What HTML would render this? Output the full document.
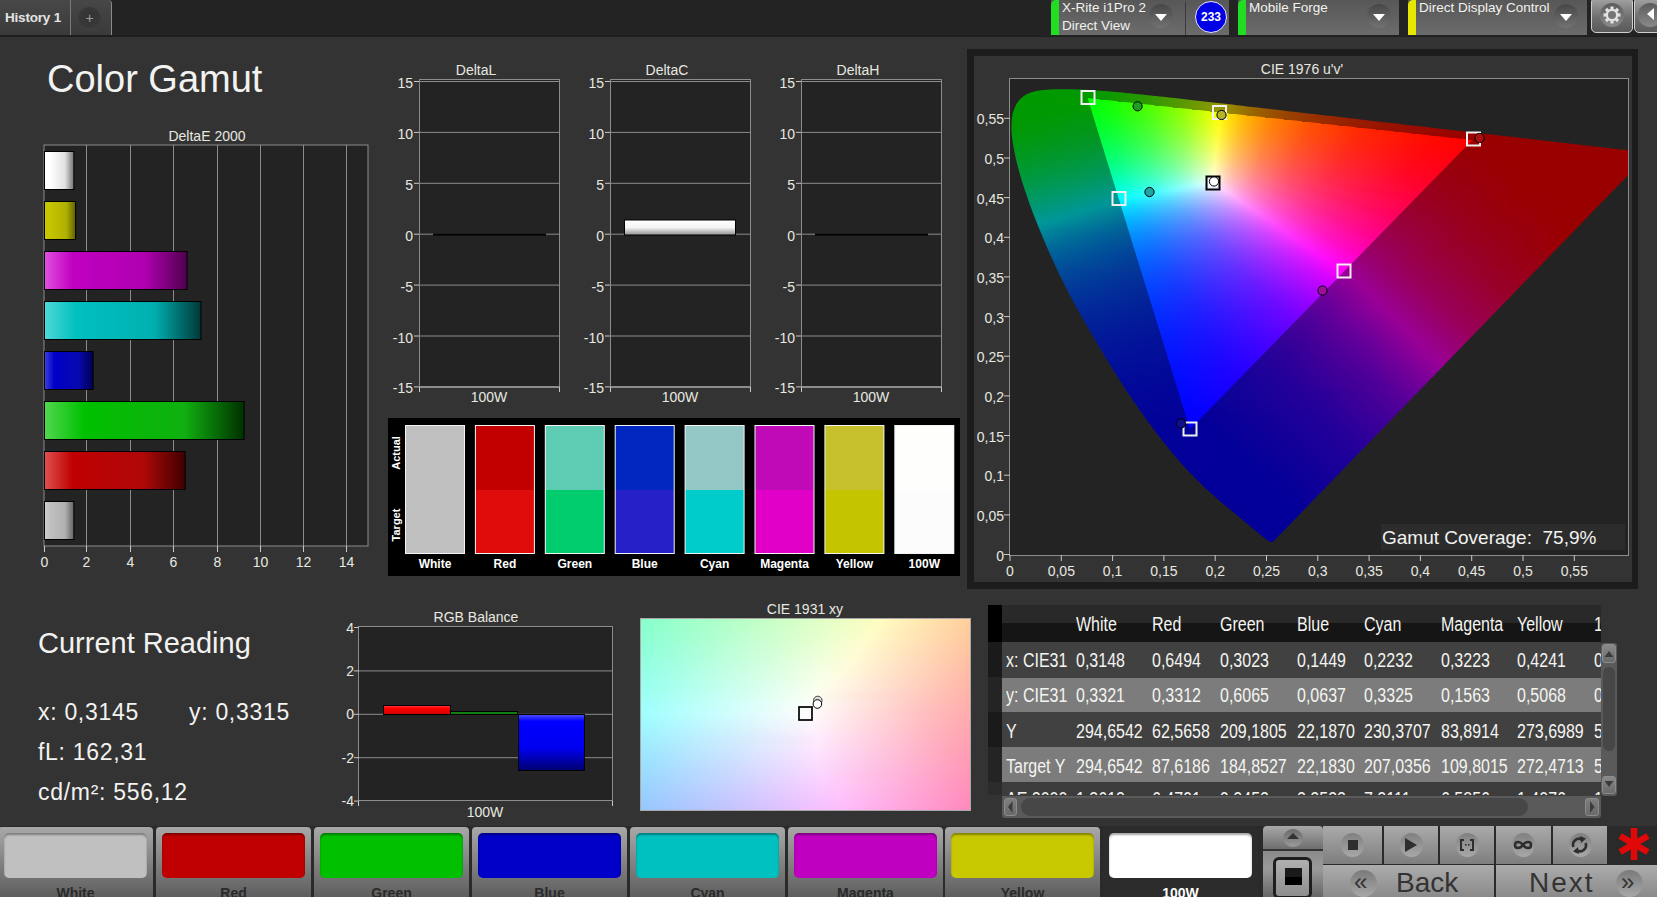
<!DOCTYPE html>
<html><head><meta charset="utf-8"><title>Color Gamut</title>
<style>
html,body{margin:0;padding:0}
body{width:1657px;height:897px;overflow:hidden;background:#333;position:relative;font-family:"Liberation Sans", sans-serif;color:#e8e8e0}
.a{position:absolute}
svg{position:absolute;left:0;top:0;overflow:visible}
svg text{font-family:"Liberation Sans", sans-serif}
</style></head><body>

<div class="a" style="left:0;top:0;width:1657px;height:36px;background:#232323"></div>
<div class="a" style="left:0;top:35px;width:1657px;height:2px;background:#1e1e1e"></div>
<div class="a" style="left:0;top:0;width:70px;height:35px;background:linear-gradient(#484848,#3a3a3a)"></div>
<div class="a" style="left:5px;top:10px;font-size:13.5px;font-weight:bold;color:#e4e4e4;white-space:nowrap;letter-spacing:-.2px">History 1</div>
<div class="a" style="left:70px;top:0;width:1px;height:35px;background:#7a7a7a"></div>
<div class="a" style="left:71px;top:0;width:41px;height:35px;background:linear-gradient(#474747,#3a3a3a);border-right:1px solid #8a8a8a;border-top-right-radius:4px;box-sizing:border-box"></div>
<div class="a" style="left:78px;top:7px;width:23px;height:24px;border-radius:50%;background:radial-gradient(circle at 50% 40%,#333 0,#383838 55%,#4a4a4a 100%)"></div>
<div class="a" style="left:84px;top:13px;width:11px;height:11px;font-size:14px;line-height:11px;text-align:center;color:#9a9a9a">+</div>
<div class="a" style="left:1040px;top:0;width:617px;height:36px;background:#232323"></div>
<div class="a" style="left:1051px;top:0;width:178px;height:35px;background:linear-gradient(#575757,#6c6c6c)"></div><div class="a" style="left:1051px;top:0;width:8px;height:35px;background:#22dd22;border-top-left-radius:5px"></div><div class="a" style="left:1062px;top:0px;font-size:13.5px;line-height:15px;color:#f2f2ee;white-space:nowrap">X-Rite i1Pro 2</div><div class="a" style="left:1062px;top:18px;font-size:13.5px;line-height:15px;color:#f2f2ee;white-space:nowrap">Direct View</div>
<div class="a" style="left:1185px;top:2px;width:1px;height:33px;background:#3a3a3a"></div>
<div class="a" style="left:1149px;top:4px;width:24px;height:24px;border-radius:50%;background:linear-gradient(#474747,#727272)"></div><div class="a" style="left:1155px;top:14px;width:0;height:0;border-left:6px solid transparent;border-right:6px solid transparent;border-top:7px solid #fff"></div>
<div class="a" style="left:1195px;top:1px;width:30px;height:30px;border-radius:50%;background:#0000e6;border:1px solid #e8e8ff;font-size:12px;font-weight:bold;line-height:30px;text-align:center;color:#fff">233</div>
<div class="a" style="left:1238px;top:0;width:161px;height:35px;background:linear-gradient(#575757,#6c6c6c)"></div><div class="a" style="left:1238px;top:0;width:8px;height:35px;background:#22dd22;border-top-left-radius:5px"></div><div class="a" style="left:1249px;top:0px;font-size:13.5px;line-height:15px;color:#f2f2ee;white-space:nowrap">Mobile Forge</div>
<div class="a" style="left:1367px;top:4px;width:24px;height:24px;border-radius:50%;background:linear-gradient(#474747,#727272)"></div><div class="a" style="left:1373px;top:14px;width:0;height:0;border-left:6px solid transparent;border-right:6px solid transparent;border-top:7px solid #fff"></div>
<div class="a" style="left:1408px;top:0;width:179px;height:35px;background:linear-gradient(#575757,#6c6c6c)"></div><div class="a" style="left:1408px;top:0;width:8px;height:35px;background:#e6e600;border-top-left-radius:5px"></div><div class="a" style="left:1419px;top:0px;font-size:13.5px;line-height:15px;color:#f2f2ee;white-space:nowrap">Direct Display Control</div>
<div class="a" style="left:1554px;top:4px;width:24px;height:24px;border-radius:50%;background:linear-gradient(#474747,#727272)"></div><div class="a" style="left:1560px;top:14px;width:0;height:0;border-left:6px solid transparent;border-right:6px solid transparent;border-top:7px solid #fff"></div>
<div class="a" style="left:1591px;top:-3px;width:42px;height:36px;box-sizing:border-box;border:1px solid #d0d0d0;border-radius:5px;background:linear-gradient(#a4a4a4,#6c6c6c 60%,#5a5a5a)"></div>
<div class="a" style="left:1600px;top:3px;width:24px;height:24px;border-radius:50%;background:linear-gradient(#5c5c5c,#8a8a8a)"></div>
<svg width="1657" height="897" style="pointer-events:none"><g transform="translate(1612,15)" fill="#e2e2e2">
<circle r="6.2"/><g id="teeth"><rect x="-1.6" y="-8.5" width="3.2" height="4" transform="rotate(0)"/><rect x="-1.6" y="-8.5" width="3.2" height="4" transform="rotate(45)"/><rect x="-1.6" y="-8.5" width="3.2" height="4" transform="rotate(90)"/><rect x="-1.6" y="-8.5" width="3.2" height="4" transform="rotate(135)"/><rect x="-1.6" y="-8.5" width="3.2" height="4" transform="rotate(180)"/><rect x="-1.6" y="-8.5" width="3.2" height="4" transform="rotate(225)"/><rect x="-1.6" y="-8.5" width="3.2" height="4" transform="rotate(270)"/><rect x="-1.6" y="-8.5" width="3.2" height="4" transform="rotate(315)"/></g>
<circle r="4" fill="#757575"/></g></svg>
<div class="a" style="left:1634px;top:-3px;width:40px;height:36px;box-sizing:border-box;border:1px solid #d0d0d0;border-radius:5px;background:linear-gradient(#a4a4a4,#6c6c6c 60%,#5a5a5a)"></div>
<div class="a" style="left:1638px;top:3px;width:24px;height:24px;border-radius:50%;background:linear-gradient(#5c5c5c,#8a8a8a)"></div>
<div class="a" style="left:1647px;top:8px;width:0;height:0;border-top:6.5px solid transparent;border-bottom:6.5px solid transparent;border-right:7px solid #fff"></div>
<div class="a" style="left:47px;top:57px;font-size:38px;line-height:44px;color:#f2f2f0;white-space:nowrap">Color Gamut</div>
<svg width="1657" height="897"><defs><linearGradient id="de_wh"><stop offset="0" stop-color="#ffffff"/><stop offset=".2" stop-color="#ffffff"/><stop offset=".7" stop-color="#e0e0e0"/><stop offset="1" stop-color="#707070"/></linearGradient><linearGradient id="de_ye"><stop offset="0" stop-color="#c8c800"/><stop offset=".2" stop-color="#c4c400"/><stop offset=".7" stop-color="#b0b000"/><stop offset="1" stop-color="#606000"/></linearGradient><linearGradient id="de_ma"><stop offset="0" stop-color="#e050e0"/><stop offset=".2" stop-color="#c000c0"/><stop offset=".7" stop-color="#b000b0"/><stop offset="1" stop-color="#500050"/></linearGradient><linearGradient id="de_cy"><stop offset="0" stop-color="#50d8d8"/><stop offset=".2" stop-color="#00c0c0"/><stop offset=".7" stop-color="#00b0b0"/><stop offset="1" stop-color="#003838"/></linearGradient><linearGradient id="de_bl"><stop offset="0" stop-color="#4040e0"/><stop offset=".2" stop-color="#0000c8"/><stop offset=".7" stop-color="#0808b0"/><stop offset="1" stop-color="#000050"/></linearGradient><linearGradient id="de_gr"><stop offset="0" stop-color="#50d850"/><stop offset=".2" stop-color="#00c000"/><stop offset=".7" stop-color="#10b010"/><stop offset="1" stop-color="#003000"/></linearGradient><linearGradient id="de_re"><stop offset="0" stop-color="#e05050"/><stop offset=".2" stop-color="#c00000"/><stop offset=".7" stop-color="#b00808"/><stop offset="1" stop-color="#400000"/></linearGradient><linearGradient id="de_gy"><stop offset="0" stop-color="#d0d0d0"/><stop offset=".2" stop-color="#c0c0c0"/><stop offset=".7" stop-color="#b0b0b0"/><stop offset="1" stop-color="#606060"/></linearGradient><linearGradient id="dc" x1="0" y1="0" x2="0" y2="1"><stop offset="0" stop-color="#fff"/><stop offset=".5" stop-color="#f4f4f4"/><stop offset="1" stop-color="#909090"/></linearGradient><linearGradient id="rb" x1="0" y1="0" x2="0" y2="1"><stop offset="0" stop-color="#ff4040"/><stop offset=".3" stop-color="#ff0000"/><stop offset="1" stop-color="#d00000"/></linearGradient><linearGradient id="bb" x1="0" y1="0" x2="0" y2="1"><stop offset="0" stop-color="#5050ff"/><stop offset=".12" stop-color="#0000ff"/><stop offset=".6" stop-color="#0000f0"/><stop offset="1" stop-color="#000070"/></linearGradient></defs><rect x="44" y="145" width="324" height="401" fill="#232323" stroke="#8c8c8c" stroke-width="1"/>
<text x="207" y="141" font-size="14" fill="#e8e8e0" text-anchor="middle">DeltaE 2000</text>
<line x1="86.5" y1="145" x2="86.5" y2="546" stroke="#8c8c8c"/>
<line x1="130.5" y1="145" x2="130.5" y2="546" stroke="#8c8c8c"/>
<line x1="173.5" y1="145" x2="173.5" y2="546" stroke="#8c8c8c"/>
<line x1="217.5" y1="145" x2="217.5" y2="546" stroke="#8c8c8c"/>
<line x1="260.5" y1="145" x2="260.5" y2="546" stroke="#8c8c8c"/>
<line x1="303.5" y1="145" x2="303.5" y2="546" stroke="#8c8c8c"/>
<line x1="346.5" y1="145" x2="346.5" y2="546" stroke="#8c8c8c"/>
<line x1="44.5" y1="546" x2="44.5" y2="552" stroke="#c8c8c8"/>
<text x="44.5" y="567" font-size="14" fill="#e8e8e0" text-anchor="middle">0</text>
<line x1="86.5" y1="546" x2="86.5" y2="552" stroke="#c8c8c8"/>
<text x="86.5" y="567" font-size="14" fill="#e8e8e0" text-anchor="middle">2</text>
<line x1="130.5" y1="546" x2="130.5" y2="552" stroke="#c8c8c8"/>
<text x="130.5" y="567" font-size="14" fill="#e8e8e0" text-anchor="middle">4</text>
<line x1="173.5" y1="546" x2="173.5" y2="552" stroke="#c8c8c8"/>
<text x="173.5" y="567" font-size="14" fill="#e8e8e0" text-anchor="middle">6</text>
<line x1="217.5" y1="546" x2="217.5" y2="552" stroke="#c8c8c8"/>
<text x="217.5" y="567" font-size="14" fill="#e8e8e0" text-anchor="middle">8</text>
<line x1="260.5" y1="546" x2="260.5" y2="552" stroke="#c8c8c8"/>
<text x="260.5" y="567" font-size="14" fill="#e8e8e0" text-anchor="middle">10</text>
<line x1="303.5" y1="546" x2="303.5" y2="552" stroke="#c8c8c8"/>
<text x="303.5" y="567" font-size="14" fill="#e8e8e0" text-anchor="middle">12</text>
<line x1="346.5" y1="546" x2="346.5" y2="552" stroke="#c8c8c8"/>
<text x="346.5" y="567" font-size="14" fill="#e8e8e0" text-anchor="middle">14</text>
<rect x="44.5" y="151.5" width="29.4" height="38" fill="url(#de_wh)" stroke="#000"/>
<rect x="44.5" y="201.5" width="31.1" height="38" fill="url(#de_ye)" stroke="#000"/>
<rect x="44.5" y="251.5" width="142.6" height="38" fill="url(#de_ma)" stroke="#000"/>
<rect x="44.5" y="301.5" width="156.4" height="38" fill="url(#de_cy)" stroke="#000"/>
<rect x="44.5" y="351.5" width="48.6" height="38" fill="url(#de_bl)" stroke="#000"/>
<rect x="44.5" y="401.5" width="199.6" height="38" fill="url(#de_gr)" stroke="#000"/>
<rect x="44.5" y="451.5" width="140.6" height="38" fill="url(#de_re)" stroke="#000"/>
<rect x="44.5" y="501.5" width="29.4" height="38" fill="url(#de_gy)" stroke="#000"/>
<rect x="419.5" y="79.5" width="140" height="307.5" fill="#232323" stroke="#8c8c8c"/>
<text x="476" y="75" font-size="14" fill="#e8e8e0" text-anchor="middle">DeltaL</text>
<line x1="419" y1="81.5" x2="559" y2="81.5" stroke="#8c8c8c"/>
<line x1="414" y1="81.5" x2="419" y2="81.5" stroke="#c8c8c8"/>
<text x="413" y="88.0" font-size="14" fill="#e8e8e0" text-anchor="end">15</text>
<line x1="419" y1="132.4" x2="559" y2="132.4" stroke="#8c8c8c"/>
<line x1="414" y1="132.4" x2="419" y2="132.4" stroke="#c8c8c8"/>
<text x="413" y="138.9" font-size="14" fill="#e8e8e0" text-anchor="end">10</text>
<line x1="419" y1="183.3" x2="559" y2="183.3" stroke="#8c8c8c"/>
<line x1="414" y1="183.3" x2="419" y2="183.3" stroke="#c8c8c8"/>
<text x="413" y="189.8" font-size="14" fill="#e8e8e0" text-anchor="end">5</text>
<line x1="419" y1="234.2" x2="559" y2="234.2" stroke="#8c8c8c"/>
<line x1="414" y1="234.2" x2="419" y2="234.2" stroke="#c8c8c8"/>
<text x="413" y="240.7" font-size="14" fill="#e8e8e0" text-anchor="end">0</text>
<line x1="419" y1="285.1" x2="559" y2="285.1" stroke="#8c8c8c"/>
<line x1="414" y1="285.1" x2="419" y2="285.1" stroke="#c8c8c8"/>
<text x="413" y="291.6" font-size="14" fill="#e8e8e0" text-anchor="end">-5</text>
<line x1="419" y1="336.0" x2="559" y2="336.0" stroke="#8c8c8c"/>
<line x1="414" y1="336.0" x2="419" y2="336.0" stroke="#c8c8c8"/>
<text x="413" y="342.5" font-size="14" fill="#e8e8e0" text-anchor="end">-10</text>
<line x1="419" y1="386.9" x2="559" y2="386.9" stroke="#8c8c8c" stroke-width="2"/>
<line x1="414" y1="386.9" x2="419" y2="386.9" stroke="#c8c8c8"/>
<text x="413" y="393.4" font-size="14" fill="#e8e8e0" text-anchor="end">-15</text>
<line x1="419.5" y1="387" x2="419.5" y2="392" stroke="#c8c8c8"/><line x1="559.5" y1="387" x2="559.5" y2="392" stroke="#c8c8c8"/>
<text x="489" y="402" font-size="14" fill="#e8e8e0" text-anchor="middle">100W</text>
<rect x="433.5" y="234" width="112" height="1" fill="#111" stroke="#000"/>
<rect x="610.5" y="79.5" width="140" height="307.5" fill="#232323" stroke="#8c8c8c"/>
<text x="667" y="75" font-size="14" fill="#e8e8e0" text-anchor="middle">DeltaC</text>
<line x1="610" y1="81.5" x2="750" y2="81.5" stroke="#8c8c8c"/>
<line x1="605" y1="81.5" x2="610" y2="81.5" stroke="#c8c8c8"/>
<text x="604" y="88.0" font-size="14" fill="#e8e8e0" text-anchor="end">15</text>
<line x1="610" y1="132.4" x2="750" y2="132.4" stroke="#8c8c8c"/>
<line x1="605" y1="132.4" x2="610" y2="132.4" stroke="#c8c8c8"/>
<text x="604" y="138.9" font-size="14" fill="#e8e8e0" text-anchor="end">10</text>
<line x1="610" y1="183.3" x2="750" y2="183.3" stroke="#8c8c8c"/>
<line x1="605" y1="183.3" x2="610" y2="183.3" stroke="#c8c8c8"/>
<text x="604" y="189.8" font-size="14" fill="#e8e8e0" text-anchor="end">5</text>
<line x1="610" y1="234.2" x2="750" y2="234.2" stroke="#8c8c8c"/>
<line x1="605" y1="234.2" x2="610" y2="234.2" stroke="#c8c8c8"/>
<text x="604" y="240.7" font-size="14" fill="#e8e8e0" text-anchor="end">0</text>
<line x1="610" y1="285.1" x2="750" y2="285.1" stroke="#8c8c8c"/>
<line x1="605" y1="285.1" x2="610" y2="285.1" stroke="#c8c8c8"/>
<text x="604" y="291.6" font-size="14" fill="#e8e8e0" text-anchor="end">-5</text>
<line x1="610" y1="336.0" x2="750" y2="336.0" stroke="#8c8c8c"/>
<line x1="605" y1="336.0" x2="610" y2="336.0" stroke="#c8c8c8"/>
<text x="604" y="342.5" font-size="14" fill="#e8e8e0" text-anchor="end">-10</text>
<line x1="610" y1="386.9" x2="750" y2="386.9" stroke="#8c8c8c" stroke-width="2"/>
<line x1="605" y1="386.9" x2="610" y2="386.9" stroke="#c8c8c8"/>
<text x="604" y="393.4" font-size="14" fill="#e8e8e0" text-anchor="end">-15</text>
<line x1="610.5" y1="387" x2="610.5" y2="392" stroke="#c8c8c8"/><line x1="750.5" y1="387" x2="750.5" y2="392" stroke="#c8c8c8"/>
<text x="680" y="402" font-size="14" fill="#e8e8e0" text-anchor="middle">100W</text>
<rect x="624.5" y="220" width="111" height="15" fill="url(#dc)" stroke="#000"/>
<rect x="801.5" y="79.5" width="140" height="307.5" fill="#232323" stroke="#8c8c8c"/>
<text x="858" y="75" font-size="14" fill="#e8e8e0" text-anchor="middle">DeltaH</text>
<line x1="801" y1="81.5" x2="941" y2="81.5" stroke="#8c8c8c"/>
<line x1="796" y1="81.5" x2="801" y2="81.5" stroke="#c8c8c8"/>
<text x="795" y="88.0" font-size="14" fill="#e8e8e0" text-anchor="end">15</text>
<line x1="801" y1="132.4" x2="941" y2="132.4" stroke="#8c8c8c"/>
<line x1="796" y1="132.4" x2="801" y2="132.4" stroke="#c8c8c8"/>
<text x="795" y="138.9" font-size="14" fill="#e8e8e0" text-anchor="end">10</text>
<line x1="801" y1="183.3" x2="941" y2="183.3" stroke="#8c8c8c"/>
<line x1="796" y1="183.3" x2="801" y2="183.3" stroke="#c8c8c8"/>
<text x="795" y="189.8" font-size="14" fill="#e8e8e0" text-anchor="end">5</text>
<line x1="801" y1="234.2" x2="941" y2="234.2" stroke="#8c8c8c"/>
<line x1="796" y1="234.2" x2="801" y2="234.2" stroke="#c8c8c8"/>
<text x="795" y="240.7" font-size="14" fill="#e8e8e0" text-anchor="end">0</text>
<line x1="801" y1="285.1" x2="941" y2="285.1" stroke="#8c8c8c"/>
<line x1="796" y1="285.1" x2="801" y2="285.1" stroke="#c8c8c8"/>
<text x="795" y="291.6" font-size="14" fill="#e8e8e0" text-anchor="end">-5</text>
<line x1="801" y1="336.0" x2="941" y2="336.0" stroke="#8c8c8c"/>
<line x1="796" y1="336.0" x2="801" y2="336.0" stroke="#c8c8c8"/>
<text x="795" y="342.5" font-size="14" fill="#e8e8e0" text-anchor="end">-10</text>
<line x1="801" y1="386.9" x2="941" y2="386.9" stroke="#8c8c8c" stroke-width="2"/>
<line x1="796" y1="386.9" x2="801" y2="386.9" stroke="#c8c8c8"/>
<text x="795" y="393.4" font-size="14" fill="#e8e8e0" text-anchor="end">-15</text>
<line x1="801.5" y1="387" x2="801.5" y2="392" stroke="#c8c8c8"/><line x1="941.5" y1="387" x2="941.5" y2="392" stroke="#c8c8c8"/>
<text x="871" y="402" font-size="14" fill="#e8e8e0" text-anchor="middle">100W</text>
<rect x="815.5" y="234" width="112" height="1" fill="#111" stroke="#000"/>
<rect x="388" y="418" width="572" height="158" fill="#000"/>
<rect x="405.0" y="425" width="60" height="129" fill="#f4f4f4"/>
<rect x="406.0" y="426" width="58" height="64" fill="#c0c0c0"/>
<rect x="406.0" y="490" width="58" height="63" fill="#c0c0c0"/>
<text x="435.0" y="568" font-size="12" font-weight="bold" fill="#fff" text-anchor="middle">White</text>
<rect x="474.9" y="425" width="60" height="129" fill="#f4f4f4"/>
<rect x="475.9" y="426" width="58" height="64" fill="#c20000"/>
<rect x="475.9" y="490" width="58" height="63" fill="#e00c0c"/>
<text x="504.9" y="568" font-size="12" font-weight="bold" fill="#fff" text-anchor="middle">Red</text>
<rect x="544.8" y="425" width="60" height="129" fill="#f4f4f4"/>
<rect x="545.8" y="426" width="58" height="64" fill="#5ecbb3"/>
<rect x="545.8" y="490" width="58" height="63" fill="#00cc6e"/>
<text x="574.8" y="568" font-size="12" font-weight="bold" fill="#fff" text-anchor="middle">Green</text>
<rect x="614.7" y="425" width="60" height="129" fill="#f4f4f4"/>
<rect x="615.7" y="426" width="58" height="64" fill="#0028c0"/>
<rect x="615.7" y="490" width="58" height="63" fill="#2620c8"/>
<text x="644.7" y="568" font-size="12" font-weight="bold" fill="#fff" text-anchor="middle">Blue</text>
<rect x="684.6" y="425" width="60" height="129" fill="#f4f4f4"/>
<rect x="685.6" y="426" width="58" height="64" fill="#93c8c6"/>
<rect x="685.6" y="490" width="58" height="63" fill="#00cccc"/>
<text x="714.6" y="568" font-size="12" font-weight="bold" fill="#fff" text-anchor="middle">Cyan</text>
<rect x="754.5" y="425" width="60" height="129" fill="#f4f4f4"/>
<rect x="755.5" y="426" width="58" height="64" fill="#c00ab8"/>
<rect x="755.5" y="490" width="58" height="63" fill="#e000c8"/>
<text x="784.5" y="568" font-size="12" font-weight="bold" fill="#fff" text-anchor="middle">Magenta</text>
<rect x="824.4" y="425" width="60" height="129" fill="#f4f4f4"/>
<rect x="825.4" y="426" width="58" height="64" fill="#c6c02c"/>
<rect x="825.4" y="490" width="58" height="63" fill="#c4c400"/>
<text x="854.4" y="568" font-size="12" font-weight="bold" fill="#fff" text-anchor="middle">Yellow</text>
<rect x="894.3" y="425" width="60" height="129" fill="#f4f4f4"/>
<rect x="895.3" y="426" width="58" height="64" fill="#fefefc"/>
<rect x="895.3" y="490" width="58" height="63" fill="#fcfcfc"/>
<text x="924.3" y="568" font-size="12" font-weight="bold" fill="#fff" text-anchor="middle">100W</text>
<text transform="translate(400,453) rotate(-90)" font-size="11" font-weight="bold" fill="#fff" text-anchor="middle">Actual</text>
<text transform="translate(400,525) rotate(-90)" font-size="11" font-weight="bold" fill="#fff" text-anchor="middle">Target</text>
<rect x="967" y="49" width="671" height="540" fill="#1c1c1c"/>
<rect x="974" y="56" width="658" height="526" fill="#333"/>
<text x="1302" y="74" font-size="14" fill="#e8e8e0" text-anchor="middle">CIE 1976 u'v'</text>
<rect x="1009.5" y="78.5" width="619" height="477" fill="#232323" stroke="#8c8c8c"/>
<defs><linearGradient id="d0"><stop offset="0" stop-color="#009900"/><stop offset=".1392" stop-color="#039900"/><stop offset=".2209" stop-color="#2a9900"/><stop offset=".2937" stop-color="#629900"/><stop offset=".3455" stop-color="#999700"/><stop offset=".3964" stop-color="#996500"/><stop offset=".4693" stop-color="#993a00"/><stop offset=".5801" stop-color="#991800"/><stop offset=".7484" stop-color="#990100"/><stop offset="1" stop-color="#990000"/></linearGradient><linearGradient id="d1"><stop offset="0" stop-color="#009900"/><stop offset=".1392" stop-color="#039900"/><stop offset=".2209" stop-color="#2a9900"/><stop offset=".2937" stop-color="#639900"/><stop offset=".3455" stop-color="#999600"/><stop offset=".3964" stop-color="#996400"/><stop offset=".4693" stop-color="#993a00"/><stop offset=".5801" stop-color="#991800"/><stop offset=".7484" stop-color="#990000"/><stop offset="1" stop-color="#990000"/></linearGradient><linearGradient id="d2"><stop offset="0" stop-color="#009900"/><stop offset=".1392" stop-color="#039900"/><stop offset=".2209" stop-color="#2a9900"/><stop offset=".2937" stop-color="#639900"/><stop offset=".3447" stop-color="#999700"/><stop offset=".3948" stop-color="#996500"/><stop offset=".4676" stop-color="#993b00"/><stop offset=".5777" stop-color="#991800"/><stop offset=".7451" stop-color="#990100"/><stop offset="1" stop-color="#990000"/></linearGradient><linearGradient id="d3"><stop offset="0" stop-color="#009900"/><stop offset=".1383" stop-color="#039900"/><stop offset=".2201" stop-color="#2a9900"/><stop offset=".2929" stop-color="#629900"/><stop offset=".3447" stop-color="#999600"/><stop offset=".3956" stop-color="#996500"/><stop offset=".4684" stop-color="#993a00"/><stop offset=".5793" stop-color="#991800"/><stop offset=".7476" stop-color="#990000"/><stop offset="1" stop-color="#990000"/></linearGradient><linearGradient id="d4"><stop offset="0" stop-color="#009900"/><stop offset=".1383" stop-color="#039900"/><stop offset=".2201" stop-color="#2a9900"/><stop offset=".2929" stop-color="#639900"/><stop offset=".3447" stop-color="#999600"/><stop offset=".3956" stop-color="#996400"/><stop offset=".4684" stop-color="#993a00"/><stop offset=".5793" stop-color="#991800"/><stop offset=".7476" stop-color="#990000"/><stop offset="1" stop-color="#990000"/></linearGradient><linearGradient id="d5"><stop offset="0" stop-color="#009900"/><stop offset=".1375" stop-color="#039900"/><stop offset=".2193" stop-color="#2a9900"/><stop offset=".2921" stop-color="#629900"/><stop offset=".3439" stop-color="#999600"/><stop offset=".3948" stop-color="#996500"/><stop offset=".4676" stop-color="#993a00"/><stop offset=".5785" stop-color="#991800"/><stop offset=".7468" stop-color="#990000"/><stop offset="1" stop-color="#990000"/></linearGradient><linearGradient id="d6"><stop offset="0" stop-color="#009900"/><stop offset=".1367" stop-color="#039900"/><stop offset=".2168" stop-color="#299900"/><stop offset=".2905" stop-color="#619900"/><stop offset=".3439" stop-color="#999600"/><stop offset=".3948" stop-color="#996400"/><stop offset=".4676" stop-color="#993a00"/><stop offset=".5785" stop-color="#991800"/><stop offset=".7468" stop-color="#990000"/><stop offset="1" stop-color="#990000"/></linearGradient><linearGradient id="b6"><stop offset="0" stop-color="#00ff01"/><stop offset="1" stop-color="#0aff00"/></linearGradient><linearGradient id="d7"><stop offset="0" stop-color="#009900"/><stop offset=".1351" stop-color="#039901"/><stop offset=".2128" stop-color="#279900"/><stop offset=".2872" stop-color="#5e9900"/><stop offset=".343" stop-color="#999700"/><stop offset=".394" stop-color="#996500"/><stop offset=".4668" stop-color="#993a00"/><stop offset=".5777" stop-color="#991800"/><stop offset=".746" stop-color="#990000"/><stop offset="1" stop-color="#990000"/></linearGradient><linearGradient id="b7"><stop offset="0" stop-color="#00ff03"/><stop offset=".7656" stop-color="#15ff00"/><stop offset="1" stop-color="#1fff00"/></linearGradient><linearGradient id="d8"><stop offset="0" stop-color="#009900"/><stop offset=".1343" stop-color="#039903"/><stop offset=".2249" stop-color="#2e9900"/><stop offset=".2969" stop-color="#689900"/><stop offset=".343" stop-color="#999600"/><stop offset=".394" stop-color="#996400"/><stop offset=".4668" stop-color="#993a00"/><stop offset=".5777" stop-color="#991800"/><stop offset=".746" stop-color="#990000"/><stop offset="1" stop-color="#990000"/></linearGradient><linearGradient id="b8"><stop offset="0" stop-color="#00ff05"/><stop offset=".4216" stop-color="#11ff03"/><stop offset="1" stop-color="#3aff00"/></linearGradient><linearGradient id="d9"><stop offset="0" stop-color="#009900"/><stop offset=".1278" stop-color="#009904"/><stop offset=".2468" stop-color="#3e9900"/><stop offset=".3147" stop-color="#7b9900"/><stop offset=".343" stop-color="#999600"/><stop offset=".394" stop-color="#996400"/><stop offset=".4668" stop-color="#993a00"/><stop offset=".5777" stop-color="#991800"/><stop offset=".746" stop-color="#990000"/><stop offset="1" stop-color="#990000"/></linearGradient><linearGradient id="b9"><stop offset="0" stop-color="#00ff08"/><stop offset=".3382" stop-color="#13ff05"/><stop offset=".9118" stop-color="#4dff00"/><stop offset="1" stop-color="#59ff00"/></linearGradient><linearGradient id="d10"><stop offset="0" stop-color="#009900"/><stop offset=".1189" stop-color="#009904"/><stop offset=".14" stop-color="#069905"/><stop offset=".2718" stop-color="#529900"/><stop offset=".335" stop-color="#939900"/><stop offset=".3447" stop-color="#999300"/><stop offset=".3964" stop-color="#996200"/><stop offset=".4709" stop-color="#993800"/><stop offset=".5841" stop-color="#991600"/><stop offset=".7532" stop-color="#990000"/><stop offset="1" stop-color="#990000"/></linearGradient><linearGradient id="b10"><stop offset="0" stop-color="#00ff0a"/><stop offset=".2326" stop-color="#0fff08"/><stop offset=".686" stop-color="#48ff03"/><stop offset="1" stop-color="#7dff00"/></linearGradient><linearGradient id="d11"><stop offset="0" stop-color="#009900"/><stop offset=".1117" stop-color="#009905"/><stop offset=".1367" stop-color="#049907"/><stop offset=".2985" stop-color="#6b9900"/><stop offset=".3422" stop-color="#999600"/><stop offset=".3932" stop-color="#996400"/><stop offset=".466" stop-color="#993a00"/><stop offset=".5769" stop-color="#991800"/><stop offset=".7451" stop-color="#990000"/><stop offset="1" stop-color="#990000"/></linearGradient><linearGradient id="b11"><stop offset="0" stop-color="#00ff0d"/><stop offset=".2067" stop-color="#12ff0b"/><stop offset=".5769" stop-color="#4bff05"/><stop offset=".9183" stop-color="#96ff01"/><stop offset="1" stop-color="#abff00"/></linearGradient><linearGradient id="d12"><stop offset="0" stop-color="#009900"/><stop offset=".1052" stop-color="#009905"/><stop offset=".1367" stop-color="#039909"/><stop offset=".3261" stop-color="#899900"/><stop offset=".3422" stop-color="#999500"/><stop offset=".3932" stop-color="#996400"/><stop offset=".4668" stop-color="#993a00"/><stop offset=".5785" stop-color="#991700"/><stop offset=".7468" stop-color="#990000"/><stop offset="1" stop-color="#990000"/></linearGradient><linearGradient id="b12"><stop offset="0" stop-color="#00ff10"/><stop offset=".1901" stop-color="#14ff0d"/><stop offset=".5083" stop-color="#4fff08"/><stop offset=".7975" stop-color="#9bff03"/><stop offset="1" stop-color="#dfff00"/></linearGradient><linearGradient id="d13"><stop offset="0" stop-color="#009900"/><stop offset=".1019" stop-color="#009906"/><stop offset=".1375" stop-color="#03990b"/><stop offset=".3519" stop-color="#998a00"/><stop offset=".407" stop-color="#995a00"/><stop offset=".4871" stop-color="#993100"/><stop offset=".61" stop-color="#991100"/><stop offset=".7686" stop-color="#990000"/><stop offset="1" stop-color="#990000"/></linearGradient><linearGradient id="b13"><stop offset="0" stop-color="#00ff13"/><stop offset=".1429" stop-color="#10ff11"/><stop offset=".4143" stop-color="#48ff0c"/><stop offset=".6679" stop-color="#93ff07"/><stop offset=".8857" stop-color="#e9ff02"/><stop offset=".9393" stop-color="#fffc01"/><stop offset="1" stop-color="#ffe100"/></linearGradient><linearGradient id="d14"><stop offset="0" stop-color="#009900"/><stop offset=".1052" stop-color="#009908"/><stop offset=".1392" stop-color="#04980d"/><stop offset=".3835" stop-color="#996b00"/><stop offset=".4523" stop-color="#994000"/><stop offset=".5558" stop-color="#991c00"/><stop offset=".7168" stop-color="#990300"/><stop offset="1" stop-color="#990000"/></linearGradient><linearGradient id="b14"><stop offset="0" stop-color="#00ff16"/><stop offset=".1369" stop-color="#12ff14"/><stop offset=".379" stop-color="#4cff0f"/><stop offset=".6019" stop-color="#98ff0a"/><stop offset=".793" stop-color="#efff05"/><stop offset=".8312" stop-color="#fffb04"/><stop offset=".9745" stop-color="#ffbc00"/><stop offset="1" stop-color="#ffb300"/></linearGradient><linearGradient id="d15"><stop offset="0" stop-color="#009900"/><stop offset=".1246" stop-color="#00990d"/><stop offset=".1456" stop-color="#06970e"/><stop offset=".4134" stop-color="#995500"/><stop offset=".4968" stop-color="#992d00"/><stop offset=".6262" stop-color="#990e00"/><stop offset=".7767" stop-color="#990000"/><stop offset="1" stop-color="#990000"/></linearGradient><linearGradient id="b15"><stop offset="0" stop-color="#00ff19"/><stop offset=".1322" stop-color="#15ff17"/><stop offset=".3477" stop-color="#4fff12"/><stop offset=".546" stop-color="#9cff0d"/><stop offset=".7155" stop-color="#f3ff08"/><stop offset=".7414" stop-color="#fffc08"/><stop offset=".8707" stop-color="#ffbc03"/><stop offset="1" stop-color="#ff8f00"/></linearGradient><linearGradient id="d16"><stop offset="0" stop-color="#009900"/><stop offset=".1416" stop-color="#039711"/><stop offset=".4442" stop-color="#994300"/><stop offset=".5437" stop-color="#991f00"/><stop offset=".699" stop-color="#990400"/><stop offset=".8754" stop-color="#990000"/><stop offset="1" stop-color="#990000"/></linearGradient><linearGradient id="b16"><stop offset="0" stop-color="#00ff1d"/><stop offset=".1036" stop-color="#10ff1b"/><stop offset=".2979" stop-color="#49ff17"/><stop offset=".4767" stop-color="#94ff12"/><stop offset=".6321" stop-color="#ebff0d"/><stop offset=".6684" stop-color="#fffb0c"/><stop offset=".785" stop-color="#ffbb06"/><stop offset=".9378" stop-color="#ff8301"/><stop offset="1" stop-color="#ff7100"/></linearGradient><linearGradient id="d17"><stop offset="0" stop-color="#009900"/><stop offset=".1432" stop-color="#039713"/><stop offset=".4749" stop-color="#993500"/><stop offset=".5922" stop-color="#991400"/><stop offset=".7573" stop-color="#990000"/><stop offset="1" stop-color="#990000"/></linearGradient><linearGradient id="b17"><stop offset="0" stop-color="#00ff20"/><stop offset=".1024" stop-color="#13ff1e"/><stop offset=".2786" stop-color="#4cff1a"/><stop offset=".4405" stop-color="#98ff16"/><stop offset=".581" stop-color="#efff11"/><stop offset=".6071" stop-color="#fffc10"/><stop offset=".7119" stop-color="#ffbd09"/><stop offset=".85" stop-color="#ff8403"/><stop offset="1" stop-color="#ff5b00"/></linearGradient><linearGradient id="d18"><stop offset="0" stop-color="#009900"/><stop offset=".1448" stop-color="#039715"/><stop offset=".5049" stop-color="#992a00"/><stop offset=".6392" stop-color="#990c00"/><stop offset=".7832" stop-color="#990000"/><stop offset="1" stop-color="#990000"/></linearGradient><linearGradient id="b18"><stop offset="0" stop-color="#00ff24"/><stop offset=".083" stop-color="#0fff22"/><stop offset=".2445" stop-color="#47ff1e"/><stop offset=".3952" stop-color="#92ff1a"/><stop offset=".524" stop-color="#e8ff16"/><stop offset=".5568" stop-color="#fffc15"/><stop offset=".6528" stop-color="#ffbc0d"/><stop offset=".7795" stop-color="#ff8306"/><stop offset=".952" stop-color="#ff5201"/><stop offset="1" stop-color="#ff4700"/></linearGradient><linearGradient id="d19"><stop offset="0" stop-color="#009901"/><stop offset=".1456" stop-color="#039717"/><stop offset=".5348" stop-color="#992100"/><stop offset=".6861" stop-color="#990600"/><stop offset=".8261" stop-color="#990000"/><stop offset="1" stop-color="#990000"/></linearGradient><linearGradient id="b19"><stop offset="0" stop-color="#00ff27"/><stop offset=".0813" stop-color="#11ff26"/><stop offset=".2297" stop-color="#4aff23"/><stop offset=".3679" stop-color="#95ff1f"/><stop offset=".4878" stop-color="#ecff1b"/><stop offset=".5142" stop-color="#fffb1a"/><stop offset=".6037" stop-color="#ffbb11"/><stop offset=".7215" stop-color="#ff8209"/><stop offset=".8821" stop-color="#ff5102"/><stop offset="1" stop-color="#ff3800"/></linearGradient><linearGradient id="d20"><stop offset="0" stop-color="#009903"/><stop offset=".1481" stop-color="#039719"/><stop offset=".5655" stop-color="#991900"/><stop offset=".7314" stop-color="#990100"/><stop offset="1" stop-color="#990000"/></linearGradient><linearGradient id="b20"><stop offset="0" stop-color="#00ff2b"/><stop offset=".0817" stop-color="#13ff29"/><stop offset=".2205" stop-color="#4eff27"/><stop offset=".3479" stop-color="#9aff23"/><stop offset=".4582" stop-color="#f2ff20"/><stop offset=".4753" stop-color="#fffc1f"/><stop offset=".557" stop-color="#ffbd15"/><stop offset=".6654" stop-color="#ff840c"/><stop offset=".8137" stop-color="#ff5205"/><stop offset="1" stop-color="#ff2c00"/></linearGradient><linearGradient id="d21"><stop offset="0" stop-color="#009904"/><stop offset=".1497" stop-color="#03961b"/><stop offset=".5963" stop-color="#991300"/><stop offset=".7589" stop-color="#990000"/><stop offset="1" stop-color="#990000"/></linearGradient><linearGradient id="b21"><stop offset="0" stop-color="#00ff2f"/><stop offset=".0656" stop-color="#0fff2e"/><stop offset=".1933" stop-color="#47ff2b"/><stop offset=".3121" stop-color="#91ff29"/><stop offset=".4149" stop-color="#e6ff26"/><stop offset=".4415" stop-color="#fffd25"/><stop offset=".5177" stop-color="#ffbd19"/><stop offset=".6188" stop-color="#ff840f"/><stop offset=".7553" stop-color="#ff5207"/><stop offset=".9504" stop-color="#ff2801"/><stop offset="1" stop-color="#ff2100"/></linearGradient><linearGradient id="d22"><stop offset="0" stop-color="#009905"/><stop offset=".1513" stop-color="#03961e"/><stop offset=".6262" stop-color="#990e00"/><stop offset=".7759" stop-color="#990000"/><stop offset="1" stop-color="#990000"/></linearGradient><linearGradient id="b22"><stop offset="0" stop-color="#00ff33"/><stop offset=".0669" stop-color="#12ff32"/><stop offset=".1873" stop-color="#4bff30"/><stop offset=".2977" stop-color="#96ff2d"/><stop offset=".393" stop-color="#ecff2b"/><stop offset=".413" stop-color="#fffd2a"/><stop offset=".4849" stop-color="#ffbc1e"/><stop offset=".5786" stop-color="#ff8413"/><stop offset=".7074" stop-color="#ff520a"/><stop offset=".8896" stop-color="#ff2802"/><stop offset="1" stop-color="#ff1800"/></linearGradient><linearGradient id="d23"><stop offset="0" stop-color="#009907"/><stop offset=".1529" stop-color="#039620"/><stop offset=".6561" stop-color="#990900"/><stop offset=".7929" stop-color="#990000"/><stop offset="1" stop-color="#990000"/></linearGradient><linearGradient id="b23"><stop offset="0" stop-color="#00ff37"/><stop offset=".0552" stop-color="#0eff36"/><stop offset=".1672" stop-color="#45ff35"/><stop offset=".2729" stop-color="#8fff33"/><stop offset=".3644" stop-color="#e6ff31"/><stop offset=".3896" stop-color="#fffc30"/><stop offset=".4558" stop-color="#ffbd22"/><stop offset=".5442" stop-color="#ff8416"/><stop offset=".664" stop-color="#ff520c"/><stop offset=".8344" stop-color="#ff2804"/><stop offset="1" stop-color="#ff1100"/></linearGradient><linearGradient id="d24"><stop offset="0" stop-color="#009908"/><stop offset=".1545" stop-color="#039623"/><stop offset=".6869" stop-color="#990500"/><stop offset=".8301" stop-color="#990000"/><stop offset="1" stop-color="#990000"/></linearGradient><linearGradient id="b24"><stop offset="0" stop-color="#00ff3b"/><stop offset=".0552" stop-color="#10ff3a"/><stop offset=".1612" stop-color="#48ff39"/><stop offset=".2597" stop-color="#93ff38"/><stop offset=".3448" stop-color="#eaff36"/><stop offset=".3642" stop-color="#fffd36"/><stop offset=".4269" stop-color="#ffbd27"/><stop offset=".509" stop-color="#ff851a"/><stop offset=".6209" stop-color="#ff530f"/><stop offset=".7806" stop-color="#ff2906"/><stop offset="1" stop-color="#ff0a00"/></linearGradient><linearGradient id="d25"><stop offset="0" stop-color="#00990a"/><stop offset=".1561" stop-color="#039625"/><stop offset=".7168" stop-color="#990200"/><stop offset="1" stop-color="#990000"/></linearGradient><linearGradient id="b25"><stop offset="0" stop-color="#00ff3f"/><stop offset=".0568" stop-color="#12ff3f"/><stop offset=".1577" stop-color="#4cff3e"/><stop offset=".25" stop-color="#98ff3d"/><stop offset=".3295" stop-color="#efff3c"/><stop offset=".3438" stop-color="#fffc3c"/><stop offset=".4034" stop-color="#ffbc2c"/><stop offset=".4815" stop-color="#ff841e"/><stop offset=".5881" stop-color="#ff5212"/><stop offset=".7401" stop-color="#ff2808"/><stop offset=".9602" stop-color="#ff0801"/><stop offset="1" stop-color="#ff0500"/></linearGradient><linearGradient id="d26"><stop offset="0" stop-color="#00990c"/><stop offset=".1578" stop-color="#039628"/><stop offset=".7476" stop-color="#990000"/><stop offset="1" stop-color="#990000"/></linearGradient><linearGradient id="b26"><stop offset="0" stop-color="#00ff43"/><stop offset=".0472" stop-color="#0eff43"/><stop offset=".1415" stop-color="#46ff43"/><stop offset=".2291" stop-color="#90ff43"/><stop offset=".3046" stop-color="#e5ff43"/><stop offset=".3261" stop-color="#fffc42"/><stop offset=".3827" stop-color="#ffbc31"/><stop offset=".4569" stop-color="#ff8322"/><stop offset=".558" stop-color="#ff5115"/><stop offset=".7022" stop-color="#ff280a"/><stop offset=".9111" stop-color="#ff0802"/><stop offset="1" stop-color="#ff0100"/></linearGradient><linearGradient id="d27"><stop offset="0" stop-color="#00990d"/><stop offset=".1578" stop-color="#03962a"/><stop offset=".7581" stop-color="#990000"/><stop offset="1" stop-color="#990000"/></linearGradient><linearGradient id="b27"><stop offset="0" stop-color="#00ff48"/><stop offset=".0492" stop-color="#10ff48"/><stop offset=".1423" stop-color="#49ff48"/><stop offset=".2274" stop-color="#94ff49"/><stop offset=".3019" stop-color="#ebff49"/><stop offset=".3178" stop-color="#fffd48"/><stop offset=".3723" stop-color="#ffbd37"/><stop offset=".4441" stop-color="#ff8526"/><stop offset=".5426" stop-color="#ff5318"/><stop offset=".6822" stop-color="#ff290c"/><stop offset=".8856" stop-color="#ff0903"/><stop offset="1" stop-color="#ff0000"/></linearGradient><linearGradient id="d28"><stop offset="0" stop-color="#00990f"/><stop offset=".1594" stop-color="#03962d"/><stop offset=".7549" stop-color="#990000"/><stop offset="1" stop-color="#990000"/></linearGradient><linearGradient id="b28"><stop offset="0" stop-color="#00ff4c"/><stop offset=".0536" stop-color="#13ff4d"/><stop offset=".1461" stop-color="#4dff4e"/><stop offset=".2306" stop-color="#98ff4f"/><stop offset=".3043" stop-color="#efff50"/><stop offset=".3177" stop-color="#fffc4f"/><stop offset=".3727" stop-color="#ffbc3c"/><stop offset=".445" stop-color="#ff842a"/><stop offset=".5442" stop-color="#ff521b"/><stop offset=".685" stop-color="#ff280f"/><stop offset=".8901" stop-color="#ff0804"/><stop offset="1" stop-color="#ff0001"/></linearGradient><linearGradient id="d29"><stop offset="0" stop-color="#009911"/><stop offset=".1594" stop-color="#039630"/><stop offset=".7516" stop-color="#990000"/><stop offset="1" stop-color="#990000"/></linearGradient><linearGradient id="b29"><stop offset="0" stop-color="#00ff51"/><stop offset=".0472" stop-color="#0fff52"/><stop offset=".1402" stop-color="#47ff53"/><stop offset=".2264" stop-color="#92ff55"/><stop offset=".3005" stop-color="#e9ff56"/><stop offset=".3181" stop-color="#fffd56"/><stop offset=".3733" stop-color="#ffbd41"/><stop offset=".4461" stop-color="#ff842f"/><stop offset=".5445" stop-color="#ff521f"/><stop offset=".6846" stop-color="#ff2811"/><stop offset=".8881" stop-color="#ff0806"/><stop offset="1" stop-color="#ff0003"/></linearGradient><linearGradient id="d30"><stop offset="0" stop-color="#009913"/><stop offset=".1602" stop-color="#039633"/><stop offset=".7484" stop-color="#990001"/><stop offset="1" stop-color="#990000"/></linearGradient><linearGradient id="b30"><stop offset="0" stop-color="#00ff56"/><stop offset=".0503" stop-color="#11ff57"/><stop offset=".1427" stop-color="#4aff59"/><stop offset=".2283" stop-color="#95ff5b"/><stop offset=".3016" stop-color="#ebff5d"/><stop offset=".3179" stop-color="#fffd5d"/><stop offset=".3723" stop-color="#ffbd47"/><stop offset=".4443" stop-color="#ff8434"/><stop offset=".5421" stop-color="#ff5323"/><stop offset=".6807" stop-color="#ff2914"/><stop offset=".8832" stop-color="#ff0908"/><stop offset="1" stop-color="#ff0004"/></linearGradient><linearGradient id="d31"><stop offset="0" stop-color="#009915"/><stop offset=".1602" stop-color="#039636"/><stop offset=".7451" stop-color="#990002"/><stop offset="1" stop-color="#990000"/></linearGradient><linearGradient id="b31"><stop offset="0" stop-color="#00ff5b"/><stop offset=".0437" stop-color="#0dff5c"/><stop offset=".1352" stop-color="#43ff5e"/><stop offset=".2213" stop-color="#8cff61"/><stop offset=".2964" stop-color="#e2ff64"/><stop offset=".3197" stop-color="#fffc64"/><stop offset=".3743" stop-color="#ffbc4d"/><stop offset=".4467" stop-color="#ff8438"/><stop offset=".5451" stop-color="#ff5226"/><stop offset=".6844" stop-color="#ff2816"/><stop offset=".888" stop-color="#ff080a"/><stop offset="1" stop-color="#ff0005"/></linearGradient><linearGradient id="d32"><stop offset="0" stop-color="#009917"/><stop offset=".1618" stop-color="#039639"/><stop offset=".7427" stop-color="#990003"/><stop offset="1" stop-color="#990000"/></linearGradient><linearGradient id="b32"><stop offset="0" stop-color="#00ff60"/><stop offset=".0467" stop-color="#0fff61"/><stop offset=".1387" stop-color="#47ff64"/><stop offset=".2239" stop-color="#90ff68"/><stop offset=".2981" stop-color="#e7ff6b"/><stop offset=".3173" stop-color="#fffd6c"/><stop offset=".3723" stop-color="#ffbd53"/><stop offset=".4451" stop-color="#ff833d"/><stop offset=".544" stop-color="#ff5229"/><stop offset=".6841" stop-color="#ff2819"/><stop offset=".8874" stop-color="#ff080b"/><stop offset="1" stop-color="#ff0007"/></linearGradient><linearGradient id="d33"><stop offset="0" stop-color="#009919"/><stop offset=".1618" stop-color="#02973c"/><stop offset=".7395" stop-color="#990003"/><stop offset=".9571" stop-color="#990000"/><stop offset="1" stop-color="#990000"/></linearGradient><linearGradient id="b33"><stop offset="0" stop-color="#00ff65"/><stop offset=".0512" stop-color="#12ff67"/><stop offset=".144" stop-color="#4bff6a"/><stop offset=".2285" stop-color="#96ff6f"/><stop offset=".3019" stop-color="#edff73"/><stop offset=".3172" stop-color="#fffc73"/><stop offset=".3726" stop-color="#ffbc59"/><stop offset=".4446" stop-color="#ff8342"/><stop offset=".5429" stop-color="#ff522d"/><stop offset=".6828" stop-color="#ff281c"/><stop offset=".8864" stop-color="#ff080d"/><stop offset="1" stop-color="#ff0008"/></linearGradient><linearGradient id="d34"><stop offset="0" stop-color="#00991b"/><stop offset=".1626" stop-color="#02973f"/><stop offset=".7362" stop-color="#990004"/><stop offset=".8511" stop-color="#990000"/><stop offset="1" stop-color="#990000"/></linearGradient><linearGradient id="b34"><stop offset="0" stop-color="#00ff6a"/><stop offset=".0446" stop-color="#0eff6c"/><stop offset=".1365" stop-color="#45ff70"/><stop offset=".2228" stop-color="#8fff75"/><stop offset=".2967" stop-color="#e4ff7a"/><stop offset=".3175" stop-color="#fffd7b"/><stop offset=".3719" stop-color="#ffbe60"/><stop offset=".4443" stop-color="#ff8447"/><stop offset=".5418" stop-color="#ff5332"/><stop offset=".6811" stop-color="#ff291f"/><stop offset=".883" stop-color="#ff0910"/><stop offset="1" stop-color="#ff000a"/></linearGradient><linearGradient id="d35"><stop offset="0" stop-color="#00991d"/><stop offset=".1634" stop-color="#029742"/><stop offset=".733" stop-color="#990005"/><stop offset=".8309" stop-color="#990000"/><stop offset="1" stop-color="#990000"/></linearGradient><linearGradient id="b35"><stop offset="0" stop-color="#00ff6f"/><stop offset=".0478" stop-color="#0fff71"/><stop offset=".1404" stop-color="#48ff76"/><stop offset=".2261" stop-color="#93ff7c"/><stop offset=".3006" stop-color="#eaff82"/><stop offset=".3174" stop-color="#fffd83"/><stop offset=".3722" stop-color="#ffbd66"/><stop offset=".4438" stop-color="#ff844c"/><stop offset=".5421" stop-color="#ff5235"/><stop offset=".6812" stop-color="#ff2922"/><stop offset=".8834" stop-color="#ff0912"/><stop offset="1" stop-color="#ff000c"/></linearGradient><linearGradient id="d36"><stop offset="0" stop-color="#00991f"/><stop offset=".1634" stop-color="#029745"/><stop offset=".729" stop-color="#990007"/><stop offset=".822" stop-color="#990000"/><stop offset="1" stop-color="#990000"/></linearGradient><linearGradient id="b36"><stop offset="0" stop-color="#00ff75"/><stop offset=".0424" stop-color="#0cff77"/><stop offset=".1342" stop-color="#42ff7c"/><stop offset=".2203" stop-color="#8cff83"/><stop offset=".2952" stop-color="#e1ff8a"/><stop offset=".3192" stop-color="#fffc8b"/><stop offset=".3743" stop-color="#ffbc6c"/><stop offset=".4463" stop-color="#ff8351"/><stop offset=".5452" stop-color="#ff5239"/><stop offset=".685" stop-color="#ff2824"/><stop offset=".8884" stop-color="#ff0813"/><stop offset="1" stop-color="#ff000e"/></linearGradient><linearGradient id="d37"><stop offset="0" stop-color="#009922"/><stop offset=".165" stop-color="#029749"/><stop offset=".7257" stop-color="#990008"/><stop offset=".8196" stop-color="#990000"/><stop offset="1" stop-color="#990000"/></linearGradient><linearGradient id="b37"><stop offset="0" stop-color="#00ff7a"/><stop offset=".0456" stop-color="#0eff7d"/><stop offset=".1382" stop-color="#46ff83"/><stop offset=".2236" stop-color="#90ff8a"/><stop offset=".2977" stop-color="#e5ff92"/><stop offset=".3177" stop-color="#fffd93"/><stop offset=".3718" stop-color="#ffbe74"/><stop offset=".443" stop-color="#ff8558"/><stop offset=".5413" stop-color="#ff533e"/><stop offset=".6795" stop-color="#ff2928"/><stop offset=".8818" stop-color="#ff0916"/><stop offset="1" stop-color="#ff000f"/></linearGradient><linearGradient id="d38"><stop offset="0" stop-color="#009924"/><stop offset=".1659" stop-color="#02974c"/><stop offset=".7225" stop-color="#990009"/><stop offset=".8188" stop-color="#990000"/><stop offset="1" stop-color="#990000"/></linearGradient><linearGradient id="b38"><stop offset="0" stop-color="#00ff80"/><stop offset=".0489" stop-color="#10ff83"/><stop offset=".1408" stop-color="#48ff8a"/><stop offset=".2256" stop-color="#92ff92"/><stop offset=".2989" stop-color="#e8ff9b"/><stop offset=".3175" stop-color="#fffc9c"/><stop offset=".3721" stop-color="#ffbd7a"/><stop offset=".444" stop-color="#ff845d"/><stop offset=".5417" stop-color="#ff5342"/><stop offset=".681" stop-color="#ff292b"/><stop offset=".8836" stop-color="#ff0918"/><stop offset="1" stop-color="#ff0011"/></linearGradient><linearGradient id="d39"><stop offset="0" stop-color="#009926"/><stop offset=".1659" stop-color="#02974f"/><stop offset=".7193" stop-color="#99000a"/><stop offset=".8188" stop-color="#990000"/><stop offset="1" stop-color="#990000"/></linearGradient><linearGradient id="b39"><stop offset="0" stop-color="#00ff86"/><stop offset=".0434" stop-color="#0dff89"/><stop offset=".1358" stop-color="#44ff90"/><stop offset=".2225" stop-color="#8eff99"/><stop offset=".2977" stop-color="#e5ffa3"/><stop offset=".3194" stop-color="#fffca4"/><stop offset=".3743" stop-color="#ffbc81"/><stop offset=".4465" stop-color="#ff8362"/><stop offset=".5448" stop-color="#ff5246"/><stop offset=".685" stop-color="#ff282e"/><stop offset=".8887" stop-color="#ff081a"/><stop offset="1" stop-color="#ff0013"/></linearGradient><linearGradient id="d40"><stop offset="0" stop-color="#009929"/><stop offset=".1667" stop-color="#029753"/><stop offset=".716" stop-color="#99000b"/><stop offset=".8196" stop-color="#990000"/><stop offset="1" stop-color="#990000"/></linearGradient><linearGradient id="b40"><stop offset="0" stop-color="#00ff8c"/><stop offset=".0466" stop-color="#0fff8f"/><stop offset=".1385" stop-color="#46ff98"/><stop offset=".2245" stop-color="#91ffa1"/><stop offset=".2988" stop-color="#e7ffac"/><stop offset=".3178" stop-color="#fffdad"/><stop offset=".3717" stop-color="#ffbe89"/><stop offset=".4431" stop-color="#ff8569"/><stop offset=".5408" stop-color="#ff534c"/><stop offset=".6793" stop-color="#ff2932"/><stop offset=".8805" stop-color="#ff091d"/><stop offset="1" stop-color="#ff0015"/></linearGradient><linearGradient id="d41"><stop offset="0" stop-color="#00992b"/><stop offset=".1683" stop-color="#029757"/><stop offset=".7128" stop-color="#99000c"/><stop offset=".8204" stop-color="#990000"/><stop offset="1" stop-color="#990000"/></linearGradient><linearGradient id="b41"><stop offset="0" stop-color="#00ff92"/><stop offset=".05" stop-color="#11ff96"/><stop offset=".1426" stop-color="#4aff9f"/><stop offset=".2279" stop-color="#95ffaa"/><stop offset=".3015" stop-color="#ecffb5"/><stop offset=".3176" stop-color="#fffcb6"/><stop offset=".3721" stop-color="#ffbd90"/><stop offset=".4441" stop-color="#ff846e"/><stop offset=".5426" stop-color="#ff5250"/><stop offset=".6824" stop-color="#ff2835"/><stop offset=".8853" stop-color="#ff081f"/><stop offset="1" stop-color="#ff0017"/></linearGradient><linearGradient id="d42"><stop offset="0" stop-color="#00992e"/><stop offset=".1691" stop-color="#02975a"/><stop offset=".7104" stop-color="#99000d"/><stop offset=".822" stop-color="#990000"/><stop offset="1" stop-color="#990000"/></linearGradient><linearGradient id="b42"><stop offset="0" stop-color="#00ff98"/><stop offset=".0429" stop-color="#0dff9c"/><stop offset=".1346" stop-color="#43ffa5"/><stop offset=".2204" stop-color="#8cffb1"/><stop offset=".2959" stop-color="#e2ffbd"/><stop offset=".318" stop-color="#fffdc0"/><stop offset=".3728" stop-color="#ffbd98"/><stop offset=".4453" stop-color="#ff8474"/><stop offset=".5429" stop-color="#ff5255"/><stop offset=".682" stop-color="#ff2939"/><stop offset=".8846" stop-color="#ff0922"/><stop offset="1" stop-color="#ff001a"/></linearGradient><linearGradient id="d43"><stop offset="0" stop-color="#009930"/><stop offset=".1691" stop-color="#02975e"/><stop offset=".7071" stop-color="#99000f"/><stop offset=".8236" stop-color="#990000"/><stop offset="1" stop-color="#990000"/></linearGradient><linearGradient id="b43"><stop offset="0" stop-color="#00ff9e"/><stop offset=".0463" stop-color="#0fffa3"/><stop offset=".1388" stop-color="#47ffad"/><stop offset=".2239" stop-color="#90ffba"/><stop offset=".2985" stop-color="#e7ffc7"/><stop offset=".3179" stop-color="#fffdc9"/><stop offset=".3731" stop-color="#ffbca0"/><stop offset=".4448" stop-color="#ff847b"/><stop offset=".5433" stop-color="#ff5259"/><stop offset=".6836" stop-color="#ff283c"/><stop offset=".8866" stop-color="#ff0824"/><stop offset="1" stop-color="#ff001c"/></linearGradient><linearGradient id="d44"><stop offset="0" stop-color="#009933"/><stop offset=".1699" stop-color="#029762"/><stop offset=".7039" stop-color="#990010"/><stop offset=".8244" stop-color="#990000"/><stop offset="1" stop-color="#990000"/></linearGradient><linearGradient id="b44"><stop offset="0" stop-color="#00ffa4"/><stop offset=".0405" stop-color="#0bffa9"/><stop offset=".1321" stop-color="#41ffb4"/><stop offset=".2192" stop-color="#8affc1"/><stop offset=".2943" stop-color="#dfffd0"/><stop offset=".3198" stop-color="#fffcd3"/><stop offset=".3739" stop-color="#ffbda8"/><stop offset=".4459" stop-color="#ff8481"/><stop offset=".5435" stop-color="#ff525e"/><stop offset=".6832" stop-color="#ff2840"/><stop offset=".8859" stop-color="#ff0827"/><stop offset="1" stop-color="#ff001e"/></linearGradient><linearGradient id="d45"><stop offset="0" stop-color="#009935"/><stop offset=".1715" stop-color="#029766"/><stop offset=".6998" stop-color="#990012"/><stop offset=".8252" stop-color="#990000"/><stop offset="1" stop-color="#990000"/></linearGradient><linearGradient id="b45"><stop offset="0" stop-color="#00ffab"/><stop offset=".0439" stop-color="#0dffb0"/><stop offset=".1364" stop-color="#44ffbc"/><stop offset=".2227" stop-color="#8effcb"/><stop offset=".297" stop-color="#e4ffda"/><stop offset=".3182" stop-color="#fffddd"/><stop offset=".3727" stop-color="#ffbdb0"/><stop offset=".4439" stop-color="#ff8588"/><stop offset=".5424" stop-color="#ff5364"/><stop offset=".6818" stop-color="#ff2944"/><stop offset=".8848" stop-color="#ff082a"/><stop offset="1" stop-color="#ff0020"/></linearGradient><linearGradient id="d46"><stop offset="0" stop-color="#009938"/><stop offset=".1723" stop-color="#02976a"/><stop offset=".6966" stop-color="#990013"/><stop offset=".8269" stop-color="#990000"/><stop offset="1" stop-color="#990000"/></linearGradient><linearGradient id="b46"><stop offset="0" stop-color="#00ffb2"/><stop offset=".0474" stop-color="#0fffb8"/><stop offset=".1391" stop-color="#47ffc5"/><stop offset=".2248" stop-color="#91ffd4"/><stop offset=".2982" stop-color="#e6ffe5"/><stop offset=".318" stop-color="#fffce7"/><stop offset=".3731" stop-color="#ffbcb8"/><stop offset=".445" stop-color="#ff848e"/><stop offset=".5428" stop-color="#ff5269"/><stop offset=".682" stop-color="#ff2948"/><stop offset=".8853" stop-color="#ff082d"/><stop offset="1" stop-color="#ff0023"/></linearGradient><linearGradient id="d47"><stop offset="0" stop-color="#00993b"/><stop offset=".1723" stop-color="#02976e"/><stop offset=".6934" stop-color="#990014"/><stop offset=".8277" stop-color="#990000"/><stop offset="1" stop-color="#990000"/></linearGradient><linearGradient id="b47"><stop offset="0" stop-color="#00ffb9"/><stop offset=".0415" stop-color="#0cffbe"/><stop offset=".1338" stop-color="#42ffcc"/><stop offset=".22" stop-color="#8bffdc"/><stop offset=".2954" stop-color="#e1ffee"/><stop offset=".3185" stop-color="#fffef3"/><stop offset=".3723" stop-color="#ffbec2"/><stop offset=".4431" stop-color="#ff8697"/><stop offset=".54" stop-color="#ff546f"/><stop offset=".6769" stop-color="#ff2a4d"/><stop offset=".8769" stop-color="#ff0930"/><stop offset="1" stop-color="#ff0025"/></linearGradient><linearGradient id="d48"><stop offset="0" stop-color="#00993e"/><stop offset=".1731" stop-color="#029773"/><stop offset=".6901" stop-color="#990016"/><stop offset=".8293" stop-color="#990000"/><stop offset="1" stop-color="#990000"/></linearGradient><linearGradient id="b48"><stop offset="0" stop-color="#00ffc0"/><stop offset=".045" stop-color="#0effc6"/><stop offset=".1366" stop-color="#45ffd5"/><stop offset=".222" stop-color="#8effe6"/><stop offset=".2966" stop-color="#e3fff9"/><stop offset=".3183" stop-color="#fffdfd"/><stop offset=".3727" stop-color="#ffbdca"/><stop offset=".4441" stop-color="#ff859d"/><stop offset=".5419" stop-color="#ff5374"/><stop offset=".6801" stop-color="#ff2951"/><stop offset=".882" stop-color="#ff0933"/><stop offset="1" stop-color="#ff0028"/></linearGradient><linearGradient id="d49"><stop offset="0" stop-color="#009941"/><stop offset=".1748" stop-color="#029777"/><stop offset=".6869" stop-color="#990017"/><stop offset=".8301" stop-color="#990000"/><stop offset="1" stop-color="#990000"/></linearGradient><linearGradient id="b49"><stop offset="0" stop-color="#00ffc7"/><stop offset=".0486" stop-color="#10ffce"/><stop offset=".1411" stop-color="#48ffde"/><stop offset=".2257" stop-color="#92fff1"/><stop offset=".2931" stop-color="#ddfcff"/><stop offset=".3276" stop-color="#ffeffd"/><stop offset=".3856" stop-color="#ffb1c9"/><stop offset=".4624" stop-color="#ff799a"/><stop offset=".5674" stop-color="#ff4971"/><stop offset=".7179" stop-color="#ff214e"/><stop offset=".9342" stop-color="#ff0430"/><stop offset="1" stop-color="#ff002a"/></linearGradient><linearGradient id="d50"><stop offset="0" stop-color="#009944"/><stop offset=".1756" stop-color="#02977b"/><stop offset=".6837" stop-color="#990019"/><stop offset=".8309" stop-color="#990000"/><stop offset="1" stop-color="#990000"/></linearGradient><linearGradient id="b50"><stop offset="0" stop-color="#00ffce"/><stop offset=".0426" stop-color="#0cffd5"/><stop offset=".1341" stop-color="#42ffe5"/><stop offset=".2208" stop-color="#8cfff9"/><stop offset=".265" stop-color="#b7faff"/><stop offset=".3391" stop-color="#ffe2fc"/><stop offset=".3991" stop-color="#ffa6c9"/><stop offset=".4795" stop-color="#ff709a"/><stop offset=".5915" stop-color="#ff4170"/><stop offset=".7524" stop-color="#ff1b4c"/><stop offset=".9763" stop-color="#ff012f"/><stop offset="1" stop-color="#ff002d"/></linearGradient><linearGradient id="d51"><stop offset="0" stop-color="#009947"/><stop offset=".1764" stop-color="#029780"/><stop offset=".6804" stop-color="#99001b"/><stop offset=".8325" stop-color="#990000"/><stop offset="1" stop-color="#990000"/></linearGradient><linearGradient id="b51"><stop offset="0" stop-color="#00ffd6"/><stop offset=".0462" stop-color="#0effdd"/><stop offset=".1385" stop-color="#46ffef"/><stop offset=".2197" stop-color="#8afbff"/><stop offset=".3487" stop-color="#ffd6fc"/><stop offset=".4124" stop-color="#ff9bc7"/><stop offset=".4984" stop-color="#ff6697"/><stop offset=".6178" stop-color="#ff396d"/><stop offset=".7914" stop-color="#ff1449"/><stop offset="1" stop-color="#ff0030"/></linearGradient><linearGradient id="d52"><stop offset="0" stop-color="#00994a"/><stop offset=".1764" stop-color="#019885"/><stop offset=".678" stop-color="#99001c"/><stop offset=".8333" stop-color="#990000"/><stop offset="1" stop-color="#990000"/></linearGradient><linearGradient id="b52"><stop offset="0" stop-color="#00ffdd"/><stop offset=".0399" stop-color="#0bffe4"/><stop offset=".131" stop-color="#40fff6"/><stop offset=".1853" stop-color="#69fbff"/><stop offset=".3147" stop-color="#d6d9ff"/><stop offset=".3594" stop-color="#ffcbfc"/><stop offset=".4265" stop-color="#ff90c6"/><stop offset=".5176" stop-color="#ff5d95"/><stop offset=".6454" stop-color="#ff316b"/><stop offset=".8307" stop-color="#ff0f46"/><stop offset="1" stop-color="#ff0032"/></linearGradient><linearGradient id="d53"><stop offset="0" stop-color="#00994d"/><stop offset=".1772" stop-color="#029789"/><stop offset=".6748" stop-color="#99001e"/><stop offset=".8333" stop-color="#990000"/><stop offset="1" stop-color="#990000"/></linearGradient><linearGradient id="b53"><stop offset="0" stop-color="#00ffe5"/><stop offset=".0419" stop-color="#0cffed"/><stop offset=".1387" stop-color="#45fcff"/><stop offset=".2726" stop-color="#aadcff"/><stop offset=".3694" stop-color="#ffc0fc"/><stop offset=".4403" stop-color="#ff87c5"/><stop offset=".5371" stop-color="#ff5493"/><stop offset=".6742" stop-color="#ff2a68"/><stop offset=".8742" stop-color="#ff0944"/><stop offset="1" stop-color="#ff0035"/></linearGradient><linearGradient id="d54"><stop offset="0" stop-color="#009950"/><stop offset=".1788" stop-color="#02978e"/><stop offset=".6715" stop-color="#990020"/><stop offset=".8309" stop-color="#990001"/><stop offset="1" stop-color="#990000"/></linearGradient><linearGradient id="b54"><stop offset="0" stop-color="#00ffed"/><stop offset=".0456" stop-color="#0efff6"/><stop offset=".1059" stop-color="#2ffbff"/><stop offset=".241" stop-color="#8cdbff"/><stop offset=".3795" stop-color="#ffb6fc"/><stop offset=".4544" stop-color="#ff7dc4"/><stop offset=".557" stop-color="#ff4c91"/><stop offset=".7036" stop-color="#ff2466"/><stop offset=".9153" stop-color="#ff0542"/><stop offset="1" stop-color="#ff0038"/></linearGradient><linearGradient id="d55"><stop offset="0" stop-color="#009953"/><stop offset=".1796" stop-color="#029793"/><stop offset=".6675" stop-color="#990022"/><stop offset=".8277" stop-color="#990002"/><stop offset="1" stop-color="#990000"/></linearGradient><linearGradient id="b55"><stop offset="0" stop-color="#00fff5"/><stop offset=".0393" stop-color="#0afffd"/><stop offset=".1623" stop-color="#4fe6ff"/><stop offset=".3033" stop-color="#b6c4ff"/><stop offset=".3918" stop-color="#ffacfc"/><stop offset=".4705" stop-color="#ff75c3"/><stop offset=".5787" stop-color="#ff4590"/><stop offset=".7344" stop-color="#ff1e64"/><stop offset=".9557" stop-color="#ff0240"/><stop offset="1" stop-color="#ff003b"/></linearGradient><linearGradient id="d56"><stop offset="0" stop-color="#009956"/><stop offset=".1796" stop-color="#019798"/><stop offset=".6642" stop-color="#990023"/><stop offset=".8252" stop-color="#990002"/><stop offset="1" stop-color="#990000"/></linearGradient><linearGradient id="b56"><stop offset="0" stop-color="#00fffe"/><stop offset=".0464" stop-color="#0ef7ff"/><stop offset=".1738" stop-color="#54dbff"/><stop offset=".3195" stop-color="#bcb9ff"/><stop offset=".4007" stop-color="#ffa4fd"/><stop offset=".4801" stop-color="#ff6fc4"/><stop offset=".5911" stop-color="#ff4191"/><stop offset=".75" stop-color="#ff1b65"/><stop offset=".9735" stop-color="#ff0141"/><stop offset="1" stop-color="#ff003e"/></linearGradient><linearGradient id="d57"><stop offset="0" stop-color="#00995a"/><stop offset=".1715" stop-color="#009699"/><stop offset=".661" stop-color="#990025"/><stop offset=".8212" stop-color="#990003"/><stop offset="1" stop-color="#990000"/></linearGradient><linearGradient id="b57"><stop offset="0" stop-color="#00f8ff"/><stop offset=".0417" stop-color="#0af0ff"/><stop offset=".17" stop-color="#4ed5ff"/><stop offset=".32" stop-color="#b5b2ff"/><stop offset=".4133" stop-color="#ff9bfd"/><stop offset=".495" stop-color="#ff68c4"/><stop offset=".6083" stop-color="#ff3c91"/><stop offset=".7717" stop-color="#ff1765"/><stop offset=".9917" stop-color="#ff0042"/><stop offset="1" stop-color="#ff0041"/></linearGradient><linearGradient id="d58"><stop offset="0" stop-color="#00995d"/><stop offset=".161" stop-color="#009699"/><stop offset=".1974" stop-color="#068994"/><stop offset=".6578" stop-color="#990027"/><stop offset=".818" stop-color="#990004"/><stop offset=".9466" stop-color="#990000"/><stop offset="1" stop-color="#990000"/></linearGradient><linearGradient id="b58"><stop offset="0" stop-color="#00f0ff"/><stop offset=".0471" stop-color="#0de7ff"/><stop offset=".1818" stop-color="#52cbff"/><stop offset=".3367" stop-color="#bba8ff"/><stop offset=".4242" stop-color="#ff92fd"/><stop offset=".5084" stop-color="#ff61c4"/><stop offset=".6246" stop-color="#ff3791"/><stop offset=".7929" stop-color="#ff1465"/><stop offset="1" stop-color="#ff0045"/></linearGradient><linearGradient id="d59"><stop offset="0" stop-color="#009961"/><stop offset=".1505" stop-color="#009699"/><stop offset=".1917" stop-color="#048696"/><stop offset=".6545" stop-color="#990029"/><stop offset=".8139" stop-color="#990005"/><stop offset=".9134" stop-color="#990000"/><stop offset="1" stop-color="#990000"/></linearGradient><linearGradient id="b59"><stop offset="0" stop-color="#00e8ff"/><stop offset=".0544" stop-color="#10ddff"/><stop offset=".1956" stop-color="#58c1ff"/><stop offset=".3554" stop-color="#c39eff"/><stop offset=".4354" stop-color="#ff8afd"/><stop offset=".5221" stop-color="#ff5bc4"/><stop offset=".6429" stop-color="#ff3291"/><stop offset=".8163" stop-color="#ff1164"/><stop offset="1" stop-color="#ff0048"/></linearGradient><linearGradient id="d60"><stop offset="0" stop-color="#009964"/><stop offset=".14" stop-color="#009699"/><stop offset=".1909" stop-color="#048396"/><stop offset=".6513" stop-color="#99002b"/><stop offset=".8091" stop-color="#990006"/><stop offset=".9029" stop-color="#990000"/><stop offset="1" stop-color="#990000"/></linearGradient><linearGradient id="b60"><stop offset="0" stop-color="#00e1ff"/><stop offset=".0479" stop-color="#0cd8ff"/><stop offset=".1884" stop-color="#50bcff"/><stop offset=".351" stop-color="#b899ff"/><stop offset=".4486" stop-color="#ff82fd"/><stop offset=".5377" stop-color="#ff55c4"/><stop offset=".661" stop-color="#ff2d91"/><stop offset=".839" stop-color="#ff0e65"/><stop offset="1" stop-color="#ff004b"/></linearGradient><linearGradient id="d61"><stop offset="0" stop-color="#009968"/><stop offset=".1294" stop-color="#009699"/><stop offset=".1909" stop-color="#047f97"/><stop offset=".6481" stop-color="#99002d"/><stop offset=".805" stop-color="#990008"/><stop offset=".8989" stop-color="#990000"/><stop offset="1" stop-color="#990000"/></linearGradient><linearGradient id="b61"><stop offset="0" stop-color="#00daff"/><stop offset=".0554" stop-color="#0fcfff"/><stop offset=".2042" stop-color="#57b2ff"/><stop offset=".372" stop-color="#c08fff"/><stop offset=".4602" stop-color="#ff7afd"/><stop offset=".5519" stop-color="#ff4fc4"/><stop offset=".6782" stop-color="#ff2991"/><stop offset=".8599" stop-color="#ff0b65"/><stop offset="1" stop-color="#ff004f"/></linearGradient><linearGradient id="d62"><stop offset="0" stop-color="#00996c"/><stop offset=".1189" stop-color="#009699"/><stop offset=".1917" stop-color="#037b97"/><stop offset=".6448" stop-color="#99002f"/><stop offset=".8002" stop-color="#990009"/><stop offset=".8972" stop-color="#990000"/><stop offset="1" stop-color="#990000"/></linearGradient><linearGradient id="b62"><stop offset="0" stop-color="#00d3ff"/><stop offset=".0647" stop-color="#12c7ff"/><stop offset=".2203" stop-color="#5da9ff"/><stop offset=".3934" stop-color="#c986ff"/><stop offset=".472" stop-color="#ff73fd"/><stop offset=".5664" stop-color="#ff49c4"/><stop offset=".6976" stop-color="#ff2591"/><stop offset=".8864" stop-color="#ff0864"/><stop offset="1" stop-color="#ff0052"/></linearGradient><linearGradient id="d63"><stop offset="0" stop-color="#009970"/><stop offset=".1084" stop-color="#009699"/><stop offset=".1926" stop-color="#037797"/><stop offset=".6424" stop-color="#990031"/><stop offset=".7969" stop-color="#99000a"/><stop offset=".8981" stop-color="#990000"/><stop offset="1" stop-color="#990000"/></linearGradient><linearGradient id="b63"><stop offset="0" stop-color="#00cdff"/><stop offset=".0563" stop-color="#0ec3ff"/><stop offset=".2113" stop-color="#54a6ff"/><stop offset=".3891" stop-color="#be82ff"/><stop offset=".4859" stop-color="#ff6dfc"/><stop offset=".5827" stop-color="#ff44c4"/><stop offset=".7165" stop-color="#ff2191"/><stop offset=".9102" stop-color="#ff0664"/><stop offset="1" stop-color="#ff0056"/></linearGradient><linearGradient id="d64"><stop offset="0" stop-color="#009974"/><stop offset=".0979" stop-color="#009699"/><stop offset=".1934" stop-color="#037397"/><stop offset=".6392" stop-color="#990034"/><stop offset=".7921" stop-color="#99000c"/><stop offset=".8981" stop-color="#990000"/><stop offset="1" stop-color="#990000"/></linearGradient><linearGradient id="b64"><stop offset="0" stop-color="#00c6ff"/><stop offset=".0658" stop-color="#11bbff"/><stop offset=".2295" stop-color="#5c9dff"/><stop offset=".4128" stop-color="#c779ff"/><stop offset=".4982" stop-color="#ff66fc"/><stop offset=".5979" stop-color="#ff3fc3"/><stop offset=".7367" stop-color="#ff1d90"/><stop offset=".9359" stop-color="#ff0464"/><stop offset="1" stop-color="#ff005a"/></linearGradient><linearGradient id="d65"><stop offset="0" stop-color="#009978"/><stop offset=".0882" stop-color="#009699"/><stop offset=".1934" stop-color="#037097"/><stop offset=".6351" stop-color="#990036"/><stop offset=".7856" stop-color="#99000e"/><stop offset=".8981" stop-color="#990000"/><stop offset="1" stop-color="#990000"/></linearGradient><linearGradient id="b65"><stop offset="0" stop-color="#00c1ff"/><stop offset=".0573" stop-color="#0db7ff"/><stop offset=".2204" stop-color="#539aff"/><stop offset=".4068" stop-color="#bc76ff"/><stop offset=".5125" stop-color="#ff60fc"/><stop offset=".6147" stop-color="#ff3ac3"/><stop offset=".7563" stop-color="#ff1a90"/><stop offset=".9606" stop-color="#ff0264"/><stop offset="1" stop-color="#ff005e"/></linearGradient><linearGradient id="d66"><stop offset="0" stop-color="#00997c"/><stop offset=".0777" stop-color="#009699"/><stop offset=".195" stop-color="#036d97"/><stop offset=".6319" stop-color="#990038"/><stop offset=".7807" stop-color="#99000f"/><stop offset=".8989" stop-color="#990000"/><stop offset="1" stop-color="#990000"/></linearGradient><linearGradient id="b66"><stop offset="0" stop-color="#00bbff"/><stop offset=".0652" stop-color="#10b0ff"/><stop offset=".2355" stop-color="#5892ff"/><stop offset=".4275" stop-color="#c36eff"/><stop offset=".5254" stop-color="#ff5afc"/><stop offset=".6304" stop-color="#ff35c3"/><stop offset=".7754" stop-color="#ff1791"/><stop offset=".9837" stop-color="#ff0064"/><stop offset="1" stop-color="#ff0062"/></linearGradient><linearGradient id="d67"><stop offset="0" stop-color="#009980"/><stop offset=".0672" stop-color="#009699"/><stop offset=".1958" stop-color="#036997"/><stop offset=".6286" stop-color="#99003b"/><stop offset=".7759" stop-color="#990011"/><stop offset=".8997" stop-color="#990000"/><stop offset="1" stop-color="#990000"/></linearGradient><linearGradient id="b67"><stop offset="0" stop-color="#00b5ff"/><stop offset=".0751" stop-color="#13a8ff"/><stop offset=".2527" stop-color="#5e8aff"/><stop offset=".4505" stop-color="#ca66ff"/><stop offset=".5385" stop-color="#ff54fc"/><stop offset=".6465" stop-color="#ff31c3"/><stop offset=".7967" stop-color="#ff1390"/><stop offset="1" stop-color="#ff0066"/></linearGradient><linearGradient id="d68"><stop offset="0" stop-color="#009984"/><stop offset=".0566" stop-color="#009699"/><stop offset=".1958" stop-color="#036697"/><stop offset=".6254" stop-color="#99003d"/><stop offset=".771" stop-color="#990013"/><stop offset=".9005" stop-color="#990000"/><stop offset="1" stop-color="#990000"/></linearGradient><linearGradient id="b68"><stop offset="0" stop-color="#00b0ff"/><stop offset=".0664" stop-color="#0fa5ff"/><stop offset=".2454" stop-color="#5787ff"/><stop offset=".4465" stop-color="#c063ff"/><stop offset=".5535" stop-color="#ff4ffc"/><stop offset=".6642" stop-color="#ff2dc3"/><stop offset=".8173" stop-color="#ff1190"/><stop offset="1" stop-color="#ff006a"/></linearGradient><linearGradient id="d69"><stop offset="0" stop-color="#009988"/><stop offset=".0469" stop-color="#009599"/><stop offset=".1893" stop-color="#006599"/><stop offset=".6222" stop-color="#990040"/><stop offset=".7654" stop-color="#990015"/><stop offset=".9005" stop-color="#990000"/><stop offset="1" stop-color="#990000"/></linearGradient><linearGradient id="b69"><stop offset="0" stop-color="#00aaff"/><stop offset=".0765" stop-color="#129eff"/><stop offset=".2631" stop-color="#5d80ff"/><stop offset=".4701" stop-color="#c85cff"/><stop offset=".5672" stop-color="#ff49fc"/><stop offset=".681" stop-color="#ff29c3"/><stop offset=".8396" stop-color="#ff0e90"/><stop offset="1" stop-color="#ff006e"/></linearGradient><linearGradient id="d70"><stop offset="0" stop-color="#00998d"/><stop offset=".0372" stop-color="#009599"/><stop offset=".1804" stop-color="#006599"/><stop offset=".2443" stop-color="#14568e"/><stop offset=".6189" stop-color="#990043"/><stop offset=".7605" stop-color="#990017"/><stop offset=".9013" stop-color="#990000"/><stop offset="1" stop-color="#990000"/></linearGradient><linearGradient id="b70"><stop offset="0" stop-color="#00a5ff"/><stop offset=".0868" stop-color="#1598ff"/><stop offset=".2811" stop-color="#6279ff"/><stop offset=".4943" stop-color="#cf54ff"/><stop offset=".5811" stop-color="#ff44fc"/><stop offset=".6981" stop-color="#ff25c3"/><stop offset=".8604" stop-color="#ff0b90"/><stop offset="1" stop-color="#ff0073"/></linearGradient><linearGradient id="d71"><stop offset="0" stop-color="#009991"/><stop offset=".0283" stop-color="#009499"/><stop offset=".1723" stop-color="#006499"/><stop offset=".2055" stop-color="#055c96"/><stop offset=".6157" stop-color="#990045"/><stop offset=".7549" stop-color="#990019"/><stop offset=".9013" stop-color="#990000"/><stop offset="1" stop-color="#990000"/></linearGradient><linearGradient id="b71"><stop offset="0" stop-color="#00a1ff"/><stop offset=".0779" stop-color="#1195ff"/><stop offset=".2738" stop-color="#5b76ff"/><stop offset=".4924" stop-color="#c652ff"/><stop offset=".5951" stop-color="#ff40fd"/><stop offset=".7148" stop-color="#ff22c4"/><stop offset=".8802" stop-color="#ff0991"/><stop offset="1" stop-color="#ff0077"/></linearGradient><linearGradient id="d72"><stop offset="0" stop-color="#009996"/><stop offset=".0841" stop-color="#007b99"/><stop offset=".1998" stop-color="#035b97"/><stop offset=".6125" stop-color="#990048"/><stop offset=".75" stop-color="#99001b"/><stop offset=".9021" stop-color="#990000"/><stop offset="1" stop-color="#990000"/></linearGradient><linearGradient id="b72"><stop offset="0" stop-color="#009cff"/><stop offset=".0885" stop-color="#148fff"/><stop offset=".2923" stop-color="#6170ff"/><stop offset=".5173" stop-color="#ce4bff"/><stop offset=".6096" stop-color="#ff3bfd"/><stop offset=".7327" stop-color="#ff1ec3"/><stop offset=".9019" stop-color="#ff0791"/><stop offset="1" stop-color="#ff007c"/></linearGradient><linearGradient id="d73"><stop offset="0" stop-color="#009899"/><stop offset=".1408" stop-color="#006799"/><stop offset=".2015" stop-color="#035897"/><stop offset=".61" stop-color="#99004a"/><stop offset=".746" stop-color="#99001d"/><stop offset=".9021" stop-color="#990000"/><stop offset="1" stop-color="#990000"/></linearGradient><linearGradient id="b73"><stop offset="0" stop-color="#0098ff"/><stop offset=".0792" stop-color="#108cff"/><stop offset=".2819" stop-color="#596eff"/><stop offset=".5097" stop-color="#c34aff"/><stop offset=".6236" stop-color="#ff37fd"/><stop offset=".749" stop-color="#ff1bc3"/><stop offset=".9228" stop-color="#ff0490"/><stop offset="1" stop-color="#ff0080"/></linearGradient><linearGradient id="d74"><stop offset="0" stop-color="#009399"/><stop offset=".1448" stop-color="#006399"/><stop offset=".2023" stop-color="#035597"/><stop offset=".6068" stop-color="#99004d"/><stop offset=".7403" stop-color="#99001f"/><stop offset=".8997" stop-color="#990001"/><stop offset="1" stop-color="#990000"/></linearGradient><linearGradient id="b74"><stop offset="0" stop-color="#0093ff"/><stop offset=".0898" stop-color="#1386ff"/><stop offset=".3008" stop-color="#5e67ff"/><stop offset=".5352" stop-color="#ca43ff"/><stop offset=".6387" stop-color="#ff33fd"/><stop offset=".7676" stop-color="#ff18c3"/><stop offset=".9453" stop-color="#ff0390"/><stop offset="1" stop-color="#ff0085"/></linearGradient><linearGradient id="d75"><stop offset="0" stop-color="#008f99"/><stop offset=".1497" stop-color="#005f99"/><stop offset=".2039" stop-color="#035397"/><stop offset=".6028" stop-color="#990051"/><stop offset=".7338" stop-color="#990022"/><stop offset=".894" stop-color="#990002"/><stop offset="1" stop-color="#990000"/></linearGradient><linearGradient id="b75"><stop offset="0" stop-color="#008fff"/><stop offset=".1008" stop-color="#1681ff"/><stop offset=".3221" stop-color="#6461ff"/><stop offset=".5632" stop-color="#d23dff"/><stop offset=".6542" stop-color="#ff2ffd"/><stop offset=".7866" stop-color="#ff15c3"/><stop offset=".9684" stop-color="#ff0191"/><stop offset="1" stop-color="#ff008a"/></linearGradient><linearGradient id="d76"><stop offset="0" stop-color="#008b99"/><stop offset=".1537" stop-color="#005c99"/><stop offset=".2047" stop-color="#035198"/><stop offset=".5995" stop-color="#990054"/><stop offset=".7282" stop-color="#990024"/><stop offset=".8892" stop-color="#990003"/><stop offset="1" stop-color="#990000"/></linearGradient><linearGradient id="b76"><stop offset="0" stop-color="#008bff"/><stop offset=".0916" stop-color="#127fff"/><stop offset=".3127" stop-color="#5d60ff"/><stop offset=".5598" stop-color="#c93cff"/><stop offset=".6713" stop-color="#ff2bfc"/><stop offset=".8068" stop-color="#ff12c3"/><stop offset=".994" stop-color="#ff0090"/><stop offset="1" stop-color="#ff008f"/></linearGradient><linearGradient id="d77"><stop offset="0" stop-color="#008799"/><stop offset=".1586" stop-color="#005899"/><stop offset=".2055" stop-color="#034e98"/><stop offset=".5963" stop-color="#990057"/><stop offset=".7233" stop-color="#990026"/><stop offset=".8835" stop-color="#990004"/><stop offset="1" stop-color="#990000"/></linearGradient><linearGradient id="b77"><stop offset="0" stop-color="#0087ff"/><stop offset=".1028" stop-color="#1579ff"/><stop offset=".3327" stop-color="#625aff"/><stop offset=".5867" stop-color="#d036ff"/><stop offset=".6875" stop-color="#ff27fc"/><stop offset=".8266" stop-color="#ff0fc3"/><stop offset="1" stop-color="#ff0094"/></linearGradient><linearGradient id="d78"><stop offset="0" stop-color="#008399"/><stop offset=".1634" stop-color="#005599"/><stop offset=".2071" stop-color="#044c98"/><stop offset=".593" stop-color="#99005a"/><stop offset=".7176" stop-color="#990029"/><stop offset=".877" stop-color="#990005"/><stop offset=".9765" stop-color="#990000"/><stop offset="1" stop-color="#990000"/></linearGradient><linearGradient id="b78"><stop offset="0" stop-color="#0083ff"/><stop offset=".0935" stop-color="#1177ff"/><stop offset=".3252" stop-color="#5c58ff"/><stop offset=".5833" stop-color="#c735ff"/><stop offset=".7053" stop-color="#ff23fc"/><stop offset=".8476" stop-color="#ff0cc3"/><stop offset="1" stop-color="#ff009a"/></linearGradient><linearGradient id="d79"><stop offset="0" stop-color="#007f99"/><stop offset=".1675" stop-color="#005299"/><stop offset=".2087" stop-color="#044a98"/><stop offset=".5898" stop-color="#99005d"/><stop offset=".7128" stop-color="#99002c"/><stop offset=".8706" stop-color="#990007"/><stop offset=".9636" stop-color="#990000"/><stop offset="1" stop-color="#990000"/></linearGradient><linearGradient id="b79"><stop offset="0" stop-color="#007fff"/><stop offset=".1049" stop-color="#1472ff"/><stop offset=".3457" stop-color="#6153ff"/><stop offset=".6111" stop-color="#cd2fff"/><stop offset=".7222" stop-color="#ff20fc"/><stop offset=".8683" stop-color="#ff0ac3"/><stop offset="1" stop-color="#ff009f"/></linearGradient><linearGradient id="d80"><stop offset="0" stop-color="#007b99"/><stop offset=".1723" stop-color="#004f99"/><stop offset=".2095" stop-color="#044898"/><stop offset=".5866" stop-color="#990061"/><stop offset=".7071" stop-color="#99002f"/><stop offset=".8633" stop-color="#990008"/><stop offset=".9587" stop-color="#990000"/><stop offset="1" stop-color="#990000"/></linearGradient><linearGradient id="b80"><stop offset="0" stop-color="#007cff"/><stop offset=".1167" stop-color="#176dff"/><stop offset=".3667" stop-color="#664eff"/><stop offset=".6396" stop-color="#d42aff"/><stop offset=".7396" stop-color="#ff1cfc"/><stop offset=".8896" stop-color="#ff08c3"/><stop offset="1" stop-color="#ff00a5"/></linearGradient><linearGradient id="d81"><stop offset="0" stop-color="#007899"/><stop offset=".1772" stop-color="#004c99"/><stop offset=".2112" stop-color="#044598"/><stop offset=".5833" stop-color="#990064"/><stop offset=".7015" stop-color="#990032"/><stop offset=".856" stop-color="#99000a"/><stop offset=".9571" stop-color="#990000"/><stop offset="1" stop-color="#990000"/></linearGradient><linearGradient id="b81"><stop offset="0" stop-color="#0078ff"/><stop offset=".105" stop-color="#136cff"/><stop offset=".355" stop-color="#5e4dff"/><stop offset=".6345" stop-color="#ca29ff"/><stop offset=".7584" stop-color="#ff19fc"/><stop offset=".9118" stop-color="#ff05c3"/><stop offset="1" stop-color="#ff00ab"/></linearGradient><linearGradient id="d82"><stop offset="0" stop-color="#007499"/><stop offset=".182" stop-color="#004999"/><stop offset=".2128" stop-color="#054398"/><stop offset=".5793" stop-color="#990068"/><stop offset=".695" stop-color="#990035"/><stop offset=".8471" stop-color="#99000d"/><stop offset=".9563" stop-color="#990000"/><stop offset="1" stop-color="#990000"/></linearGradient><linearGradient id="b82"><stop offset="0" stop-color="#0075ff"/><stop offset=".1191" stop-color="#1667ff"/><stop offset=".3809" stop-color="#6447ff"/><stop offset=".666" stop-color="#d124ff"/><stop offset=".7766" stop-color="#ff16fc"/><stop offset=".934" stop-color="#ff04c3"/><stop offset="1" stop-color="#ff00b1"/></linearGradient><linearGradient id="d83"><stop offset="0" stop-color="#007199"/><stop offset=".1869" stop-color="#004699"/><stop offset=".216" stop-color="#054198"/><stop offset=".5769" stop-color="#99006c"/><stop offset=".6909" stop-color="#990037"/><stop offset=".8406" stop-color="#99000f"/><stop offset=".9563" stop-color="#990000"/><stop offset="1" stop-color="#990000"/></linearGradient><linearGradient id="b83"><stop offset="0" stop-color="#0071ff"/><stop offset=".1315" stop-color="#1962ff"/><stop offset=".403" stop-color="#6942ff"/><stop offset=".6961" stop-color="#d71fff"/><stop offset=".7953" stop-color="#ff13fc"/><stop offset=".9569" stop-color="#ff02c3"/><stop offset="1" stop-color="#ff00b7"/></linearGradient><linearGradient id="d84"><stop offset="0" stop-color="#006e99"/><stop offset=".1926" stop-color="#004399"/><stop offset=".2225" stop-color="#083e97"/><stop offset=".5728" stop-color="#990070"/><stop offset=".6845" stop-color="#99003b"/><stop offset=".8317" stop-color="#990011"/><stop offset=".9555" stop-color="#990000"/><stop offset="1" stop-color="#990000"/></linearGradient><linearGradient id="b84"><stop offset="0" stop-color="#006fff"/><stop offset=".1196" stop-color="#1561ff"/><stop offset=".3913" stop-color="#6142ff"/><stop offset=".6913" stop-color="#ce1fff"/><stop offset=".8152" stop-color="#ff11fc"/><stop offset=".9804" stop-color="#ff00c3"/><stop offset="1" stop-color="#ff00bd"/></linearGradient><linearGradient id="d85"><stop offset="0" stop-color="#006b99"/><stop offset=".1974" stop-color="#004199"/><stop offset=".4199" stop-color="#5c1a85"/><stop offset=".5696" stop-color="#990074"/><stop offset=".6796" stop-color="#99003e"/><stop offset=".8244" stop-color="#990013"/><stop offset=".9555" stop-color="#990000"/><stop offset="1" stop-color="#990000"/></linearGradient><linearGradient id="b85"><stop offset="0" stop-color="#006bff"/><stop offset=".1344" stop-color="#185dff"/><stop offset=".4163" stop-color="#663dff"/><stop offset=".7247" stop-color="#d51aff"/><stop offset=".8348" stop-color="#ff0efc"/><stop offset="1" stop-color="#ff00c4"/></linearGradient><linearGradient id="d86"><stop offset="0" stop-color="#006899"/><stop offset=".2023" stop-color="#003e99"/><stop offset=".5655" stop-color="#990078"/><stop offset=".6731" stop-color="#990042"/><stop offset=".8147" stop-color="#990016"/><stop offset=".9547" stop-color="#990000"/><stop offset="1" stop-color="#990000"/></linearGradient><linearGradient id="b86"><stop offset="0" stop-color="#0069ff"/><stop offset=".1222" stop-color="#145cff"/><stop offset=".4067" stop-color="#603dff"/><stop offset=".72" stop-color="#cc1aff"/><stop offset=".8533" stop-color="#ff0cfd"/><stop offset="1" stop-color="#ff00cb"/></linearGradient><linearGradient id="d87"><stop offset="0" stop-color="#006599"/><stop offset=".2079" stop-color="#003c99"/><stop offset=".5623" stop-color="#99007c"/><stop offset=".6675" stop-color="#990046"/><stop offset=".8066" stop-color="#990019"/><stop offset=".9539" stop-color="#990000"/><stop offset="1" stop-color="#990000"/></linearGradient><linearGradient id="b87"><stop offset="0" stop-color="#0065ff"/><stop offset=".1374" stop-color="#1757ff"/><stop offset=".4324" stop-color="#6538ff"/><stop offset=".7545" stop-color="#d315ff"/><stop offset=".8739" stop-color="#ff09fd"/><stop offset="1" stop-color="#ff00d1"/></linearGradient><linearGradient id="d88"><stop offset="0" stop-color="#006399"/><stop offset=".2144" stop-color="#033999"/><stop offset=".5591" stop-color="#990081"/><stop offset=".6618" stop-color="#99004a"/><stop offset=".7977" stop-color="#99001c"/><stop offset=".9531" stop-color="#990000"/><stop offset="1" stop-color="#990000"/></linearGradient><linearGradient id="b88"><stop offset="0" stop-color="#0062ff"/><stop offset=".1507" stop-color="#1953ff"/><stop offset=".4566" stop-color="#6934ff"/><stop offset=".7877" stop-color="#d811ff"/><stop offset=".895" stop-color="#ff07fd"/><stop offset="1" stop-color="#ff00d9"/></linearGradient><linearGradient id="d89"><stop offset="0" stop-color="#006099"/><stop offset=".2152" stop-color="#033899"/><stop offset=".555" stop-color="#990086"/><stop offset=".6561" stop-color="#99004d"/><stop offset=".7896" stop-color="#99001f"/><stop offset=".949" stop-color="#990001"/><stop offset="1" stop-color="#990000"/></linearGradient><linearGradient id="b89"><stop offset="0" stop-color="#0060ff"/><stop offset=".1382" stop-color="#1552ff"/><stop offset=".447" stop-color="#6333ff"/><stop offset=".7857" stop-color="#d111ff"/><stop offset=".9171" stop-color="#ff05fc"/><stop offset="1" stop-color="#ff00e0"/></linearGradient><linearGradient id="d90"><stop offset="0" stop-color="#005d99"/><stop offset=".216" stop-color="#033699"/><stop offset=".5518" stop-color="#99008a"/><stop offset=".6505" stop-color="#990052"/><stop offset=".7807" stop-color="#990022"/><stop offset=".9417" stop-color="#990002"/><stop offset="1" stop-color="#990000"/></linearGradient><linearGradient id="b90"><stop offset="0" stop-color="#005dff"/><stop offset=".1542" stop-color="#184eff"/><stop offset=".4743" stop-color="#682fff"/><stop offset=".8201" stop-color="#d60dff"/><stop offset=".9393" stop-color="#ff03fc"/><stop offset="1" stop-color="#ff00e7"/></linearGradient><linearGradient id="d91"><stop offset="0" stop-color="#005b99"/><stop offset=".2168" stop-color="#033599"/><stop offset=".5485" stop-color="#99008f"/><stop offset=".6456" stop-color="#990055"/><stop offset=".7735" stop-color="#990025"/><stop offset=".9337" stop-color="#990003"/><stop offset="1" stop-color="#990000"/></linearGradient><linearGradient id="b91"><stop offset="0" stop-color="#005bff"/><stop offset=".1415" stop-color="#154eff"/><stop offset=".4623" stop-color="#612fff"/><stop offset=".816" stop-color="#ce0dff"/><stop offset=".9623" stop-color="#ff01fc"/><stop offset="1" stop-color="#ff00ef"/></linearGradient><linearGradient id="d92"><stop offset="0" stop-color="#005899"/><stop offset=".2184" stop-color="#033399"/><stop offset=".5453" stop-color="#990094"/><stop offset=".64" stop-color="#99005a"/><stop offset=".7646" stop-color="#990029"/><stop offset=".9239" stop-color="#990005"/><stop offset="1" stop-color="#990000"/></linearGradient><linearGradient id="b92"><stop offset="0" stop-color="#0058ff"/><stop offset=".1555" stop-color="#174aff"/><stop offset=".488" stop-color="#652bff"/><stop offset=".8517" stop-color="#d30aff"/><stop offset=".9856" stop-color="#ff00fc"/><stop offset="1" stop-color="#ff00f7"/></linearGradient><linearGradient id="d93"><stop offset="0" stop-color="#005699"/><stop offset=".2193" stop-color="#033299"/><stop offset=".5453" stop-color="#990096"/><stop offset=".6392" stop-color="#99005c"/><stop offset=".7629" stop-color="#99002a"/><stop offset=".9215" stop-color="#990006"/><stop offset="1" stop-color="#990000"/></linearGradient><linearGradient id="b93"><stop offset="0" stop-color="#0056ff"/><stop offset=".1715" stop-color="#1a46ff"/><stop offset=".5169" stop-color="#6b27ff"/><stop offset=".8889" stop-color="#da06ff"/><stop offset="1" stop-color="#ff00fe"/></linearGradient><linearGradient id="d94"><stop offset="0" stop-color="#005499"/><stop offset=".2201" stop-color="#033099"/><stop offset=".5485" stop-color="#990096"/><stop offset=".6424" stop-color="#99005c"/><stop offset=".7662" stop-color="#99002a"/><stop offset=".9248" stop-color="#990006"/><stop offset="1" stop-color="#990000"/></linearGradient><linearGradient id="b94"><stop offset="0" stop-color="#0053ff"/><stop offset=".1585" stop-color="#1646ff"/><stop offset=".5049" stop-color="#6427ff"/><stop offset=".8854" stop-color="#d206ff"/><stop offset="1" stop-color="#f800ff"/></linearGradient><linearGradient id="d95"><stop offset="0" stop-color="#005299"/><stop offset=".2209" stop-color="#032f99"/><stop offset=".5429" stop-color="#950099"/><stop offset=".5623" stop-color="#99008f"/><stop offset=".6594" stop-color="#990055"/><stop offset=".7872" stop-color="#990025"/><stop offset=".9474" stop-color="#990003"/><stop offset="1" stop-color="#990000"/></linearGradient><linearGradient id="b95"><stop offset="0" stop-color="#0051ff"/><stop offset=".1757" stop-color="#1942ff"/><stop offset=".5347" stop-color="#6923ff"/><stop offset=".9233" stop-color="#d703ff"/><stop offset="1" stop-color="#f000ff"/></linearGradient><linearGradient id="d96"><stop offset="0" stop-color="#005099"/><stop offset=".2225" stop-color="#032e99"/><stop offset=".5405" stop-color="#910099"/><stop offset=".5574" stop-color="#990095"/><stop offset=".6521" stop-color="#99005a"/><stop offset=".7767" stop-color="#990029"/><stop offset=".9361" stop-color="#990005"/><stop offset="1" stop-color="#990000"/></linearGradient><linearGradient id="b96"><stop offset="0" stop-color="#004fff"/><stop offset=".191" stop-color="#1b3fff"/><stop offset=".5628" stop-color="#6d1fff"/><stop offset=".9623" stop-color="#dc01ff"/><stop offset="1" stop-color="#e800ff"/></linearGradient><linearGradient id="d97"><stop offset="0" stop-color="#004d99"/><stop offset=".2233" stop-color="#032c99"/><stop offset=".5372" stop-color="#8c0099"/><stop offset=".5599" stop-color="#990095"/><stop offset=".6537" stop-color="#99005b"/><stop offset=".7775" stop-color="#99002a"/><stop offset=".9361" stop-color="#990006"/><stop offset="1" stop-color="#990000"/></linearGradient><linearGradient id="b97"><stop offset="0" stop-color="#004dff"/><stop offset=".1777" stop-color="#183eff"/><stop offset=".5533" stop-color="#671fff"/><stop offset=".9619" stop-color="#d501ff"/><stop offset="1" stop-color="#e100ff"/></linearGradient><linearGradient id="d98"><stop offset="0" stop-color="#004b99"/><stop offset=".2249" stop-color="#032b99"/><stop offset=".5348" stop-color="#880099"/><stop offset=".5623" stop-color="#990096"/><stop offset=".6561" stop-color="#99005c"/><stop offset=".7799" stop-color="#99002a"/><stop offset=".9385" stop-color="#990006"/><stop offset="1" stop-color="#990000"/></linearGradient><linearGradient id="b98"><stop offset="0" stop-color="#004aff"/><stop offset=".1959" stop-color="#1a3bff"/><stop offset=".5851" stop-color="#6b1cff"/><stop offset="1" stop-color="#d900ff"/></linearGradient><linearGradient id="d99"><stop offset="0" stop-color="#004a99"/><stop offset=".2257" stop-color="#032a99"/><stop offset=".5324" stop-color="#840099"/><stop offset=".5655" stop-color="#990096"/><stop offset=".6594" stop-color="#99005c"/><stop offset=".7832" stop-color="#99002a"/><stop offset=".9417" stop-color="#990006"/><stop offset="1" stop-color="#990000"/></linearGradient><linearGradient id="b99"><stop offset="0" stop-color="#0048ff"/><stop offset=".1823" stop-color="#173aff"/><stop offset=".5755" stop-color="#661cff"/><stop offset="1" stop-color="#d200ff"/></linearGradient><linearGradient id="d100"><stop offset="0" stop-color="#004899"/><stop offset=".2273" stop-color="#032899"/><stop offset=".5299" stop-color="#800099"/><stop offset=".5688" stop-color="#990096"/><stop offset=".6626" stop-color="#99005c"/><stop offset=".7864" stop-color="#99002a"/><stop offset=".945" stop-color="#990006"/><stop offset="1" stop-color="#990000"/></linearGradient><linearGradient id="b100"><stop offset="0" stop-color="#0046ff"/><stop offset=".1984" stop-color="#1937ff"/><stop offset=".6058" stop-color="#6919ff"/><stop offset="1" stop-color="#cc00ff"/></linearGradient><linearGradient id="d101"><stop offset="0" stop-color="#004699"/><stop offset=".2282" stop-color="#032799"/><stop offset=".5275" stop-color="#7d0099"/><stop offset=".572" stop-color="#990096"/><stop offset=".6659" stop-color="#99005c"/><stop offset=".7896" stop-color="#99002a"/><stop offset=".9482" stop-color="#990006"/><stop offset="1" stop-color="#990000"/></linearGradient><linearGradient id="b101"><stop offset="0" stop-color="#0044ff"/><stop offset=".2177" stop-color="#1c34ff"/><stop offset=".6371" stop-color="#6d16ff"/><stop offset="1" stop-color="#c500ff"/></linearGradient><linearGradient id="d102"><stop offset="0" stop-color="#004499"/><stop offset=".229" stop-color="#032699"/><stop offset=".5251" stop-color="#790099"/><stop offset=".5752" stop-color="#990096"/><stop offset=".6691" stop-color="#99005c"/><stop offset=".7929" stop-color="#99002a"/><stop offset=".9515" stop-color="#990006"/><stop offset="1" stop-color="#990000"/></linearGradient><linearGradient id="b102"><stop offset="0" stop-color="#0042ff"/><stop offset=".2038" stop-color="#1834ff"/><stop offset=".6277" stop-color="#6816ff"/><stop offset="1" stop-color="#bf00ff"/></linearGradient><linearGradient id="d103"><stop offset="0" stop-color="#004299"/><stop offset=".2306" stop-color="#032599"/><stop offset=".5227" stop-color="#760099"/><stop offset=".5785" stop-color="#990096"/><stop offset=".6723" stop-color="#99005c"/><stop offset=".7961" stop-color="#99002a"/><stop offset=".9547" stop-color="#990006"/><stop offset="1" stop-color="#990000"/></linearGradient><linearGradient id="b103"><stop offset="0" stop-color="#0040ff"/><stop offset=".2238" stop-color="#1b31ff"/><stop offset=".663" stop-color="#6c13ff"/><stop offset="1" stop-color="#b900ff"/></linearGradient><linearGradient id="d104"><stop offset="0" stop-color="#004199"/><stop offset=".2322" stop-color="#032499"/><stop offset=".5218" stop-color="#730099"/><stop offset=".5825" stop-color="#990096"/><stop offset=".6764" stop-color="#99005c"/><stop offset=".8002" stop-color="#99002a"/><stop offset=".9587" stop-color="#990006"/><stop offset="1" stop-color="#990000"/></linearGradient><linearGradient id="b104"><stop offset="0" stop-color="#003eff"/><stop offset=".2416" stop-color="#1d2eff"/><stop offset=".6966" stop-color="#6f10ff"/><stop offset="1" stop-color="#b300ff"/></linearGradient><linearGradient id="d105"><stop offset="0" stop-color="#003f99"/><stop offset=".233" stop-color="#032399"/><stop offset=".5194" stop-color="#700099"/><stop offset=".5858" stop-color="#990096"/><stop offset=".6796" stop-color="#99005c"/><stop offset=".8034" stop-color="#99002a"/><stop offset=".962" stop-color="#990006"/><stop offset="1" stop-color="#990001"/></linearGradient><linearGradient id="b105"><stop offset="0" stop-color="#003dff"/><stop offset=".2273" stop-color="#1a2eff"/><stop offset=".6875" stop-color="#6a10ff"/><stop offset="1" stop-color="#ad00ff"/></linearGradient><linearGradient id="d106"><stop offset="0" stop-color="#003d99"/><stop offset=".2338" stop-color="#032299"/><stop offset=".517" stop-color="#6d0099"/><stop offset=".589" stop-color="#990096"/><stop offset=".6828" stop-color="#99005c"/><stop offset=".8066" stop-color="#99002a"/><stop offset=".9652" stop-color="#990006"/><stop offset="1" stop-color="#990001"/></linearGradient><linearGradient id="b106"><stop offset="0" stop-color="#003bff"/><stop offset=".2486" stop-color="#1c2bff"/><stop offset=".7254" stop-color="#6e0dff"/><stop offset="1" stop-color="#a700ff"/></linearGradient><linearGradient id="d107"><stop offset="0" stop-color="#003c99"/><stop offset=".2346" stop-color="#032199"/><stop offset=".5154" stop-color="#6a0099"/><stop offset=".5922" stop-color="#990096"/><stop offset=".6861" stop-color="#99005c"/><stop offset=".8099" stop-color="#99002a"/><stop offset=".9684" stop-color="#990006"/><stop offset="1" stop-color="#990002"/></linearGradient><linearGradient id="b107"><stop offset="0" stop-color="#0039ff"/><stop offset=".2339" stop-color="#192bff"/><stop offset=".7164" stop-color="#690dff"/><stop offset="1" stop-color="#a200ff"/></linearGradient><linearGradient id="d108"><stop offset="0" stop-color="#003a99"/><stop offset=".2362" stop-color="#032099"/><stop offset=".5129" stop-color="#670099"/><stop offset=".5955" stop-color="#990096"/><stop offset=".6893" stop-color="#99005c"/><stop offset=".8131" stop-color="#99002a"/><stop offset=".9717" stop-color="#990006"/><stop offset="1" stop-color="#990002"/></linearGradient><linearGradient id="b108"><stop offset="0" stop-color="#0038ff"/><stop offset=".253" stop-color="#1b28ff"/><stop offset=".753" stop-color="#6c0bff"/><stop offset="1" stop-color="#9d00ff"/></linearGradient><linearGradient id="d109"><stop offset="0" stop-color="#003999"/><stop offset=".2379" stop-color="#031f99"/><stop offset=".5113" stop-color="#640099"/><stop offset=".5987" stop-color="#990096"/><stop offset=".6926" stop-color="#99005c"/><stop offset=".8163" stop-color="#99002a"/><stop offset=".9749" stop-color="#990006"/><stop offset="1" stop-color="#990002"/></linearGradient><linearGradient id="b109"><stop offset="0" stop-color="#0036ff"/><stop offset=".2758" stop-color="#1d26ff"/><stop offset=".7909" stop-color="#7009ff"/><stop offset="1" stop-color="#9800ff"/></linearGradient><linearGradient id="d110"><stop offset="0" stop-color="#003799"/><stop offset=".2387" stop-color="#031e99"/><stop offset=".5097" stop-color="#620099"/><stop offset=".5971" stop-color="#980099"/><stop offset=".6966" stop-color="#99005b"/><stop offset=".8204" stop-color="#99002a"/><stop offset=".979" stop-color="#990006"/><stop offset="1" stop-color="#990003"/></linearGradient><linearGradient id="b110"><stop offset="0" stop-color="#0034ff"/><stop offset=".2607" stop-color="#1a26ff"/><stop offset=".7822" stop-color="#6a09ff"/><stop offset="1" stop-color="#9300ff"/></linearGradient><linearGradient id="d111"><stop offset="0" stop-color="#003699"/><stop offset=".2395" stop-color="#031d99"/><stop offset=".5073" stop-color="#5f0099"/><stop offset=".5963" stop-color="#950099"/><stop offset=".6189" stop-color="#99008c"/><stop offset=".7168" stop-color="#990053"/><stop offset=".8463" stop-color="#990023"/><stop offset="1" stop-color="#990003"/></linearGradient><linearGradient id="b111"><stop offset="0" stop-color="#0033ff"/><stop offset=".2844" stop-color="#1c23ff"/><stop offset=".825" stop-color="#6e06ff"/><stop offset="1" stop-color="#8e00ff"/></linearGradient><linearGradient id="d112"><stop offset="0" stop-color="#003499"/><stop offset=".2403" stop-color="#031c99"/><stop offset=".5057" stop-color="#5d0099"/><stop offset=".5963" stop-color="#930099"/><stop offset=".6125" stop-color="#990093"/><stop offset=".7071" stop-color="#990059"/><stop offset=".8325" stop-color="#990028"/><stop offset=".9919" stop-color="#990005"/><stop offset="1" stop-color="#990004"/></linearGradient><linearGradient id="b112"><stop offset="0" stop-color="#0031ff"/><stop offset=".269" stop-color="#1923ff"/><stop offset=".8165" stop-color="#6907ff"/><stop offset="1" stop-color="#8900ff"/></linearGradient><linearGradient id="d113"><stop offset="0" stop-color="#003399"/><stop offset=".2427" stop-color="#031b99"/><stop offset=".5032" stop-color="#5a0099"/><stop offset=".5947" stop-color="#8f0099"/><stop offset=".6133" stop-color="#990095"/><stop offset=".7071" stop-color="#99005b"/><stop offset=".8309" stop-color="#99002a"/><stop offset=".9895" stop-color="#990006"/><stop offset="1" stop-color="#990004"/></linearGradient><linearGradient id="b113"><stop offset="0" stop-color="#0030ff"/><stop offset=".2903" stop-color="#1b21ff"/><stop offset=".8581" stop-color="#6d05ff"/><stop offset="1" stop-color="#8500ff"/></linearGradient><linearGradient id="d114"><stop offset="0" stop-color="#003299"/><stop offset=".2435" stop-color="#031a99"/><stop offset=".5016" stop-color="#580099"/><stop offset=".5947" stop-color="#8d0099"/><stop offset=".6165" stop-color="#990095"/><stop offset=".7104" stop-color="#99005b"/><stop offset=".8341" stop-color="#99002a"/><stop offset=".9927" stop-color="#990006"/><stop offset="1" stop-color="#990005"/></linearGradient><linearGradient id="b114"><stop offset="0" stop-color="#002eff"/><stop offset=".3137" stop-color="#1d1eff"/><stop offset=".8987" stop-color="#7103ff"/><stop offset="1" stop-color="#8100ff"/></linearGradient><linearGradient id="d115"><stop offset="0" stop-color="#003199"/><stop offset=".2443" stop-color="#031999"/><stop offset=".4992" stop-color="#550099"/><stop offset=".5939" stop-color="#8a0099"/><stop offset=".6197" stop-color="#990095"/><stop offset=".7136" stop-color="#99005b"/><stop offset=".8374" stop-color="#99002a"/><stop offset=".996" stop-color="#990006"/><stop offset="1" stop-color="#990005"/></linearGradient><linearGradient id="b115"><stop offset="0" stop-color="#002dff"/><stop offset=".298" stop-color="#1a1eff"/><stop offset=".8907" stop-color="#6b03ff"/><stop offset="1" stop-color="#7d00ff"/></linearGradient><linearGradient id="d116"><stop offset="0" stop-color="#002f99"/><stop offset=".2451" stop-color="#031999"/><stop offset=".4968" stop-color="#530099"/><stop offset=".593" stop-color="#870099"/><stop offset=".6222" stop-color="#990096"/><stop offset=".716" stop-color="#99005c"/><stop offset=".8398" stop-color="#99002a"/><stop offset=".9984" stop-color="#990006"/><stop offset="1" stop-color="#990006"/></linearGradient><linearGradient id="b116"><stop offset="0" stop-color="#002cff"/><stop offset=".3243" stop-color="#1d1cff"/><stop offset=".9392" stop-color="#6f01ff"/><stop offset="1" stop-color="#7900ff"/></linearGradient><linearGradient id="d117"><stop offset="0" stop-color="#002e99"/><stop offset=".2468" stop-color="#031899"/><stop offset=".4935" stop-color="#500099"/><stop offset=".5914" stop-color="#840099"/><stop offset=".6254" stop-color="#990096"/><stop offset=".7193" stop-color="#99005c"/><stop offset=".843" stop-color="#99002a"/><stop offset="1" stop-color="#990006"/></linearGradient><linearGradient id="b117"><stop offset="0" stop-color="#002aff"/><stop offset=".3483" stop-color="#1f1aff"/><stop offset=".9828" stop-color="#7200ff"/><stop offset="1" stop-color="#7500ff"/></linearGradient><linearGradient id="d118"><stop offset="0" stop-color="#002d99"/><stop offset=".2484" stop-color="#031799"/><stop offset=".4911" stop-color="#4e0099"/><stop offset=".5906" stop-color="#810099"/><stop offset=".6286" stop-color="#990096"/><stop offset=".7225" stop-color="#99005c"/><stop offset=".8463" stop-color="#99002a"/><stop offset="1" stop-color="#990007"/></linearGradient><linearGradient id="b118"><stop offset="0" stop-color="#0029ff"/><stop offset=".3322" stop-color="#1b1aff"/><stop offset=".9755" stop-color="#6d00ff"/><stop offset="1" stop-color="#7100ff"/></linearGradient><linearGradient id="d119"><stop offset="0" stop-color="#002c99"/><stop offset=".2492" stop-color="#031699"/><stop offset=".4887" stop-color="#4b0099"/><stop offset=".5898" stop-color="#7e0099"/><stop offset=".6319" stop-color="#990096"/><stop offset=".7257" stop-color="#99005c"/><stop offset=".8495" stop-color="#99002a"/><stop offset="1" stop-color="#990007"/></linearGradient><linearGradient id="b119"><stop offset="0" stop-color="#0027ff"/><stop offset=".3607" stop-color="#1e18ff"/><stop offset="1" stop-color="#6d00ff"/></linearGradient><linearGradient id="d120"><stop offset="0" stop-color="#002b99"/><stop offset=".25" stop-color="#031599"/><stop offset=".4862" stop-color="#490099"/><stop offset=".589" stop-color="#7c0099"/><stop offset=".6351" stop-color="#990096"/><stop offset=".729" stop-color="#99005c"/><stop offset=".8528" stop-color="#99002a"/><stop offset="1" stop-color="#990008"/></linearGradient><linearGradient id="b120"><stop offset="0" stop-color="#0026ff"/><stop offset=".3442" stop-color="#1b18ff"/><stop offset="1" stop-color="#6900ff"/></linearGradient><linearGradient id="d121"><stop offset="0" stop-color="#002999"/><stop offset=".2516" stop-color="#031599"/><stop offset=".483" stop-color="#470099"/><stop offset=".5874" stop-color="#790099"/><stop offset=".6383" stop-color="#990096"/><stop offset=".7322" stop-color="#99005c"/><stop offset=".856" stop-color="#99002a"/><stop offset="1" stop-color="#990008"/></linearGradient><linearGradient id="b121"><stop offset="0" stop-color="#0025ff"/><stop offset=".3704" stop-color="#1d16ff"/><stop offset="1" stop-color="#6500ff"/></linearGradient><linearGradient id="d122"><stop offset="0" stop-color="#002899"/><stop offset=".2524" stop-color="#031499"/><stop offset=".4806" stop-color="#450099"/><stop offset=".5866" stop-color="#760099"/><stop offset=".6416" stop-color="#990096"/><stop offset=".7354" stop-color="#99005c"/><stop offset=".8592" stop-color="#99002a"/><stop offset="1" stop-color="#990009"/></linearGradient><linearGradient id="b122"><stop offset="0" stop-color="#0024ff"/><stop offset=".4015" stop-color="#1f14ff"/><stop offset="1" stop-color="#6200ff"/></linearGradient><linearGradient id="d123"><stop offset="0" stop-color="#002799"/><stop offset=".254" stop-color="#031399"/><stop offset=".4782" stop-color="#420099"/><stop offset=".5858" stop-color="#740099"/><stop offset=".6448" stop-color="#990096"/><stop offset=".7387" stop-color="#99005c"/><stop offset=".8625" stop-color="#99002a"/><stop offset="1" stop-color="#990009"/></linearGradient><linearGradient id="b123"><stop offset="0" stop-color="#0023ff"/><stop offset=".3846" stop-color="#1c14ff"/><stop offset="1" stop-color="#5e00ff"/></linearGradient><linearGradient id="d124"><stop offset="0" stop-color="#002699"/><stop offset=".2549" stop-color="#031299"/><stop offset=".4765" stop-color="#410099"/><stop offset=".585" stop-color="#710099"/><stop offset=".6481" stop-color="#990096"/><stop offset=".7419" stop-color="#99005c"/><stop offset=".8657" stop-color="#99002a"/><stop offset="1" stop-color="#99000a"/></linearGradient><linearGradient id="b124"><stop offset="0" stop-color="#0021ff"/><stop offset=".4173" stop-color="#1e12ff"/><stop offset="1" stop-color="#5b00ff"/></linearGradient><linearGradient id="d125"><stop offset="0" stop-color="#002599"/><stop offset=".2557" stop-color="#031299"/><stop offset=".4741" stop-color="#3f0099"/><stop offset=".5841" stop-color="#6f0099"/><stop offset=".6521" stop-color="#990096"/><stop offset=".746" stop-color="#99005c"/><stop offset=".8697" stop-color="#99002a"/><stop offset="1" stop-color="#99000b"/></linearGradient><linearGradient id="b125"><stop offset="0" stop-color="#0021ff"/><stop offset=".4" stop-color="#1b12ff"/><stop offset="1" stop-color="#5700ff"/></linearGradient><linearGradient id="d126"><stop offset="0" stop-color="#002499"/><stop offset=".2573" stop-color="#031199"/><stop offset=".4717" stop-color="#3d0099"/><stop offset=".5833" stop-color="#6d0099"/><stop offset=".6553" stop-color="#990096"/><stop offset=".7492" stop-color="#99005c"/><stop offset=".873" stop-color="#99002a"/><stop offset="1" stop-color="#99000b"/></linearGradient><linearGradient id="b126"><stop offset="0" stop-color="#001fff"/><stop offset=".4303" stop-color="#1d10ff"/><stop offset="1" stop-color="#5400ff"/></linearGradient><linearGradient id="d127"><stop offset="0" stop-color="#002399"/><stop offset=".2589" stop-color="#031099"/><stop offset=".4693" stop-color="#3b0099"/><stop offset=".5825" stop-color="#6a0099"/><stop offset=".6586" stop-color="#990096"/><stop offset=".7524" stop-color="#99005c"/><stop offset=".8762" stop-color="#99002a"/><stop offset="1" stop-color="#99000c"/></linearGradient><linearGradient id="b127"><stop offset="0" stop-color="#001eff"/><stop offset=".4664" stop-color="#1f0eff"/><stop offset="1" stop-color="#5100ff"/></linearGradient><linearGradient id="d128"><stop offset="0" stop-color="#002299"/><stop offset=".2597" stop-color="#031099"/><stop offset=".4668" stop-color="#390099"/><stop offset=".5817" stop-color="#680099"/><stop offset=".6618" stop-color="#990096"/><stop offset=".7557" stop-color="#99005c"/><stop offset=".8794" stop-color="#99002a"/><stop offset="1" stop-color="#99000d"/></linearGradient><linearGradient id="b128"><stop offset="0" stop-color="#001dff"/><stop offset=".4487" stop-color="#1c0fff"/><stop offset="1" stop-color="#4e00ff"/></linearGradient><linearGradient id="d129"><stop offset="0" stop-color="#002199"/><stop offset=".2605" stop-color="#030f99"/><stop offset=".4644" stop-color="#370099"/><stop offset=".5809" stop-color="#660099"/><stop offset=".665" stop-color="#990096"/><stop offset=".7589" stop-color="#99005c"/><stop offset=".8827" stop-color="#99002a"/><stop offset="1" stop-color="#99000d"/></linearGradient><linearGradient id="b129"><stop offset="0" stop-color="#001cff"/><stop offset=".4825" stop-color="#1e0dff"/><stop offset="1" stop-color="#4b00ff"/></linearGradient><linearGradient id="d130"><stop offset="0" stop-color="#002199"/><stop offset=".2621" stop-color="#030f99"/><stop offset=".462" stop-color="#350099"/><stop offset=".5801" stop-color="#640099"/><stop offset=".6683" stop-color="#990096"/><stop offset=".7621" stop-color="#99005c"/><stop offset=".8859" stop-color="#99002a"/><stop offset="1" stop-color="#99000e"/></linearGradient><linearGradient id="b130"><stop offset="0" stop-color="#001bff"/><stop offset=".5225" stop-color="#200bff"/><stop offset="1" stop-color="#4800ff"/></linearGradient><linearGradient id="d131"><stop offset="0" stop-color="#002099"/><stop offset=".2638" stop-color="#030e99"/><stop offset=".4604" stop-color="#340099"/><stop offset=".5801" stop-color="#620099"/><stop offset=".6715" stop-color="#990096"/><stop offset=".7654" stop-color="#99005c"/><stop offset=".8892" stop-color="#99002a"/><stop offset="1" stop-color="#99000e"/></linearGradient><linearGradient id="b131"><stop offset="0" stop-color="#001aff"/><stop offset=".5046" stop-color="#1d0bff"/><stop offset="1" stop-color="#4500ff"/></linearGradient><linearGradient id="d132"><stop offset="0" stop-color="#001f99"/><stop offset=".2646" stop-color="#030d99"/><stop offset=".4579" stop-color="#320099"/><stop offset=".5793" stop-color="#600099"/><stop offset=".6675" stop-color="#960099"/><stop offset=".7816" stop-color="#990055"/><stop offset=".9094" stop-color="#990025"/><stop offset="1" stop-color="#99000f"/></linearGradient><linearGradient id="b132"><stop offset="0" stop-color="#0019ff"/><stop offset=".5472" stop-color="#1f0aff"/><stop offset="1" stop-color="#4300ff"/></linearGradient><linearGradient id="d133"><stop offset="0" stop-color="#001e99"/><stop offset=".2654" stop-color="#030d99"/><stop offset=".4555" stop-color="#310099"/><stop offset=".5785" stop-color="#5e0099"/><stop offset=".6683" stop-color="#940099"/><stop offset=".6861" stop-color="#990090"/><stop offset=".7824" stop-color="#990057"/><stop offset=".9094" stop-color="#990026"/><stop offset="1" stop-color="#990010"/></linearGradient><linearGradient id="b133"><stop offset="0" stop-color="#0018ff"/><stop offset=".5288" stop-color="#1c0aff"/><stop offset="1" stop-color="#4000ff"/></linearGradient><linearGradient id="d134"><stop offset="0" stop-color="#001d99"/><stop offset=".267" stop-color="#030c99"/><stop offset=".4539" stop-color="#2f0099"/><stop offset=".5785" stop-color="#5d0099"/><stop offset=".6691" stop-color="#920099"/><stop offset=".6853" stop-color="#990093"/><stop offset=".7799" stop-color="#990059"/><stop offset=".9053" stop-color="#990029"/><stop offset="1" stop-color="#990011"/></linearGradient><linearGradient id="b134"><stop offset="0" stop-color="#0017ff"/><stop offset=".5693" stop-color="#1e09ff"/><stop offset="1" stop-color="#3d00ff"/></linearGradient><linearGradient id="d135"><stop offset="0" stop-color="#001c99"/><stop offset=".2686" stop-color="#030c99"/><stop offset=".4531" stop-color="#2e0099"/><stop offset=".5785" stop-color="#5b0099"/><stop offset=".6699" stop-color="#910099"/><stop offset=".6869" stop-color="#990095"/><stop offset=".7816" stop-color="#99005a"/><stop offset=".9061" stop-color="#990029"/><stop offset="1" stop-color="#990011"/></linearGradient><linearGradient id="b135"><stop offset="0" stop-color="#0016ff"/><stop offset=".6111" stop-color="#2007ff"/><stop offset="1" stop-color="#3b00ff"/></linearGradient><linearGradient id="d136"><stop offset="0" stop-color="#001b99"/><stop offset=".2694" stop-color="#030b99"/><stop offset=".4515" stop-color="#2d0099"/><stop offset=".5785" stop-color="#5a0099"/><stop offset=".6707" stop-color="#8f0099"/><stop offset=".6893" stop-color="#990095"/><stop offset=".7832" stop-color="#99005b"/><stop offset=".907" stop-color="#99002a"/><stop offset="1" stop-color="#990012"/></linearGradient><linearGradient id="b136"><stop offset="0" stop-color="#0015ff"/><stop offset=".5928" stop-color="#1d07ff"/><stop offset="1" stop-color="#3900ff"/></linearGradient><linearGradient id="d137"><stop offset="0" stop-color="#001b99"/><stop offset=".2702" stop-color="#030b99"/><stop offset=".4498" stop-color="#2b0099"/><stop offset=".5785" stop-color="#580099"/><stop offset=".6715" stop-color="#8d0099"/><stop offset=".6926" stop-color="#990095"/><stop offset=".7864" stop-color="#99005b"/><stop offset=".9102" stop-color="#99002a"/><stop offset="1" stop-color="#990013"/></linearGradient><linearGradient id="b137"><stop offset="0" stop-color="#0014ff"/><stop offset=".6436" stop-color="#1f06ff"/><stop offset="1" stop-color="#3600ff"/></linearGradient><linearGradient id="d138"><stop offset="0" stop-color="#001a99"/><stop offset=".2727" stop-color="#030a99"/><stop offset=".4482" stop-color="#2a0099"/><stop offset=".5785" stop-color="#570099"/><stop offset=".6723" stop-color="#8b0099"/><stop offset=".6958" stop-color="#990095"/><stop offset=".7896" stop-color="#99005b"/><stop offset=".9134" stop-color="#99002a"/><stop offset="1" stop-color="#990013"/></linearGradient><linearGradient id="b138"><stop offset="0" stop-color="#0014ff"/><stop offset=".6923" stop-color="#2105ff"/><stop offset="1" stop-color="#3400ff"/></linearGradient><linearGradient id="d139"><stop offset="0" stop-color="#001999"/><stop offset=".2735" stop-color="#030a99"/><stop offset=".4466" stop-color="#290099"/><stop offset=".5777" stop-color="#550099"/><stop offset=".6723" stop-color="#890099"/><stop offset=".699" stop-color="#990095"/><stop offset=".7929" stop-color="#99005b"/><stop offset=".9167" stop-color="#99002a"/><stop offset="1" stop-color="#990014"/></linearGradient><linearGradient id="b139"><stop offset="0" stop-color="#0013ff"/><stop offset=".6742" stop-color="#1e05ff"/><stop offset="1" stop-color="#3200ff"/></linearGradient><linearGradient id="d140"><stop offset="0" stop-color="#001899"/><stop offset=".2743" stop-color="#030999"/><stop offset=".4458" stop-color="#280099"/><stop offset=".5785" stop-color="#540099"/><stop offset=".6739" stop-color="#880099"/><stop offset=".7023" stop-color="#990095"/><stop offset=".7961" stop-color="#99005b"/><stop offset=".9199" stop-color="#99002a"/><stop offset="1" stop-color="#990015"/></linearGradient><linearGradient id="b140"><stop offset="0" stop-color="#0012ff"/><stop offset=".7326" stop-color="#2003ff"/><stop offset="1" stop-color="#2f00ff"/></linearGradient><linearGradient id="d141"><stop offset="0" stop-color="#001899"/><stop offset=".2759" stop-color="#030999"/><stop offset=".445" stop-color="#270099"/><stop offset=".5785" stop-color="#520099"/><stop offset=".6748" stop-color="#860099"/><stop offset=".7055" stop-color="#990096"/><stop offset=".7994" stop-color="#99005b"/><stop offset=".9231" stop-color="#99002a"/><stop offset="1" stop-color="#990016"/></linearGradient><linearGradient id="b141"><stop offset="0" stop-color="#0011ff"/><stop offset=".7143" stop-color="#1d04ff"/><stop offset="1" stop-color="#2d00ff"/></linearGradient><linearGradient id="d142"><stop offset="0" stop-color="#001799"/><stop offset=".2767" stop-color="#030899"/><stop offset=".4442" stop-color="#260099"/><stop offset=".5793" stop-color="#510099"/><stop offset=".6764" stop-color="#850099"/><stop offset=".7087" stop-color="#990096"/><stop offset=".8026" stop-color="#99005b"/><stop offset=".9264" stop-color="#99002a"/><stop offset="1" stop-color="#990016"/></linearGradient><linearGradient id="b142"><stop offset="0" stop-color="#0010ff"/><stop offset=".7716" stop-color="#1f03ff"/><stop offset="1" stop-color="#2b00ff"/></linearGradient><linearGradient id="d143"><stop offset="0" stop-color="#001699"/><stop offset=".2783" stop-color="#030899"/><stop offset=".4442" stop-color="#250099"/><stop offset=".5801" stop-color="#500099"/><stop offset=".678" stop-color="#840099"/><stop offset=".712" stop-color="#990096"/><stop offset=".8058" stop-color="#99005b"/><stop offset=".9296" stop-color="#99002a"/><stop offset="1" stop-color="#990017"/></linearGradient><linearGradient id="b143"><stop offset="0" stop-color="#0010ff"/><stop offset=".8397" stop-color="#2101ff"/><stop offset="1" stop-color="#2900ff"/></linearGradient><linearGradient id="d144"><stop offset="0" stop-color="#001699"/><stop offset=".2799" stop-color="#030799"/><stop offset=".4442" stop-color="#240099"/><stop offset=".5809" stop-color="#4f0099"/><stop offset=".6796" stop-color="#830099"/><stop offset=".7152" stop-color="#990096"/><stop offset=".8091" stop-color="#99005c"/><stop offset=".9328" stop-color="#99002a"/><stop offset="1" stop-color="#990018"/></linearGradient><linearGradient id="b144"><stop offset="0" stop-color="#000fff"/><stop offset=".8224" stop-color="#1e02ff"/><stop offset="1" stop-color="#2700ff"/></linearGradient><linearGradient id="d145"><stop offset="0" stop-color="#001599"/><stop offset=".2807" stop-color="#030799"/><stop offset=".4466" stop-color="#240099"/><stop offset=".5833" stop-color="#4f0099"/><stop offset=".682" stop-color="#820099"/><stop offset=".7184" stop-color="#990096"/><stop offset=".8123" stop-color="#99005c"/><stop offset=".9361" stop-color="#99002a"/><stop offset="1" stop-color="#990019"/></linearGradient><linearGradient id="b145"><stop offset="0" stop-color="#000eff"/><stop offset=".8973" stop-color="#2001ff"/><stop offset="1" stop-color="#2500ff"/></linearGradient><linearGradient id="d146"><stop offset="0" stop-color="#001499"/><stop offset=".2816" stop-color="#030699"/><stop offset=".4482" stop-color="#240099"/><stop offset=".5858" stop-color="#4e0099"/><stop offset=".6845" stop-color="#810099"/><stop offset=".7217" stop-color="#990096"/><stop offset=".8155" stop-color="#99005c"/><stop offset=".9393" stop-color="#99002a"/><stop offset="1" stop-color="#99001a"/></linearGradient><linearGradient id="b146"><stop offset="0" stop-color="#000eff"/><stop offset=".8803" stop-color="#1e01ff"/><stop offset="1" stop-color="#2300ff"/></linearGradient><linearGradient id="d147"><stop offset="0" stop-color="#001499"/><stop offset=".284" stop-color="#030699"/><stop offset=".4515" stop-color="#240099"/><stop offset=".589" stop-color="#4e0099"/><stop offset=".6877" stop-color="#810099"/><stop offset=".7249" stop-color="#990096"/><stop offset=".8188" stop-color="#99005c"/><stop offset=".9426" stop-color="#99002a"/><stop offset="1" stop-color="#99001a"/></linearGradient><linearGradient id="b147"><stop offset="0" stop-color="#000dff"/><stop offset=".9559" stop-color="#1f00ff"/><stop offset="1" stop-color="#2100ff"/></linearGradient><linearGradient id="d148"><stop offset="0" stop-color="#001399"/><stop offset=".2848" stop-color="#030699"/><stop offset=".4555" stop-color="#240099"/><stop offset=".593" stop-color="#4f0099"/><stop offset=".6917" stop-color="#820099"/><stop offset=".7282" stop-color="#990096"/><stop offset=".822" stop-color="#99005c"/><stop offset=".9458" stop-color="#99002a"/><stop offset="1" stop-color="#99001b"/></linearGradient><linearGradient id="b148"><stop offset="0" stop-color="#000cff"/><stop offset="1" stop-color="#1f00ff"/></linearGradient><linearGradient id="d149"><stop offset="0" stop-color="#001399"/><stop offset=".2864" stop-color="#030599"/><stop offset=".4636" stop-color="#250099"/><stop offset=".5995" stop-color="#500099"/><stop offset=".6974" stop-color="#830099"/><stop offset=".7314" stop-color="#990096"/><stop offset=".8252" stop-color="#99005c"/><stop offset=".949" stop-color="#99002a"/><stop offset="1" stop-color="#99001c"/></linearGradient><linearGradient id="b149"><stop offset="0" stop-color="#000bff"/><stop offset="1" stop-color="#1d00ff"/></linearGradient><linearGradient id="d150"><stop offset="0" stop-color="#001299"/><stop offset=".2872" stop-color="#030599"/><stop offset=".4741" stop-color="#270099"/><stop offset=".6076" stop-color="#520099"/><stop offset=".7039" stop-color="#860099"/><stop offset=".7354" stop-color="#990095"/><stop offset=".8293" stop-color="#99005b"/><stop offset=".9531" stop-color="#99002a"/><stop offset="1" stop-color="#99001d"/></linearGradient><linearGradient id="b150"><stop offset="0" stop-color="#000bff"/><stop offset="1" stop-color="#1c00ff"/></linearGradient><linearGradient id="d151"><stop offset="0" stop-color="#001199"/><stop offset=".2888" stop-color="#030499"/><stop offset=".4911" stop-color="#2a0099"/><stop offset=".6214" stop-color="#570099"/><stop offset=".7152" stop-color="#8b0099"/><stop offset=".7387" stop-color="#990096"/><stop offset=".8325" stop-color="#99005b"/><stop offset=".9563" stop-color="#99002a"/><stop offset="1" stop-color="#99001e"/></linearGradient><linearGradient id="b151"><stop offset="0" stop-color="#000aff"/><stop offset="1" stop-color="#1a00ff"/></linearGradient><linearGradient id="d152"><stop offset="0" stop-color="#001199"/><stop offset=".2905" stop-color="#030499"/><stop offset=".5032" stop-color="#2c0099"/><stop offset=".6303" stop-color="#590099"/><stop offset=".7225" stop-color="#8e0099"/><stop offset=".7427" stop-color="#990095"/><stop offset=".8366" stop-color="#99005b"/><stop offset=".9604" stop-color="#99002a"/><stop offset="1" stop-color="#99001f"/></linearGradient><linearGradient id="b152"><stop offset="0" stop-color="#0009ff"/><stop offset="1" stop-color="#1800ff"/></linearGradient><linearGradient id="d153"><stop offset="0" stop-color="#001099"/><stop offset=".2913" stop-color="#030499"/><stop offset=".5032" stop-color="#2b0099"/><stop offset=".6319" stop-color="#580099"/><stop offset=".7249" stop-color="#8d0099"/><stop offset=".746" stop-color="#990095"/><stop offset=".8398" stop-color="#99005b"/><stop offset=".9636" stop-color="#99002a"/><stop offset="1" stop-color="#99001f"/></linearGradient><linearGradient id="b153"><stop offset="0" stop-color="#0009ff"/><stop offset="1" stop-color="#1600ff"/></linearGradient><linearGradient id="d154"><stop offset="0" stop-color="#001099"/><stop offset=".2929" stop-color="#030399"/><stop offset=".5024" stop-color="#2a0099"/><stop offset=".6319" stop-color="#570099"/><stop offset=".7257" stop-color="#8b0099"/><stop offset=".7492" stop-color="#990095"/><stop offset=".843" stop-color="#99005b"/><stop offset=".9668" stop-color="#99002a"/><stop offset="1" stop-color="#990020"/></linearGradient><linearGradient id="b154"><stop offset="0" stop-color="#0008ff"/><stop offset="1" stop-color="#1500ff"/></linearGradient><linearGradient id="d155"><stop offset="0" stop-color="#000f99"/><stop offset=".2945" stop-color="#030399"/><stop offset=".5032" stop-color="#2a0099"/><stop offset=".6335" stop-color="#560099"/><stop offset=".7273" stop-color="#8a0099"/><stop offset=".7524" stop-color="#990095"/><stop offset=".8463" stop-color="#99005b"/><stop offset=".9701" stop-color="#99002a"/><stop offset="1" stop-color="#990021"/></linearGradient><linearGradient id="b155"><stop offset="0" stop-color="#0008ff"/><stop offset="1" stop-color="#1400ff"/></linearGradient><linearGradient id="d156"><stop offset="0" stop-color="#000f99"/><stop offset=".2961" stop-color="#030399"/><stop offset=".5032" stop-color="#290099"/><stop offset=".6343" stop-color="#550099"/><stop offset=".729" stop-color="#890099"/><stop offset=".7549" stop-color="#990096"/><stop offset=".8487" stop-color="#99005c"/><stop offset=".9725" stop-color="#99002a"/><stop offset="1" stop-color="#990022"/></linearGradient><linearGradient id="b156"><stop offset="0" stop-color="#0007ff"/><stop offset="1" stop-color="#1200ff"/></linearGradient><linearGradient id="d157"><stop offset="0" stop-color="#000e99"/><stop offset=".2977" stop-color="#030299"/><stop offset=".5032" stop-color="#280099"/><stop offset=".6351" stop-color="#540099"/><stop offset=".7306" stop-color="#880099"/><stop offset=".7581" stop-color="#990096"/><stop offset=".8519" stop-color="#99005c"/><stop offset=".9757" stop-color="#99002a"/><stop offset="1" stop-color="#990023"/></linearGradient><linearGradient id="b157"><stop offset="0" stop-color="#0007ff"/><stop offset="1" stop-color="#1100ff"/></linearGradient><linearGradient id="d158"><stop offset="0" stop-color="#000e99"/><stop offset=".2985" stop-color="#030299"/><stop offset=".5024" stop-color="#270099"/><stop offset=".6359" stop-color="#530099"/><stop offset=".7322" stop-color="#870099"/><stop offset=".7613" stop-color="#990096"/><stop offset=".8552" stop-color="#99005c"/><stop offset=".979" stop-color="#99002a"/><stop offset="1" stop-color="#990024"/></linearGradient><linearGradient id="b158"><stop offset="0" stop-color="#0006ff"/><stop offset="1" stop-color="#0f00ff"/></linearGradient><linearGradient id="d159"><stop offset="0" stop-color="#000d99"/><stop offset=".3002" stop-color="#030299"/><stop offset=".5024" stop-color="#260099"/><stop offset=".6367" stop-color="#520099"/><stop offset=".7338" stop-color="#860099"/><stop offset=".7646" stop-color="#990096"/><stop offset=".8584" stop-color="#99005c"/><stop offset=".9822" stop-color="#99002a"/><stop offset="1" stop-color="#990025"/></linearGradient><linearGradient id="b159"><stop offset="0" stop-color="#0006ff"/><stop offset="1" stop-color="#0e00ff"/></linearGradient><linearGradient id="d160"><stop offset="0" stop-color="#000d99"/><stop offset=".3018" stop-color="#030199"/><stop offset=".5024" stop-color="#250099"/><stop offset=".6375" stop-color="#510099"/><stop offset=".7354" stop-color="#840099"/><stop offset=".7678" stop-color="#990096"/><stop offset=".8617" stop-color="#99005c"/><stop offset=".9854" stop-color="#99002a"/><stop offset="1" stop-color="#990026"/></linearGradient><linearGradient id="b160"><stop offset="0" stop-color="#0005ff"/><stop offset="1" stop-color="#0d00ff"/></linearGradient><linearGradient id="d161"><stop offset="0" stop-color="#000c99"/><stop offset=".3034" stop-color="#030199"/><stop offset=".5024" stop-color="#250099"/><stop offset=".6383" stop-color="#500099"/><stop offset=".7362" stop-color="#830099"/><stop offset=".7718" stop-color="#990096"/><stop offset=".8657" stop-color="#99005b"/><stop offset=".9895" stop-color="#99002a"/><stop offset="1" stop-color="#990027"/></linearGradient><linearGradient id="b161"><stop offset="0" stop-color="#0004ff"/><stop offset="1" stop-color="#0b00ff"/></linearGradient><linearGradient id="d162"><stop offset="0" stop-color="#000c99"/><stop offset=".305" stop-color="#030199"/><stop offset=".5024" stop-color="#240099"/><stop offset=".64" stop-color="#4f0099"/><stop offset=".7387" stop-color="#820099"/><stop offset=".7751" stop-color="#990096"/><stop offset=".8689" stop-color="#99005b"/><stop offset=".9927" stop-color="#99002a"/><stop offset="1" stop-color="#990028"/></linearGradient><linearGradient id="b162"><stop offset="0" stop-color="#0004ff"/><stop offset="1" stop-color="#0a00ff"/></linearGradient><linearGradient id="d163"><stop offset="0" stop-color="#000b99"/><stop offset=".3074" stop-color="#030099"/><stop offset=".5024" stop-color="#230099"/><stop offset=".6408" stop-color="#4e0099"/><stop offset=".7403" stop-color="#810099"/><stop offset=".7783" stop-color="#990096"/><stop offset=".8722" stop-color="#99005b"/><stop offset=".996" stop-color="#99002a"/><stop offset="1" stop-color="#990029"/></linearGradient><linearGradient id="b163"><stop offset="0" stop-color="#0003ff"/><stop offset="1" stop-color="#0900ff"/></linearGradient><linearGradient id="d164"><stop offset="0" stop-color="#000b99"/><stop offset=".3091" stop-color="#030099"/><stop offset=".5024" stop-color="#220099"/><stop offset=".6416" stop-color="#4d0099"/><stop offset=".7419" stop-color="#800099"/><stop offset=".7816" stop-color="#990096"/><stop offset=".8754" stop-color="#99005b"/><stop offset=".9992" stop-color="#99002a"/><stop offset="1" stop-color="#99002a"/></linearGradient><linearGradient id="b164"><stop offset="0" stop-color="#0003ff"/><stop offset="1" stop-color="#0800ff"/></linearGradient><linearGradient id="d165"><stop offset="0" stop-color="#000a99"/><stop offset=".3115" stop-color="#030099"/><stop offset=".5032" stop-color="#220099"/><stop offset=".6432" stop-color="#4c0099"/><stop offset=".7435" stop-color="#7f0099"/><stop offset=".7848" stop-color="#990096"/><stop offset=".8786" stop-color="#99005c"/><stop offset="1" stop-color="#99002b"/></linearGradient><linearGradient id="b165"><stop offset="0" stop-color="#0003ff"/><stop offset="1" stop-color="#0700ff"/></linearGradient><linearGradient id="d166"><stop offset="0" stop-color="#000a99"/><stop offset=".3147" stop-color="#030099"/><stop offset=".5065" stop-color="#220099"/><stop offset=".6464" stop-color="#4c0099"/><stop offset=".7468" stop-color="#7f0099"/><stop offset=".788" stop-color="#990096"/><stop offset=".8819" stop-color="#99005c"/><stop offset="1" stop-color="#99002c"/></linearGradient><linearGradient id="b166"><stop offset="0" stop-color="#0002ff"/><stop offset="1" stop-color="#0500ff"/></linearGradient><linearGradient id="d167"><stop offset="0" stop-color="#000999"/><stop offset=".3188" stop-color="#030099"/><stop offset=".5105" stop-color="#220099"/><stop offset=".6505" stop-color="#4c0099"/><stop offset=".7508" stop-color="#7f0099"/><stop offset=".7913" stop-color="#990096"/><stop offset=".8851" stop-color="#99005c"/><stop offset="1" stop-color="#99002d"/></linearGradient><linearGradient id="b167"><stop offset="0" stop-color="#0002ff"/><stop offset="1" stop-color="#0400ff"/></linearGradient><linearGradient id="d168"><stop offset="0" stop-color="#000999"/><stop offset=".322" stop-color="#030099"/><stop offset=".5138" stop-color="#220099"/><stop offset=".6537" stop-color="#4c0099"/><stop offset=".754" stop-color="#7f0099"/><stop offset=".7945" stop-color="#990096"/><stop offset=".8883" stop-color="#99005c"/><stop offset="1" stop-color="#99002e"/></linearGradient><linearGradient id="b168"><stop offset="0" stop-color="#0001ff"/><stop offset="1" stop-color="#0300ff"/></linearGradient><linearGradient id="d169"><stop offset="0" stop-color="#000999"/><stop offset=".3252" stop-color="#030099"/><stop offset=".517" stop-color="#220099"/><stop offset=".657" stop-color="#4c0099"/><stop offset=".7573" stop-color="#7f0099"/><stop offset=".7977" stop-color="#990096"/><stop offset=".8916" stop-color="#99005c"/><stop offset="1" stop-color="#99002f"/></linearGradient><linearGradient id="b169"><stop offset="0" stop-color="#0001ff"/><stop offset="1" stop-color="#0200ff"/></linearGradient><linearGradient id="d170"><stop offset="0" stop-color="#000899"/><stop offset=".3293" stop-color="#030099"/><stop offset=".521" stop-color="#220099"/><stop offset=".6602" stop-color="#4c0099"/><stop offset=".7605" stop-color="#7f0099"/><stop offset=".801" stop-color="#990096"/><stop offset=".8948" stop-color="#99005c"/><stop offset="1" stop-color="#990030"/></linearGradient><linearGradient id="b170"><stop offset="0" stop-color="#0001ff"/><stop offset="1" stop-color="#0200ff"/></linearGradient><linearGradient id="d171"><stop offset="0" stop-color="#000899"/><stop offset=".3325" stop-color="#030099"/><stop offset=".5243" stop-color="#220099"/><stop offset=".6634" stop-color="#4c0099"/><stop offset=".7638" stop-color="#7f0099"/><stop offset=".8042" stop-color="#990096"/><stop offset=".8981" stop-color="#99005c"/><stop offset="1" stop-color="#990031"/></linearGradient><linearGradient id="b171"><stop offset="0" stop-color="#0000ff"/><stop offset="1" stop-color="#0100ff"/></linearGradient><linearGradient id="d172"><stop offset="0" stop-color="#000799"/><stop offset=".3358" stop-color="#030099"/><stop offset=".5275" stop-color="#220099"/><stop offset=".6667" stop-color="#4c0099"/><stop offset=".767" stop-color="#7f0099"/><stop offset=".8074" stop-color="#990096"/><stop offset=".9013" stop-color="#99005c"/><stop offset="1" stop-color="#990033"/></linearGradient><linearGradient id="d173"><stop offset="0" stop-color="#000799"/><stop offset=".339" stop-color="#030099"/><stop offset=".5307" stop-color="#220099"/><stop offset=".6707" stop-color="#4d0099"/><stop offset=".771" stop-color="#800099"/><stop offset=".8115" stop-color="#990096"/><stop offset=".9053" stop-color="#99005b"/><stop offset="1" stop-color="#990034"/></linearGradient><linearGradient id="d174"><stop offset="0" stop-color="#000799"/><stop offset=".3422" stop-color="#030099"/><stop offset=".534" stop-color="#220099"/><stop offset=".6739" stop-color="#4d0099"/><stop offset=".7743" stop-color="#800099"/><stop offset=".8147" stop-color="#990096"/><stop offset=".9086" stop-color="#99005b"/><stop offset="1" stop-color="#990035"/></linearGradient><linearGradient id="d175"><stop offset="0" stop-color="#000699"/><stop offset=".3455" stop-color="#030099"/><stop offset=".5372" stop-color="#220099"/><stop offset=".6772" stop-color="#4c0099"/><stop offset=".7775" stop-color="#7f0099"/><stop offset=".818" stop-color="#990096"/><stop offset=".9118" stop-color="#99005c"/><stop offset="1" stop-color="#990036"/></linearGradient><linearGradient id="d176"><stop offset="0" stop-color="#000699"/><stop offset=".3487" stop-color="#030099"/><stop offset=".5405" stop-color="#220099"/><stop offset=".6804" stop-color="#4c0099"/><stop offset=".7807" stop-color="#7f0099"/><stop offset=".8212" stop-color="#990096"/><stop offset=".915" stop-color="#99005c"/><stop offset="1" stop-color="#990037"/></linearGradient><linearGradient id="d177"><stop offset="0" stop-color="#000699"/><stop offset=".3519" stop-color="#030099"/><stop offset=".5437" stop-color="#220099"/><stop offset=".6837" stop-color="#4c0099"/><stop offset=".784" stop-color="#7f0099"/><stop offset=".8244" stop-color="#990096"/><stop offset=".9183" stop-color="#99005c"/><stop offset="1" stop-color="#990038"/></linearGradient><linearGradient id="d178"><stop offset="0" stop-color="#000599"/><stop offset=".356" stop-color="#030099"/><stop offset=".5477" stop-color="#220099"/><stop offset=".6869" stop-color="#4c0099"/><stop offset=".7872" stop-color="#7f0099"/><stop offset=".8277" stop-color="#990096"/><stop offset=".9215" stop-color="#99005c"/><stop offset="1" stop-color="#99003a"/></linearGradient><linearGradient id="d179"><stop offset="0" stop-color="#000599"/><stop offset=".3592" stop-color="#030099"/><stop offset=".551" stop-color="#220099"/><stop offset=".6901" stop-color="#4c0099"/><stop offset=".7905" stop-color="#7f0099"/><stop offset=".8309" stop-color="#990096"/><stop offset=".9248" stop-color="#99005c"/><stop offset="1" stop-color="#99003b"/></linearGradient><linearGradient id="d180"><stop offset="0" stop-color="#000599"/><stop offset=".3625" stop-color="#030099"/><stop offset=".5542" stop-color="#220099"/><stop offset=".6934" stop-color="#4c0099"/><stop offset=".7937" stop-color="#7f0099"/><stop offset=".8341" stop-color="#990096"/><stop offset=".928" stop-color="#99005c"/><stop offset="1" stop-color="#99003c"/></linearGradient><linearGradient id="d181"><stop offset="0" stop-color="#000499"/><stop offset=".3657" stop-color="#030099"/><stop offset=".5574" stop-color="#220099"/><stop offset=".6966" stop-color="#4c0099"/><stop offset=".7969" stop-color="#7f0099"/><stop offset=".8374" stop-color="#990096"/><stop offset=".9312" stop-color="#99005c"/><stop offset="1" stop-color="#99003d"/></linearGradient><linearGradient id="d182"><stop offset="0" stop-color="#000499"/><stop offset=".3689" stop-color="#030099"/><stop offset=".5607" stop-color="#220099"/><stop offset=".6998" stop-color="#4c0099"/><stop offset=".8002" stop-color="#7f0099"/><stop offset=".8406" stop-color="#990096"/><stop offset=".9345" stop-color="#99005c"/><stop offset="1" stop-color="#99003f"/></linearGradient><linearGradient id="d183"><stop offset="0" stop-color="#000499"/><stop offset=".3722" stop-color="#030099"/><stop offset=".5639" stop-color="#220099"/><stop offset=".7039" stop-color="#4d0099"/><stop offset=".8042" stop-color="#800099"/><stop offset=".8447" stop-color="#990096"/><stop offset=".9385" stop-color="#99005b"/><stop offset="1" stop-color="#990040"/></linearGradient><linearGradient id="d184"><stop offset="0" stop-color="#000399"/><stop offset=".3754" stop-color="#030099"/><stop offset=".5672" stop-color="#220099"/><stop offset=".7071" stop-color="#4d0099"/><stop offset=".8074" stop-color="#800099"/><stop offset=".8479" stop-color="#990096"/><stop offset=".9417" stop-color="#99005b"/><stop offset="1" stop-color="#990041"/></linearGradient><linearGradient id="d185"><stop offset="0" stop-color="#000399"/><stop offset=".3786" stop-color="#030099"/><stop offset=".5704" stop-color="#220099"/><stop offset=".7104" stop-color="#4c0099"/><stop offset=".8107" stop-color="#7f0099"/><stop offset=".8511" stop-color="#990096"/><stop offset=".945" stop-color="#99005c"/><stop offset="1" stop-color="#990043"/></linearGradient><linearGradient id="d186"><stop offset="0" stop-color="#000399"/><stop offset=".3819" stop-color="#030099"/><stop offset=".5736" stop-color="#220099"/><stop offset=".7136" stop-color="#4c0099"/><stop offset=".8139" stop-color="#7f0099"/><stop offset=".8544" stop-color="#990096"/><stop offset=".9482" stop-color="#99005c"/><stop offset="1" stop-color="#990044"/></linearGradient><linearGradient id="d187"><stop offset="0" stop-color="#000399"/><stop offset=".3851" stop-color="#030099"/><stop offset=".5769" stop-color="#220099"/><stop offset=".7168" stop-color="#4c0099"/><stop offset=".8172" stop-color="#7f0099"/><stop offset=".8576" stop-color="#990096"/><stop offset=".9515" stop-color="#99005c"/><stop offset="1" stop-color="#990045"/></linearGradient><linearGradient id="d188"><stop offset="0" stop-color="#000299"/><stop offset=".3883" stop-color="#030099"/><stop offset=".5801" stop-color="#220099"/><stop offset=".7201" stop-color="#4c0099"/><stop offset=".8204" stop-color="#7f0099"/><stop offset=".8608" stop-color="#990096"/><stop offset=".9547" stop-color="#99005c"/><stop offset="1" stop-color="#990047"/></linearGradient><linearGradient id="d189"><stop offset="0" stop-color="#000299"/><stop offset=".3916" stop-color="#030099"/><stop offset=".5833" stop-color="#220099"/><stop offset=".7233" stop-color="#4c0099"/><stop offset=".8236" stop-color="#7f0099"/><stop offset=".8641" stop-color="#990096"/><stop offset=".9579" stop-color="#99005c"/><stop offset="1" stop-color="#990048"/></linearGradient><linearGradient id="d190"><stop offset="0" stop-color="#000299"/><stop offset=".3948" stop-color="#030099"/><stop offset=".5866" stop-color="#220099"/><stop offset=".7265" stop-color="#4c0099"/><stop offset=".8269" stop-color="#7f0099"/><stop offset=".8673" stop-color="#990096"/><stop offset=".9612" stop-color="#99005c"/><stop offset="1" stop-color="#99004a"/></linearGradient><linearGradient id="d191"><stop offset="0" stop-color="#000299"/><stop offset=".3981" stop-color="#030099"/><stop offset=".5898" stop-color="#220099"/><stop offset=".7298" stop-color="#4c0099"/><stop offset=".8301" stop-color="#7f0099"/><stop offset=".8706" stop-color="#990096"/><stop offset=".9644" stop-color="#99005c"/><stop offset="1" stop-color="#99004b"/></linearGradient><linearGradient id="d192"><stop offset="0" stop-color="#000199"/><stop offset=".4013" stop-color="#030099"/><stop offset=".593" stop-color="#220099"/><stop offset=".733" stop-color="#4c0099"/><stop offset=".8333" stop-color="#7f0099"/><stop offset=".8738" stop-color="#990096"/><stop offset=".9676" stop-color="#99005c"/><stop offset="1" stop-color="#99004c"/></linearGradient><linearGradient id="d193"><stop offset="0" stop-color="#000199"/><stop offset=".4045" stop-color="#030099"/><stop offset=".5963" stop-color="#220099"/><stop offset=".7362" stop-color="#4c0099"/><stop offset=".8366" stop-color="#7f0099"/><stop offset=".8778" stop-color="#990096"/><stop offset=".9717" stop-color="#99005b"/><stop offset="1" stop-color="#99004e"/></linearGradient><linearGradient id="d194"><stop offset="0" stop-color="#000199"/><stop offset=".4078" stop-color="#030099"/><stop offset=".5995" stop-color="#220099"/><stop offset=".7395" stop-color="#4c0099"/><stop offset=".8398" stop-color="#7f0099"/><stop offset=".8811" stop-color="#990096"/><stop offset=".9749" stop-color="#99005b"/><stop offset="1" stop-color="#99004f"/></linearGradient><linearGradient id="d195"><stop offset="0" stop-color="#000199"/><stop offset=".411" stop-color="#030099"/><stop offset=".6028" stop-color="#220099"/><stop offset=".7427" stop-color="#4c0099"/><stop offset=".843" stop-color="#7f0099"/><stop offset=".8843" stop-color="#990096"/><stop offset=".9782" stop-color="#99005c"/><stop offset="1" stop-color="#990051"/></linearGradient><linearGradient id="d196"><stop offset="0" stop-color="#000099"/><stop offset=".4142" stop-color="#030099"/><stop offset=".606" stop-color="#220099"/><stop offset=".746" stop-color="#4c0099"/><stop offset=".8463" stop-color="#7f0099"/><stop offset=".8875" stop-color="#990096"/><stop offset=".9814" stop-color="#99005c"/><stop offset="1" stop-color="#990053"/></linearGradient><linearGradient id="d197"><stop offset="0" stop-color="#000099"/><stop offset=".4183" stop-color="#030099"/><stop offset=".61" stop-color="#220099"/><stop offset=".75" stop-color="#4c0099"/><stop offset=".8503" stop-color="#7f0099"/><stop offset=".8908" stop-color="#990096"/><stop offset=".9846" stop-color="#99005c"/><stop offset="1" stop-color="#990054"/></linearGradient><linearGradient id="d198"><stop offset="0" stop-color="#000099"/><stop offset=".4215" stop-color="#030099"/><stop offset=".6133" stop-color="#220099"/><stop offset=".7532" stop-color="#4c0099"/><stop offset=".8536" stop-color="#7f0099"/><stop offset=".894" stop-color="#990096"/><stop offset=".9879" stop-color="#99005c"/><stop offset="1" stop-color="#990056"/></linearGradient><linearGradient id="d199"><stop offset="0" stop-color="#000099"/><stop offset=".4248" stop-color="#030099"/><stop offset=".6165" stop-color="#220099"/><stop offset=".7565" stop-color="#4c0099"/><stop offset=".8568" stop-color="#7f0099"/><stop offset=".8972" stop-color="#990096"/><stop offset=".9911" stop-color="#99005c"/><stop offset="1" stop-color="#990057"/></linearGradient><linearGradient id="d200"><stop offset="0" stop-color="#000099"/><stop offset=".428" stop-color="#030099"/><stop offset=".6197" stop-color="#220099"/><stop offset=".7597" stop-color="#4c0099"/><stop offset=".86" stop-color="#7f0099"/><stop offset=".9005" stop-color="#990096"/><stop offset=".9943" stop-color="#99005c"/><stop offset="1" stop-color="#990059"/></linearGradient><linearGradient id="d201"><stop offset="0" stop-color="#000099"/><stop offset=".4312" stop-color="#030099"/><stop offset=".623" stop-color="#220099"/><stop offset=".7629" stop-color="#4c0099"/><stop offset=".8633" stop-color="#7f0099"/><stop offset=".9037" stop-color="#990096"/><stop offset=".9976" stop-color="#99005c"/><stop offset="1" stop-color="#99005b"/></linearGradient><linearGradient id="d202"><stop offset="0" stop-color="#000099"/><stop offset=".4345" stop-color="#030099"/><stop offset=".6262" stop-color="#220099"/><stop offset=".7662" stop-color="#4c0099"/><stop offset=".8665" stop-color="#7f0099"/><stop offset=".907" stop-color="#990096"/><stop offset="1" stop-color="#99005c"/></linearGradient><linearGradient id="d203"><stop offset="0" stop-color="#000099"/><stop offset=".4377" stop-color="#030099"/><stop offset=".6294" stop-color="#220099"/><stop offset=".7694" stop-color="#4c0099"/><stop offset=".8697" stop-color="#7f0099"/><stop offset=".911" stop-color="#990096"/><stop offset="1" stop-color="#99005e"/></linearGradient><linearGradient id="d204"><stop offset="0" stop-color="#000099"/><stop offset=".4409" stop-color="#030099"/><stop offset=".6327" stop-color="#220099"/><stop offset=".7727" stop-color="#4c0099"/><stop offset=".873" stop-color="#7f0099"/><stop offset=".9142" stop-color="#990096"/><stop offset="1" stop-color="#990060"/></linearGradient><linearGradient id="d205"><stop offset="0" stop-color="#000099"/><stop offset=".4442" stop-color="#030099"/><stop offset=".6359" stop-color="#220099"/><stop offset=".7759" stop-color="#4c0099"/><stop offset=".8762" stop-color="#7f0099"/><stop offset=".9175" stop-color="#990096"/><stop offset="1" stop-color="#990061"/></linearGradient><linearGradient id="d206"><stop offset="0" stop-color="#000099"/><stop offset=".4474" stop-color="#030099"/><stop offset=".6392" stop-color="#220099"/><stop offset=".7791" stop-color="#4c0099"/><stop offset=".8794" stop-color="#7f0099"/><stop offset=".9207" stop-color="#990096"/><stop offset="1" stop-color="#990063"/></linearGradient><linearGradient id="d207"><stop offset="0" stop-color="#000099"/><stop offset=".4506" stop-color="#030099"/><stop offset=".6424" stop-color="#220099"/><stop offset=".7824" stop-color="#4c0099"/><stop offset=".8827" stop-color="#7f0099"/><stop offset=".9239" stop-color="#990096"/><stop offset="1" stop-color="#990065"/></linearGradient><linearGradient id="d208"><stop offset="0" stop-color="#000099"/><stop offset=".4539" stop-color="#030099"/><stop offset=".6456" stop-color="#220099"/><stop offset=".7856" stop-color="#4c0099"/><stop offset=".8859" stop-color="#7f0099"/><stop offset=".9272" stop-color="#990096"/><stop offset="1" stop-color="#990067"/></linearGradient><linearGradient id="d209"><stop offset="0" stop-color="#000099"/><stop offset=".4571" stop-color="#030099"/><stop offset=".6489" stop-color="#220099"/><stop offset=".7888" stop-color="#4c0099"/><stop offset=".8892" stop-color="#7f0099"/><stop offset=".9304" stop-color="#990096"/><stop offset="1" stop-color="#990069"/></linearGradient><linearGradient id="d210"><stop offset="0" stop-color="#000099"/><stop offset=".4604" stop-color="#030099"/><stop offset=".6521" stop-color="#220099"/><stop offset=".7921" stop-color="#4c0099"/><stop offset=".8924" stop-color="#7f0099"/><stop offset=".9337" stop-color="#990096"/><stop offset="1" stop-color="#99006a"/></linearGradient><linearGradient id="d211"><stop offset="0" stop-color="#000099"/><stop offset=".4636" stop-color="#030099"/><stop offset=".6553" stop-color="#220099"/><stop offset=".7953" stop-color="#4c0099"/><stop offset=".8956" stop-color="#7f0099"/><stop offset=".9369" stop-color="#990096"/><stop offset="1" stop-color="#99006c"/></linearGradient><linearGradient id="d212"><stop offset="0" stop-color="#000099"/><stop offset=".4676" stop-color="#030099"/><stop offset=".6594" stop-color="#220099"/><stop offset=".7994" stop-color="#4c0099"/><stop offset=".8997" stop-color="#7f0099"/><stop offset=".9401" stop-color="#990096"/><stop offset="1" stop-color="#99006e"/></linearGradient><linearGradient id="d213"><stop offset="0" stop-color="#000099"/><stop offset=".4709" stop-color="#030099"/><stop offset=".6626" stop-color="#220099"/><stop offset=".8026" stop-color="#4c0099"/><stop offset=".9029" stop-color="#7f0099"/><stop offset=".9442" stop-color="#990096"/><stop offset="1" stop-color="#990070"/></linearGradient><linearGradient id="d214"><stop offset="0" stop-color="#000099"/><stop offset=".4741" stop-color="#030099"/><stop offset=".6659" stop-color="#220099"/><stop offset=".8058" stop-color="#4c0099"/><stop offset=".9061" stop-color="#7f0099"/><stop offset=".9474" stop-color="#990096"/><stop offset="1" stop-color="#990072"/></linearGradient><linearGradient id="d215"><stop offset="0" stop-color="#000099"/><stop offset=".4773" stop-color="#030099"/><stop offset=".6691" stop-color="#220099"/><stop offset=".8091" stop-color="#4c0099"/><stop offset=".9094" stop-color="#7f0099"/><stop offset=".9506" stop-color="#990096"/><stop offset="1" stop-color="#990074"/></linearGradient><linearGradient id="d216"><stop offset="0" stop-color="#000099"/><stop offset=".4806" stop-color="#030099"/><stop offset=".6723" stop-color="#220099"/><stop offset=".8123" stop-color="#4c0099"/><stop offset=".9126" stop-color="#7f0099"/><stop offset=".9539" stop-color="#990096"/><stop offset="1" stop-color="#990076"/></linearGradient><linearGradient id="d217"><stop offset="0" stop-color="#000099"/><stop offset=".4838" stop-color="#030099"/><stop offset=".6756" stop-color="#220099"/><stop offset=".8155" stop-color="#4c0099"/><stop offset=".9159" stop-color="#7f0099"/><stop offset=".9571" stop-color="#990096"/><stop offset="1" stop-color="#990078"/></linearGradient><linearGradient id="d218"><stop offset="0" stop-color="#000099"/><stop offset=".4871" stop-color="#030099"/><stop offset=".6788" stop-color="#220099"/><stop offset=".8188" stop-color="#4c0099"/><stop offset=".9191" stop-color="#7f0099"/><stop offset=".9604" stop-color="#990096"/><stop offset="1" stop-color="#99007a"/></linearGradient><linearGradient id="d219"><stop offset="0" stop-color="#000099"/><stop offset=".4903" stop-color="#030099"/><stop offset=".682" stop-color="#220099"/><stop offset=".822" stop-color="#4c0099"/><stop offset=".9223" stop-color="#7f0099"/><stop offset=".9636" stop-color="#990096"/><stop offset="1" stop-color="#99007d"/></linearGradient><linearGradient id="d220"><stop offset="0" stop-color="#000099"/><stop offset=".4935" stop-color="#030099"/><stop offset=".6853" stop-color="#220099"/><stop offset=".8252" stop-color="#4c0099"/><stop offset=".9256" stop-color="#7f0099"/><stop offset=".9668" stop-color="#990096"/><stop offset="1" stop-color="#99007f"/></linearGradient><linearGradient id="d221"><stop offset="0" stop-color="#000099"/><stop offset=".4968" stop-color="#030099"/><stop offset=".6885" stop-color="#220099"/><stop offset=".8285" stop-color="#4c0099"/><stop offset=".9288" stop-color="#7f0099"/><stop offset=".9701" stop-color="#990096"/><stop offset="1" stop-color="#990081"/></linearGradient><linearGradient id="d222"><stop offset="0" stop-color="#000099"/><stop offset=".5" stop-color="#030099"/><stop offset=".6917" stop-color="#220099"/><stop offset=".8317" stop-color="#4c0099"/><stop offset=".932" stop-color="#7f0099"/><stop offset=".9733" stop-color="#990096"/><stop offset="1" stop-color="#990083"/></linearGradient><linearGradient id="d223"><stop offset="0" stop-color="#000099"/><stop offset=".5032" stop-color="#030099"/><stop offset=".695" stop-color="#220099"/><stop offset=".835" stop-color="#4c0099"/><stop offset=".9353" stop-color="#7f0099"/><stop offset=".9773" stop-color="#990096"/><stop offset="1" stop-color="#990085"/></linearGradient><linearGradient id="d224"><stop offset="0" stop-color="#000099"/><stop offset=".5065" stop-color="#030099"/><stop offset=".6982" stop-color="#220099"/><stop offset=".8382" stop-color="#4c0099"/><stop offset=".9385" stop-color="#7f0099"/><stop offset=".9806" stop-color="#990096"/><stop offset="1" stop-color="#990088"/></linearGradient><linearGradient id="d225"><stop offset="0" stop-color="#000099"/><stop offset=".5097" stop-color="#030099"/><stop offset=".7023" stop-color="#220099"/><stop offset=".8422" stop-color="#4c0099"/><stop offset=".9426" stop-color="#7f0099"/><stop offset=".9838" stop-color="#990096"/><stop offset="1" stop-color="#99008a"/></linearGradient><linearGradient id="d226"><stop offset="0" stop-color="#000099"/><stop offset=".5138" stop-color="#030099"/><stop offset=".7055" stop-color="#220099"/><stop offset=".8455" stop-color="#4c0099"/><stop offset=".9458" stop-color="#7f0099"/><stop offset=".9871" stop-color="#990096"/><stop offset="1" stop-color="#99008c"/></linearGradient><linearGradient id="d227"><stop offset="0" stop-color="#000099"/><stop offset=".517" stop-color="#030099"/><stop offset=".7087" stop-color="#220099"/><stop offset=".8487" stop-color="#4c0099"/><stop offset=".949" stop-color="#7f0099"/><stop offset=".9903" stop-color="#990096"/><stop offset="1" stop-color="#99008f"/></linearGradient><linearGradient id="d228"><stop offset="0" stop-color="#000099"/><stop offset=".5202" stop-color="#030099"/><stop offset=".712" stop-color="#220099"/><stop offset=".8519" stop-color="#4c0099"/><stop offset=".9523" stop-color="#7f0099"/><stop offset=".9935" stop-color="#990096"/><stop offset="1" stop-color="#990091"/></linearGradient><clipPath id="plotclip"><rect x="1010" y="79" width="618" height="476"/></clipPath><clipPath id="loc"><path d="M1273.5 541.3 L1273.5 541.3 L1273.4 541.3 L1273.4 541.3 L1273.4 541.3 L1273.3 541.3 L1273.3 541.3 L1273.3 541.4 L1273.2 541.4 L1273.2 541.5 L1273.2 541.5 L1273.1 541.6 L1273.1 541.6 L1273.0 541.6 L1273.0 541.6 L1272.9 541.6 L1272.9 541.6 L1272.8 541.6 L1272.7 541.6 L1272.7 541.6 L1272.6 541.7 L1272.6 541.7 L1272.5 541.8 L1272.4 541.8 L1272.3 541.9 L1272.3 541.9 L1272.2 541.9 L1272.1 541.9 L1272.0 541.9 L1271.9 541.9 L1271.8 541.9 L1271.7 541.9 L1271.6 541.9 L1271.5 541.9 L1271.4 541.9 L1271.3 541.9 L1271.2 541.9 L1271.0 541.9 L1270.9 541.9 L1270.8 541.9 L1270.6 541.9 L1270.5 541.9 L1270.3 541.9 L1270.1 541.8 L1269.9 541.7 L1269.6 541.6 L1269.4 541.5 L1269.1 541.3 L1268.8 541.1 L1268.4 540.9 L1268.0 540.6 L1267.6 540.3 L1267.1 540.0 L1266.6 539.7 L1266.1 539.3 L1265.6 538.9 L1265.0 538.5 L1264.5 538.1 L1263.9 537.6 L1263.2 537.1 L1262.5 536.6 L1261.8 536.0 L1261.0 535.3 L1260.1 534.6 L1259.2 533.9 L1258.3 533.1 L1257.3 532.3 L1256.3 531.5 L1255.3 530.6 L1254.3 529.7 L1253.1 528.7 L1252.0 527.8 L1250.8 526.7 L1249.5 525.7 L1248.3 524.6 L1246.9 523.5 L1245.5 522.4 L1244.1 521.1 L1242.5 519.9 L1240.9 518.5 L1239.2 517.1 L1237.4 515.7 L1235.6 514.1 L1233.6 512.6 L1231.7 510.9 L1229.7 509.3 L1227.6 507.6 L1225.5 505.8 L1223.3 504.0 L1221.0 502.0 L1218.6 500.0 L1216.2 497.8 L1213.6 495.6 L1211.0 493.2 L1208.3 490.8 L1205.5 488.2 L1202.6 485.4 L1199.7 482.6 L1196.7 479.7 L1193.6 476.6 L1190.4 473.3 L1187.0 469.7 L1183.4 465.7 L1179.5 461.4 L1175.5 456.7 L1171.3 451.7 L1166.9 446.3 L1162.4 440.7 L1157.8 434.8 L1153.1 428.5 L1148.2 421.9 L1143.2 415.0 L1138.1 407.7 L1132.9 400.2 L1127.7 392.4 L1122.4 384.3 L1116.9 375.8 L1111.4 367.0 L1105.9 358.0 L1100.4 348.9 L1095.0 339.7 L1089.6 330.5 L1084.1 321.0 L1078.7 311.4 L1073.4 301.7 L1068.3 292.2 L1063.5 282.7 L1058.9 273.4 L1054.5 264.0 L1050.3 254.7 L1046.2 245.6 L1042.5 236.6 L1038.9 228.0 L1035.6 219.7 L1032.4 211.6 L1029.5 203.7 L1026.9 196.1 L1024.4 188.8 L1022.2 181.9 L1020.2 175.4 L1018.5 169.2 L1017.0 163.4 L1015.7 157.9 L1014.5 152.6 L1013.6 147.6 L1012.8 143.0 L1012.2 138.6 L1011.8 134.6 L1011.5 130.8 L1011.4 127.2 L1011.5 123.8 L1011.7 120.5 L1012.0 117.5 L1012.5 114.7 L1013.1 112.1 L1013.9 109.7 L1014.8 107.4 L1015.8 105.2 L1016.9 103.3 L1018.2 101.5 L1019.6 99.8 L1021.1 98.3 L1022.6 97.0 L1024.2 95.7 L1026.0 94.7 L1027.8 93.8 L1029.7 93.0 L1031.7 92.3 L1033.7 91.7 L1035.8 91.1 L1037.9 90.7 L1040.1 90.4 L1042.4 90.1 L1044.6 89.9 L1046.9 89.7 L1049.3 89.5 L1051.7 89.4 L1054.1 89.3 L1056.5 89.3 L1058.9 89.2 L1061.4 89.2 L1063.8 89.2 L1066.2 89.2 L1068.6 89.2 L1071.1 89.3 L1073.5 89.3 L1076.0 89.4 L1078.5 89.5 L1081.0 89.6 L1083.5 89.7 L1086.1 89.8 L1088.7 90.0 L1091.3 90.1 L1093.9 90.3 L1096.6 90.5 L1099.4 90.6 L1102.1 90.9 L1104.9 91.1 L1107.7 91.3 L1110.6 91.5 L1113.5 91.8 L1116.5 92.1 L1119.5 92.3 L1122.5 92.6 L1125.6 92.9 L1128.8 93.2 L1132.0 93.5 L1135.2 93.9 L1138.5 94.2 L1141.9 94.6 L1145.3 94.9 L1148.8 95.3 L1152.3 95.7 L1155.9 96.0 L1159.6 96.4 L1163.3 96.8 L1167.1 97.3 L1170.9 97.7 L1174.8 98.1 L1178.8 98.6 L1182.9 99.0 L1187.0 99.5 L1191.2 100.0 L1195.4 100.4 L1199.8 100.9 L1204.2 101.4 L1208.7 101.9 L1213.2 102.5 L1217.9 103.0 L1222.6 103.5 L1227.3 104.1 L1232.2 104.6 L1237.1 105.2 L1242.1 105.8 L1247.2 106.4 L1252.3 107.0 L1257.6 107.6 L1262.8 108.2 L1268.2 108.8 L1273.7 109.4 L1279.2 110.1 L1284.7 110.7 L1290.4 111.4 L1296.1 112.0 L1301.9 112.7 L1307.8 113.4 L1313.7 114.1 L1319.6 114.7 L1325.6 115.4 L1331.7 116.1 L1337.8 116.8 L1344.0 117.5 L1350.1 118.3 L1356.4 119.0 L1362.6 119.7 L1368.9 120.4 L1375.2 121.2 L1381.4 121.9 L1387.6 122.6 L1393.8 123.3 L1399.9 124.0 L1405.9 124.7 L1412.0 125.4 L1418.0 126.1 L1424.0 126.8 L1430.0 127.5 L1435.9 128.2 L1441.9 128.9 L1447.8 129.6 L1453.6 130.2 L1459.3 130.9 L1464.9 131.5 L1470.4 132.2 L1475.8 132.8 L1481.1 133.4 L1486.3 134.0 L1491.4 134.6 L1496.4 135.1 L1501.2 135.7 L1506.0 136.3 L1510.7 136.8 L1515.3 137.3 L1519.7 137.8 L1524.0 138.3 L1528.2 138.8 L1532.2 139.3 L1536.2 139.8 L1540.0 140.2 L1543.8 140.6 L1547.4 141.1 L1550.9 141.5 L1554.3 141.8 L1557.6 142.2 L1560.8 142.6 L1564.0 143.0 L1567.0 143.3 L1569.9 143.6 L1572.8 144.0 L1575.6 144.3 L1578.3 144.6 L1581.0 144.9 L1583.6 145.2 L1586.1 145.5 L1588.6 145.8 L1591.1 146.1 L1593.4 146.4 L1595.7 146.6 L1598.0 146.9 L1600.1 147.1 L1602.3 147.4 L1604.3 147.6 L1606.3 147.9 L1608.2 148.1 L1610.0 148.3 L1611.8 148.5 L1613.5 148.7 L1615.2 148.9 L1616.8 149.0 L1618.3 149.2 L1619.7 149.4 L1621.1 149.5 L1622.4 149.7 L1623.7 149.8 L1624.9 150.0 L1626.1 150.1 L1627.2 150.3 L1628.3 150.4 L1629.4 150.5 L1630.4 150.6 L1631.3 150.7 L1632.2 150.8 L1633.1 150.9 L1633.9 151.0 L1634.7 151.1 L1635.4 151.2 L1636.1 151.3 L1636.8 151.4 L1637.4 151.4 L1637.9 151.5 L1638.4 151.6 L1638.8 151.6 L1639.3 151.7 L1639.7 151.7 L1640.2 151.8 L1640.6 151.8 L1641.0 151.9 L1641.4 151.9 L1641.8 151.9 L1642.2 152.0 L1642.5 152.0 L1642.9 152.1 L1643.2 152.1 L1643.5 152.1 L1643.8 152.2 L1644.1 152.2 L1644.4 152.3 L1644.7 152.3 L1645.1 152.3 L1645.4 152.4 L1645.7 152.4 L1646.0 152.4 L1646.3 152.5 L1646.6 152.5 L1646.9 152.5 L1647.2 152.6 L1647.4 152.6 L1647.7 152.6 L1647.9 152.7 L1648.1 152.7 L1648.3 152.7 L1648.5 152.7 L1648.6 152.7 L1648.8 152.8 L1648.9 152.8 L1649.0 152.8 L1649.1 152.8 L1649.2 152.8 L1649.3 152.8 L1649.3 152.8 L1649.4 152.8 L1649.4 152.8 L1649.5 152.8 L1649.5 152.8 L1649.6 152.8 L1649.6 152.9 Z"/></clipPath><clipPath id="tri"><path d="M1472.4 139.9 L1087.6 98.0 L1190.0 429.3 Z"/></clipPath></defs>
<g clip-path="url(#plotclip)"><g clip-path="url(#loc)">
<g><rect x="1010" y="86" width="618" height="2" fill="url(#d0)"/><rect x="1010" y="88" width="618" height="2" fill="url(#d1)"/><rect x="1010" y="90" width="618" height="2" fill="url(#d2)"/><rect x="1010" y="92" width="618" height="2" fill="url(#d3)"/><rect x="1010" y="94" width="618" height="2" fill="url(#d4)"/><rect x="1010" y="96" width="618" height="2" fill="url(#d5)"/><rect x="1010" y="98" width="618" height="2" fill="url(#d6)"/><rect x="1010" y="100" width="618" height="2" fill="url(#d7)"/><rect x="1010" y="102" width="618" height="2" fill="url(#d8)"/><rect x="1010" y="104" width="618" height="2" fill="url(#d9)"/><rect x="1010" y="106" width="618" height="2" fill="url(#d10)"/><rect x="1010" y="108" width="618" height="2" fill="url(#d11)"/><rect x="1010" y="110" width="618" height="2" fill="url(#d12)"/><rect x="1010" y="112" width="618" height="2" fill="url(#d13)"/><rect x="1010" y="114" width="618" height="2" fill="url(#d14)"/><rect x="1010" y="116" width="618" height="2" fill="url(#d15)"/><rect x="1010" y="118" width="618" height="2" fill="url(#d16)"/><rect x="1010" y="120" width="618" height="2" fill="url(#d17)"/><rect x="1010" y="122" width="618" height="2" fill="url(#d18)"/><rect x="1010" y="124" width="618" height="2" fill="url(#d19)"/><rect x="1010" y="126" width="618" height="2" fill="url(#d20)"/><rect x="1010" y="128" width="618" height="2" fill="url(#d21)"/><rect x="1010" y="130" width="618" height="2" fill="url(#d22)"/><rect x="1010" y="132" width="618" height="2" fill="url(#d23)"/><rect x="1010" y="134" width="618" height="2" fill="url(#d24)"/><rect x="1010" y="136" width="618" height="2" fill="url(#d25)"/><rect x="1010" y="138" width="618" height="2" fill="url(#d26)"/><rect x="1010" y="140" width="618" height="2" fill="url(#d27)"/><rect x="1010" y="142" width="618" height="2" fill="url(#d28)"/><rect x="1010" y="144" width="618" height="2" fill="url(#d29)"/><rect x="1010" y="146" width="618" height="2" fill="url(#d30)"/><rect x="1010" y="148" width="618" height="2" fill="url(#d31)"/><rect x="1010" y="150" width="618" height="2" fill="url(#d32)"/><rect x="1010" y="152" width="618" height="2" fill="url(#d33)"/><rect x="1010" y="154" width="618" height="2" fill="url(#d34)"/><rect x="1010" y="156" width="618" height="2" fill="url(#d35)"/><rect x="1010" y="158" width="618" height="2" fill="url(#d36)"/><rect x="1010" y="160" width="618" height="2" fill="url(#d37)"/><rect x="1010" y="162" width="618" height="2" fill="url(#d38)"/><rect x="1010" y="164" width="618" height="2" fill="url(#d39)"/><rect x="1010" y="166" width="618" height="2" fill="url(#d40)"/><rect x="1010" y="168" width="618" height="2" fill="url(#d41)"/><rect x="1010" y="170" width="618" height="2" fill="url(#d42)"/><rect x="1010" y="172" width="618" height="2" fill="url(#d43)"/><rect x="1010" y="174" width="618" height="2" fill="url(#d44)"/><rect x="1010" y="176" width="618" height="2" fill="url(#d45)"/><rect x="1010" y="178" width="618" height="2" fill="url(#d46)"/><rect x="1010" y="180" width="618" height="2" fill="url(#d47)"/><rect x="1010" y="182" width="618" height="2" fill="url(#d48)"/><rect x="1010" y="184" width="618" height="2" fill="url(#d49)"/><rect x="1010" y="186" width="618" height="2" fill="url(#d50)"/><rect x="1010" y="188" width="618" height="2" fill="url(#d51)"/><rect x="1010" y="190" width="618" height="2" fill="url(#d52)"/><rect x="1010" y="192" width="618" height="2" fill="url(#d53)"/><rect x="1010" y="194" width="618" height="2" fill="url(#d54)"/><rect x="1010" y="196" width="618" height="2" fill="url(#d55)"/><rect x="1010" y="198" width="618" height="2" fill="url(#d56)"/><rect x="1010" y="200" width="618" height="2" fill="url(#d57)"/><rect x="1010" y="202" width="618" height="2" fill="url(#d58)"/><rect x="1010" y="204" width="618" height="2" fill="url(#d59)"/><rect x="1010" y="206" width="618" height="2" fill="url(#d60)"/><rect x="1010" y="208" width="618" height="2" fill="url(#d61)"/><rect x="1010" y="210" width="618" height="2" fill="url(#d62)"/><rect x="1010" y="212" width="618" height="2" fill="url(#d63)"/><rect x="1010" y="214" width="618" height="2" fill="url(#d64)"/><rect x="1010" y="216" width="618" height="2" fill="url(#d65)"/><rect x="1010" y="218" width="618" height="2" fill="url(#d66)"/><rect x="1010" y="220" width="618" height="2" fill="url(#d67)"/><rect x="1010" y="222" width="618" height="2" fill="url(#d68)"/><rect x="1010" y="224" width="618" height="2" fill="url(#d69)"/><rect x="1010" y="226" width="618" height="2" fill="url(#d70)"/><rect x="1010" y="228" width="618" height="2" fill="url(#d71)"/><rect x="1010" y="230" width="618" height="2" fill="url(#d72)"/><rect x="1010" y="232" width="618" height="2" fill="url(#d73)"/><rect x="1010" y="234" width="618" height="2" fill="url(#d74)"/><rect x="1010" y="236" width="618" height="2" fill="url(#d75)"/><rect x="1010" y="238" width="618" height="2" fill="url(#d76)"/><rect x="1010" y="240" width="618" height="2" fill="url(#d77)"/><rect x="1010" y="242" width="618" height="2" fill="url(#d78)"/><rect x="1010" y="244" width="618" height="2" fill="url(#d79)"/><rect x="1010" y="246" width="618" height="2" fill="url(#d80)"/><rect x="1010" y="248" width="618" height="2" fill="url(#d81)"/><rect x="1010" y="250" width="618" height="2" fill="url(#d82)"/><rect x="1010" y="252" width="618" height="2" fill="url(#d83)"/><rect x="1010" y="254" width="618" height="2" fill="url(#d84)"/><rect x="1010" y="256" width="618" height="2" fill="url(#d85)"/><rect x="1010" y="258" width="618" height="2" fill="url(#d86)"/><rect x="1010" y="260" width="618" height="2" fill="url(#d87)"/><rect x="1010" y="262" width="618" height="2" fill="url(#d88)"/><rect x="1010" y="264" width="618" height="2" fill="url(#d89)"/><rect x="1010" y="266" width="618" height="2" fill="url(#d90)"/><rect x="1010" y="268" width="618" height="2" fill="url(#d91)"/><rect x="1010" y="270" width="618" height="2" fill="url(#d92)"/><rect x="1010" y="272" width="618" height="2" fill="url(#d93)"/><rect x="1010" y="274" width="618" height="2" fill="url(#d94)"/><rect x="1010" y="276" width="618" height="2" fill="url(#d95)"/><rect x="1010" y="278" width="618" height="2" fill="url(#d96)"/><rect x="1010" y="280" width="618" height="2" fill="url(#d97)"/><rect x="1010" y="282" width="618" height="2" fill="url(#d98)"/><rect x="1010" y="284" width="618" height="2" fill="url(#d99)"/><rect x="1010" y="286" width="618" height="2" fill="url(#d100)"/><rect x="1010" y="288" width="618" height="2" fill="url(#d101)"/><rect x="1010" y="290" width="618" height="2" fill="url(#d102)"/><rect x="1010" y="292" width="618" height="2" fill="url(#d103)"/><rect x="1010" y="294" width="618" height="2" fill="url(#d104)"/><rect x="1010" y="296" width="618" height="2" fill="url(#d105)"/><rect x="1010" y="298" width="618" height="2" fill="url(#d106)"/><rect x="1010" y="300" width="618" height="2" fill="url(#d107)"/><rect x="1010" y="302" width="618" height="2" fill="url(#d108)"/><rect x="1010" y="304" width="618" height="2" fill="url(#d109)"/><rect x="1010" y="306" width="618" height="2" fill="url(#d110)"/><rect x="1010" y="308" width="618" height="2" fill="url(#d111)"/><rect x="1010" y="310" width="618" height="2" fill="url(#d112)"/><rect x="1010" y="312" width="618" height="2" fill="url(#d113)"/><rect x="1010" y="314" width="618" height="2" fill="url(#d114)"/><rect x="1010" y="316" width="618" height="2" fill="url(#d115)"/><rect x="1010" y="318" width="618" height="2" fill="url(#d116)"/><rect x="1010" y="320" width="618" height="2" fill="url(#d117)"/><rect x="1010" y="322" width="618" height="2" fill="url(#d118)"/><rect x="1010" y="324" width="618" height="2" fill="url(#d119)"/><rect x="1010" y="326" width="618" height="2" fill="url(#d120)"/><rect x="1010" y="328" width="618" height="2" fill="url(#d121)"/><rect x="1010" y="330" width="618" height="2" fill="url(#d122)"/><rect x="1010" y="332" width="618" height="2" fill="url(#d123)"/><rect x="1010" y="334" width="618" height="2" fill="url(#d124)"/><rect x="1010" y="336" width="618" height="2" fill="url(#d125)"/><rect x="1010" y="338" width="618" height="2" fill="url(#d126)"/><rect x="1010" y="340" width="618" height="2" fill="url(#d127)"/><rect x="1010" y="342" width="618" height="2" fill="url(#d128)"/><rect x="1010" y="344" width="618" height="2" fill="url(#d129)"/><rect x="1010" y="346" width="618" height="2" fill="url(#d130)"/><rect x="1010" y="348" width="618" height="2" fill="url(#d131)"/><rect x="1010" y="350" width="618" height="2" fill="url(#d132)"/><rect x="1010" y="352" width="618" height="2" fill="url(#d133)"/><rect x="1010" y="354" width="618" height="2" fill="url(#d134)"/><rect x="1010" y="356" width="618" height="2" fill="url(#d135)"/><rect x="1010" y="358" width="618" height="2" fill="url(#d136)"/><rect x="1010" y="360" width="618" height="2" fill="url(#d137)"/><rect x="1010" y="362" width="618" height="2" fill="url(#d138)"/><rect x="1010" y="364" width="618" height="2" fill="url(#d139)"/><rect x="1010" y="366" width="618" height="2" fill="url(#d140)"/><rect x="1010" y="368" width="618" height="2" fill="url(#d141)"/><rect x="1010" y="370" width="618" height="2" fill="url(#d142)"/><rect x="1010" y="372" width="618" height="2" fill="url(#d143)"/><rect x="1010" y="374" width="618" height="2" fill="url(#d144)"/><rect x="1010" y="376" width="618" height="2" fill="url(#d145)"/><rect x="1010" y="378" width="618" height="2" fill="url(#d146)"/><rect x="1010" y="380" width="618" height="2" fill="url(#d147)"/><rect x="1010" y="382" width="618" height="2" fill="url(#d148)"/><rect x="1010" y="384" width="618" height="2" fill="url(#d149)"/><rect x="1010" y="386" width="618" height="2" fill="url(#d150)"/><rect x="1010" y="388" width="618" height="2" fill="url(#d151)"/><rect x="1010" y="390" width="618" height="2" fill="url(#d152)"/><rect x="1010" y="392" width="618" height="2" fill="url(#d153)"/><rect x="1010" y="394" width="618" height="2" fill="url(#d154)"/><rect x="1010" y="396" width="618" height="2" fill="url(#d155)"/><rect x="1010" y="398" width="618" height="2" fill="url(#d156)"/><rect x="1010" y="400" width="618" height="2" fill="url(#d157)"/><rect x="1010" y="402" width="618" height="2" fill="url(#d158)"/><rect x="1010" y="404" width="618" height="2" fill="url(#d159)"/><rect x="1010" y="406" width="618" height="2" fill="url(#d160)"/><rect x="1010" y="408" width="618" height="2" fill="url(#d161)"/><rect x="1010" y="410" width="618" height="2" fill="url(#d162)"/><rect x="1010" y="412" width="618" height="2" fill="url(#d163)"/><rect x="1010" y="414" width="618" height="2" fill="url(#d164)"/><rect x="1010" y="416" width="618" height="2" fill="url(#d165)"/><rect x="1010" y="418" width="618" height="2" fill="url(#d166)"/><rect x="1010" y="420" width="618" height="2" fill="url(#d167)"/><rect x="1010" y="422" width="618" height="2" fill="url(#d168)"/><rect x="1010" y="424" width="618" height="2" fill="url(#d169)"/><rect x="1010" y="426" width="618" height="2" fill="url(#d170)"/><rect x="1010" y="428" width="618" height="2" fill="url(#d171)"/><rect x="1010" y="430" width="618" height="2" fill="url(#d172)"/><rect x="1010" y="432" width="618" height="2" fill="url(#d173)"/><rect x="1010" y="434" width="618" height="2" fill="url(#d174)"/><rect x="1010" y="436" width="618" height="2" fill="url(#d175)"/><rect x="1010" y="438" width="618" height="2" fill="url(#d176)"/><rect x="1010" y="440" width="618" height="2" fill="url(#d177)"/><rect x="1010" y="442" width="618" height="2" fill="url(#d178)"/><rect x="1010" y="444" width="618" height="2" fill="url(#d179)"/><rect x="1010" y="446" width="618" height="2" fill="url(#d180)"/><rect x="1010" y="448" width="618" height="2" fill="url(#d181)"/><rect x="1010" y="450" width="618" height="2" fill="url(#d182)"/><rect x="1010" y="452" width="618" height="2" fill="url(#d183)"/><rect x="1010" y="454" width="618" height="2" fill="url(#d184)"/><rect x="1010" y="456" width="618" height="2" fill="url(#d185)"/><rect x="1010" y="458" width="618" height="2" fill="url(#d186)"/><rect x="1010" y="460" width="618" height="2" fill="url(#d187)"/><rect x="1010" y="462" width="618" height="2" fill="url(#d188)"/><rect x="1010" y="464" width="618" height="2" fill="url(#d189)"/><rect x="1010" y="466" width="618" height="2" fill="url(#d190)"/><rect x="1010" y="468" width="618" height="2" fill="url(#d191)"/><rect x="1010" y="470" width="618" height="2" fill="url(#d192)"/><rect x="1010" y="472" width="618" height="2" fill="url(#d193)"/><rect x="1010" y="474" width="618" height="2" fill="url(#d194)"/><rect x="1010" y="476" width="618" height="2" fill="url(#d195)"/><rect x="1010" y="478" width="618" height="2" fill="url(#d196)"/><rect x="1010" y="480" width="618" height="2" fill="url(#d197)"/><rect x="1010" y="482" width="618" height="2" fill="url(#d198)"/><rect x="1010" y="484" width="618" height="2" fill="url(#d199)"/><rect x="1010" y="486" width="618" height="2" fill="url(#d200)"/><rect x="1010" y="488" width="618" height="2" fill="url(#d201)"/><rect x="1010" y="490" width="618" height="2" fill="url(#d202)"/><rect x="1010" y="492" width="618" height="2" fill="url(#d203)"/><rect x="1010" y="494" width="618" height="2" fill="url(#d204)"/><rect x="1010" y="496" width="618" height="2" fill="url(#d205)"/><rect x="1010" y="498" width="618" height="2" fill="url(#d206)"/><rect x="1010" y="500" width="618" height="2" fill="url(#d207)"/><rect x="1010" y="502" width="618" height="2" fill="url(#d208)"/><rect x="1010" y="504" width="618" height="2" fill="url(#d209)"/><rect x="1010" y="506" width="618" height="2" fill="url(#d210)"/><rect x="1010" y="508" width="618" height="2" fill="url(#d211)"/><rect x="1010" y="510" width="618" height="2" fill="url(#d212)"/><rect x="1010" y="512" width="618" height="2" fill="url(#d213)"/><rect x="1010" y="514" width="618" height="2" fill="url(#d214)"/><rect x="1010" y="516" width="618" height="2" fill="url(#d215)"/><rect x="1010" y="518" width="618" height="2" fill="url(#d216)"/><rect x="1010" y="520" width="618" height="2" fill="url(#d217)"/><rect x="1010" y="522" width="618" height="2" fill="url(#d218)"/><rect x="1010" y="524" width="618" height="2" fill="url(#d219)"/><rect x="1010" y="526" width="618" height="2" fill="url(#d220)"/><rect x="1010" y="528" width="618" height="2" fill="url(#d221)"/><rect x="1010" y="530" width="618" height="2" fill="url(#d222)"/><rect x="1010" y="532" width="618" height="2" fill="url(#d223)"/><rect x="1010" y="534" width="618" height="2" fill="url(#d224)"/><rect x="1010" y="536" width="618" height="2" fill="url(#d225)"/><rect x="1010" y="538" width="618" height="2" fill="url(#d226)"/><rect x="1010" y="540" width="618" height="2" fill="url(#d227)"/><rect x="1010" y="542" width="618" height="2" fill="url(#d228)"/></g>
<g clip-path="url(#tri)"><rect x="1085" y="98" width="15" height="2" fill="url(#b6)"/><rect x="1086" y="100" width="32" height="2" fill="url(#b7)"/><rect x="1086" y="102" width="51" height="2" fill="url(#b8)"/><rect x="1087" y="104" width="68" height="2" fill="url(#b9)"/><rect x="1087" y="106" width="86" height="2" fill="url(#b10)"/><rect x="1088" y="108" width="104" height="2" fill="url(#b11)"/><rect x="1089" y="110" width="121" height="2" fill="url(#b12)"/><rect x="1089" y="112" width="140" height="2" fill="url(#b13)"/><rect x="1090" y="114" width="157" height="2" fill="url(#b14)"/><rect x="1091" y="116" width="174" height="2" fill="url(#b15)"/><rect x="1091" y="118" width="193" height="2" fill="url(#b16)"/><rect x="1092" y="120" width="210" height="2" fill="url(#b17)"/><rect x="1092" y="122" width="229" height="2" fill="url(#b18)"/><rect x="1093" y="124" width="246" height="2" fill="url(#b19)"/><rect x="1094" y="126" width="263" height="2" fill="url(#b20)"/><rect x="1094" y="128" width="282" height="2" fill="url(#b21)"/><rect x="1095" y="130" width="299" height="2" fill="url(#b22)"/><rect x="1095" y="132" width="317" height="2" fill="url(#b23)"/><rect x="1096" y="134" width="335" height="2" fill="url(#b24)"/><rect x="1097" y="136" width="352" height="2" fill="url(#b25)"/><rect x="1097" y="138" width="371" height="2" fill="url(#b26)"/><rect x="1098" y="140" width="376" height="2" fill="url(#b27)"/><rect x="1099" y="142" width="373" height="2" fill="url(#b28)"/><rect x="1099" y="144" width="371" height="2" fill="url(#b29)"/><rect x="1100" y="146" width="368" height="2" fill="url(#b30)"/><rect x="1100" y="148" width="366" height="2" fill="url(#b31)"/><rect x="1101" y="150" width="364" height="2" fill="url(#b32)"/><rect x="1102" y="152" width="361" height="2" fill="url(#b33)"/><rect x="1102" y="154" width="359" height="2" fill="url(#b34)"/><rect x="1103" y="156" width="356" height="2" fill="url(#b35)"/><rect x="1103" y="158" width="354" height="2" fill="url(#b36)"/><rect x="1104" y="160" width="351" height="2" fill="url(#b37)"/><rect x="1105" y="162" width="348" height="2" fill="url(#b38)"/><rect x="1105" y="164" width="346" height="2" fill="url(#b39)"/><rect x="1106" y="166" width="343" height="2" fill="url(#b40)"/><rect x="1107" y="168" width="340" height="2" fill="url(#b41)"/><rect x="1107" y="170" width="338" height="2" fill="url(#b42)"/><rect x="1108" y="172" width="335" height="2" fill="url(#b43)"/><rect x="1108" y="174" width="333" height="2" fill="url(#b44)"/><rect x="1109" y="176" width="330" height="2" fill="url(#b45)"/><rect x="1110" y="178" width="327" height="2" fill="url(#b46)"/><rect x="1110" y="180" width="325" height="2" fill="url(#b47)"/><rect x="1111" y="182" width="322" height="2" fill="url(#b48)"/><rect x="1112" y="184" width="319" height="2" fill="url(#b49)"/><rect x="1112" y="186" width="317" height="2" fill="url(#b50)"/><rect x="1113" y="188" width="314" height="2" fill="url(#b51)"/><rect x="1113" y="190" width="313" height="2" fill="url(#b52)"/><rect x="1114" y="192" width="310" height="2" fill="url(#b53)"/><rect x="1115" y="194" width="307" height="2" fill="url(#b54)"/><rect x="1115" y="196" width="305" height="2" fill="url(#b55)"/><rect x="1116" y="198" width="302" height="2" fill="url(#b56)"/><rect x="1116" y="200" width="300" height="2" fill="url(#b57)"/><rect x="1117" y="202" width="297" height="2" fill="url(#b58)"/><rect x="1118" y="204" width="294" height="2" fill="url(#b59)"/><rect x="1118" y="206" width="292" height="2" fill="url(#b60)"/><rect x="1119" y="208" width="289" height="2" fill="url(#b61)"/><rect x="1120" y="210" width="286" height="2" fill="url(#b62)"/><rect x="1120" y="212" width="284" height="2" fill="url(#b63)"/><rect x="1121" y="214" width="281" height="2" fill="url(#b64)"/><rect x="1121" y="216" width="279" height="2" fill="url(#b65)"/><rect x="1122" y="218" width="276" height="2" fill="url(#b66)"/><rect x="1123" y="220" width="273" height="2" fill="url(#b67)"/><rect x="1123" y="222" width="271" height="2" fill="url(#b68)"/><rect x="1124" y="224" width="268" height="2" fill="url(#b69)"/><rect x="1125" y="226" width="265" height="2" fill="url(#b70)"/><rect x="1125" y="228" width="263" height="2" fill="url(#b71)"/><rect x="1126" y="230" width="260" height="2" fill="url(#b72)"/><rect x="1126" y="232" width="259" height="2" fill="url(#b73)"/><rect x="1127" y="234" width="256" height="2" fill="url(#b74)"/><rect x="1128" y="236" width="253" height="2" fill="url(#b75)"/><rect x="1128" y="238" width="251" height="2" fill="url(#b76)"/><rect x="1129" y="240" width="248" height="2" fill="url(#b77)"/><rect x="1129" y="242" width="246" height="2" fill="url(#b78)"/><rect x="1130" y="244" width="243" height="2" fill="url(#b79)"/><rect x="1131" y="246" width="240" height="2" fill="url(#b80)"/><rect x="1131" y="248" width="238" height="2" fill="url(#b81)"/><rect x="1132" y="250" width="235" height="2" fill="url(#b82)"/><rect x="1133" y="252" width="232" height="2" fill="url(#b83)"/><rect x="1133" y="254" width="230" height="2" fill="url(#b84)"/><rect x="1134" y="256" width="227" height="2" fill="url(#b85)"/><rect x="1134" y="258" width="225" height="2" fill="url(#b86)"/><rect x="1135" y="260" width="222" height="2" fill="url(#b87)"/><rect x="1136" y="262" width="219" height="2" fill="url(#b88)"/><rect x="1136" y="264" width="217" height="2" fill="url(#b89)"/><rect x="1137" y="266" width="214" height="2" fill="url(#b90)"/><rect x="1137" y="268" width="212" height="2" fill="url(#b91)"/><rect x="1138" y="270" width="209" height="2" fill="url(#b92)"/><rect x="1139" y="272" width="207" height="2" fill="url(#b93)"/><rect x="1139" y="274" width="205" height="2" fill="url(#b94)"/><rect x="1140" y="276" width="202" height="2" fill="url(#b95)"/><rect x="1141" y="278" width="199" height="2" fill="url(#b96)"/><rect x="1141" y="280" width="197" height="2" fill="url(#b97)"/><rect x="1142" y="282" width="194" height="2" fill="url(#b98)"/><rect x="1142" y="284" width="192" height="2" fill="url(#b99)"/><rect x="1143" y="286" width="189" height="2" fill="url(#b100)"/><rect x="1144" y="288" width="186" height="2" fill="url(#b101)"/><rect x="1144" y="290" width="184" height="2" fill="url(#b102)"/><rect x="1145" y="292" width="181" height="2" fill="url(#b103)"/><rect x="1146" y="294" width="178" height="2" fill="url(#b104)"/><rect x="1146" y="296" width="176" height="2" fill="url(#b105)"/><rect x="1147" y="298" width="173" height="2" fill="url(#b106)"/><rect x="1147" y="300" width="171" height="2" fill="url(#b107)"/><rect x="1148" y="302" width="168" height="2" fill="url(#b108)"/><rect x="1149" y="304" width="165" height="2" fill="url(#b109)"/><rect x="1149" y="306" width="163" height="2" fill="url(#b110)"/><rect x="1150" y="308" width="160" height="2" fill="url(#b111)"/><rect x="1150" y="310" width="158" height="2" fill="url(#b112)"/><rect x="1151" y="312" width="155" height="2" fill="url(#b113)"/><rect x="1152" y="314" width="153" height="2" fill="url(#b114)"/><rect x="1152" y="316" width="151" height="2" fill="url(#b115)"/><rect x="1153" y="318" width="148" height="2" fill="url(#b116)"/><rect x="1154" y="320" width="145" height="2" fill="url(#b117)"/><rect x="1154" y="322" width="143" height="2" fill="url(#b118)"/><rect x="1155" y="324" width="140" height="2" fill="url(#b119)"/><rect x="1155" y="326" width="138" height="2" fill="url(#b120)"/><rect x="1156" y="328" width="135" height="2" fill="url(#b121)"/><rect x="1157" y="330" width="132" height="2" fill="url(#b122)"/><rect x="1157" y="332" width="130" height="2" fill="url(#b123)"/><rect x="1158" y="334" width="127" height="2" fill="url(#b124)"/><rect x="1158" y="336" width="125" height="2" fill="url(#b125)"/><rect x="1159" y="338" width="122" height="2" fill="url(#b126)"/><rect x="1160" y="340" width="119" height="2" fill="url(#b127)"/><rect x="1160" y="342" width="117" height="2" fill="url(#b128)"/><rect x="1161" y="344" width="114" height="2" fill="url(#b129)"/><rect x="1162" y="346" width="111" height="2" fill="url(#b130)"/><rect x="1162" y="348" width="109" height="2" fill="url(#b131)"/><rect x="1163" y="350" width="106" height="2" fill="url(#b132)"/><rect x="1163" y="352" width="104" height="2" fill="url(#b133)"/><rect x="1164" y="354" width="101" height="2" fill="url(#b134)"/><rect x="1165" y="356" width="99" height="2" fill="url(#b135)"/><rect x="1165" y="358" width="97" height="2" fill="url(#b136)"/><rect x="1166" y="360" width="94" height="2" fill="url(#b137)"/><rect x="1167" y="362" width="91" height="2" fill="url(#b138)"/><rect x="1167" y="364" width="89" height="2" fill="url(#b139)"/><rect x="1168" y="366" width="86" height="2" fill="url(#b140)"/><rect x="1168" y="368" width="84" height="2" fill="url(#b141)"/><rect x="1169" y="370" width="81" height="2" fill="url(#b142)"/><rect x="1170" y="372" width="78" height="2" fill="url(#b143)"/><rect x="1170" y="374" width="76" height="2" fill="url(#b144)"/><rect x="1171" y="376" width="73" height="2" fill="url(#b145)"/><rect x="1171" y="378" width="71" height="2" fill="url(#b146)"/><rect x="1172" y="380" width="68" height="2" fill="url(#b147)"/><rect x="1173" y="382" width="65" height="2" fill="url(#b148)"/><rect x="1173" y="384" width="63" height="2" fill="url(#b149)"/><rect x="1174" y="386" width="60" height="2" fill="url(#b150)"/><rect x="1175" y="388" width="57" height="2" fill="url(#b151)"/><rect x="1175" y="390" width="55" height="2" fill="url(#b152)"/><rect x="1176" y="392" width="52" height="2" fill="url(#b153)"/><rect x="1176" y="394" width="50" height="2" fill="url(#b154)"/><rect x="1177" y="396" width="48" height="2" fill="url(#b155)"/><rect x="1178" y="398" width="45" height="2" fill="url(#b156)"/><rect x="1178" y="400" width="43" height="2" fill="url(#b157)"/><rect x="1179" y="402" width="40" height="2" fill="url(#b158)"/><rect x="1179" y="404" width="38" height="2" fill="url(#b159)"/><rect x="1180" y="406" width="35" height="2" fill="url(#b160)"/><rect x="1181" y="408" width="32" height="2" fill="url(#b161)"/><rect x="1181" y="410" width="30" height="2" fill="url(#b162)"/><rect x="1182" y="412" width="27" height="2" fill="url(#b163)"/><rect x="1183" y="414" width="24" height="2" fill="url(#b164)"/><rect x="1183" y="416" width="22" height="2" fill="url(#b165)"/><rect x="1184" y="418" width="19" height="2" fill="url(#b166)"/><rect x="1184" y="420" width="17" height="2" fill="url(#b167)"/><rect x="1185" y="422" width="14" height="2" fill="url(#b168)"/><rect x="1186" y="424" width="11" height="2" fill="url(#b169)"/><rect x="1186" y="426" width="9" height="2" fill="url(#b170)"/><rect x="1187" y="428" width="6" height="2" fill="url(#b171)"/></g>
</g></g>
<rect x="1009.5" y="78.5" width="619" height="477" fill="none" stroke="#8c8c8c"/>
<line x1="1004" y1="554.5" x2="1010" y2="554.5" stroke="#c8c8c8"/>
<text x="1004" y="560.5" font-size="14" fill="#e8e8e0" text-anchor="end">0</text>
<line x1="1004" y1="514.9" x2="1010" y2="514.9" stroke="#c8c8c8"/>
<text x="1004" y="520.9" font-size="14" fill="#e8e8e0" text-anchor="end">0,05</text>
<line x1="1004" y1="475.2" x2="1010" y2="475.2" stroke="#c8c8c8"/>
<text x="1004" y="481.2" font-size="14" fill="#e8e8e0" text-anchor="end">0,1</text>
<line x1="1004" y1="435.5" x2="1010" y2="435.5" stroke="#c8c8c8"/>
<text x="1004" y="441.5" font-size="14" fill="#e8e8e0" text-anchor="end">0,15</text>
<line x1="1004" y1="395.9" x2="1010" y2="395.9" stroke="#c8c8c8"/>
<text x="1004" y="401.9" font-size="14" fill="#e8e8e0" text-anchor="end">0,2</text>
<line x1="1004" y1="356.2" x2="1010" y2="356.2" stroke="#c8c8c8"/>
<text x="1004" y="362.2" font-size="14" fill="#e8e8e0" text-anchor="end">0,25</text>
<line x1="1004" y1="316.6" x2="1010" y2="316.6" stroke="#c8c8c8"/>
<text x="1004" y="322.6" font-size="14" fill="#e8e8e0" text-anchor="end">0,3</text>
<line x1="1004" y1="276.9" x2="1010" y2="276.9" stroke="#c8c8c8"/>
<text x="1004" y="282.9" font-size="14" fill="#e8e8e0" text-anchor="end">0,35</text>
<line x1="1004" y1="237.3" x2="1010" y2="237.3" stroke="#c8c8c8"/>
<text x="1004" y="243.3" font-size="14" fill="#e8e8e0" text-anchor="end">0,4</text>
<line x1="1004" y1="197.6" x2="1010" y2="197.6" stroke="#c8c8c8"/>
<text x="1004" y="203.6" font-size="14" fill="#e8e8e0" text-anchor="end">0,45</text>
<line x1="1004" y1="158.0" x2="1010" y2="158.0" stroke="#c8c8c8"/>
<text x="1004" y="164.0" font-size="14" fill="#e8e8e0" text-anchor="end">0,5</text>
<line x1="1004" y1="118.3" x2="1010" y2="118.3" stroke="#c8c8c8"/>
<text x="1004" y="124.3" font-size="14" fill="#e8e8e0" text-anchor="end">0,55</text>
<line x1="1010.0" y1="555" x2="1010.0" y2="561" stroke="#c8c8c8"/>
<text x="1010.0" y="576" font-size="14" fill="#e8e8e0" text-anchor="middle">0</text>
<line x1="1061.3" y1="555" x2="1061.3" y2="561" stroke="#c8c8c8"/>
<text x="1061.3" y="576" font-size="14" fill="#e8e8e0" text-anchor="middle">0,05</text>
<line x1="1112.6" y1="555" x2="1112.6" y2="561" stroke="#c8c8c8"/>
<text x="1112.6" y="576" font-size="14" fill="#e8e8e0" text-anchor="middle">0,1</text>
<line x1="1163.9" y1="555" x2="1163.9" y2="561" stroke="#c8c8c8"/>
<text x="1163.9" y="576" font-size="14" fill="#e8e8e0" text-anchor="middle">0,15</text>
<line x1="1215.2" y1="555" x2="1215.2" y2="561" stroke="#c8c8c8"/>
<text x="1215.2" y="576" font-size="14" fill="#e8e8e0" text-anchor="middle">0,2</text>
<line x1="1266.5" y1="555" x2="1266.5" y2="561" stroke="#c8c8c8"/>
<text x="1266.5" y="576" font-size="14" fill="#e8e8e0" text-anchor="middle">0,25</text>
<line x1="1317.8" y1="555" x2="1317.8" y2="561" stroke="#c8c8c8"/>
<text x="1317.8" y="576" font-size="14" fill="#e8e8e0" text-anchor="middle">0,3</text>
<line x1="1369.1" y1="555" x2="1369.1" y2="561" stroke="#c8c8c8"/>
<text x="1369.1" y="576" font-size="14" fill="#e8e8e0" text-anchor="middle">0,35</text>
<line x1="1420.4" y1="555" x2="1420.4" y2="561" stroke="#c8c8c8"/>
<text x="1420.4" y="576" font-size="14" fill="#e8e8e0" text-anchor="middle">0,4</text>
<line x1="1471.7" y1="555" x2="1471.7" y2="561" stroke="#c8c8c8"/>
<text x="1471.7" y="576" font-size="14" fill="#e8e8e0" text-anchor="middle">0,45</text>
<line x1="1523.0" y1="555" x2="1523.0" y2="561" stroke="#c8c8c8"/>
<text x="1523.0" y="576" font-size="14" fill="#e8e8e0" text-anchor="middle">0,5</text>
<line x1="1574.3" y1="555" x2="1574.3" y2="561" stroke="#c8c8c8"/>
<text x="1574.3" y="576" font-size="14" fill="#e8e8e0" text-anchor="middle">0,55</text>
<rect x="1081.5" y="91.0" width="13" height="13" fill="none" stroke="#f0f0f0" stroke-width="2"/>
<rect x="1213.0" y="106.0" width="13" height="13" fill="none" stroke="#f0f0f0" stroke-width="2"/>
<rect x="1467.0" y="132.5" width="13" height="13" fill="none" stroke="#f0f0f0" stroke-width="2"/>
<rect x="1112.5" y="192.0" width="13" height="13" fill="none" stroke="#f0f0f0" stroke-width="2"/>
<rect x="1337.5" y="264.5" width="13" height="13" fill="none" stroke="#f0f0f0" stroke-width="2"/>
<rect x="1183.5" y="422.5" width="13" height="13" fill="none" stroke="#f0f0f0" stroke-width="2"/>
<rect x="1206.5" y="176.5" width="13" height="13" fill="rgba(240,245,255,.85)" stroke="#000" stroke-width="2"/>
<circle cx="1137.6" cy="106.3" r="4.6" fill="#1e9e1e" stroke="#000" stroke-width="1"/>
<circle cx="1221.5" cy="115.0" r="4.6" fill="#b4b424" stroke="#000" stroke-width="1"/>
<circle cx="1149.5" cy="192.0" r="4.6" fill="#22a4a4" stroke="#000" stroke-width="1"/>
<circle cx="1322.5" cy="290.5" r="4.6" fill="#9a109a" stroke="#000" stroke-width="1"/>
<circle cx="1181.0" cy="423.5" r="4.6" fill="#10108c" stroke="#000" stroke-width="1"/>
<circle cx="1479.5" cy="138.0" r="4.6" fill="#b01010" stroke="#000" stroke-width="1"/>
<circle cx="1214.0" cy="181.5" r="4.6" fill="#ffffff" stroke="#000" stroke-width="1"/>
<rect x="1381" y="524" width="244" height="26" fill="#2c2c2c"/>
<text x="1382" y="544" font-size="19" fill="#f2f2f0">Gamut Coverage:&#160; 75,9%</text>
<text x="476" y="622" font-size="14" fill="#e8e8e0" text-anchor="middle">RGB Balance</text>
<rect x="358.5" y="626.5" width="254" height="174" fill="#232323" stroke="#8c8c8c"/>
<line x1="354" y1="627.5" x2="359" y2="627.5" stroke="#c8c8c8"/>
<text x="354" y="632.5" font-size="14" fill="#e8e8e0" text-anchor="end">4</text>
<line x1="359" y1="670.9" x2="612" y2="670.9" stroke="#8c8c8c"/>
<line x1="354" y1="670.9" x2="359" y2="670.9" stroke="#c8c8c8"/>
<text x="354" y="675.9" font-size="14" fill="#e8e8e0" text-anchor="end">2</text>
<line x1="359" y1="714.3" x2="612" y2="714.3" stroke="#8c8c8c"/>
<line x1="354" y1="714.3" x2="359" y2="714.3" stroke="#c8c8c8"/>
<text x="354" y="719.3" font-size="14" fill="#e8e8e0" text-anchor="end">0</text>
<line x1="359" y1="757.7" x2="612" y2="757.7" stroke="#8c8c8c"/>
<line x1="354" y1="757.7" x2="359" y2="757.7" stroke="#c8c8c8"/>
<text x="354" y="762.7" font-size="14" fill="#e8e8e0" text-anchor="end">-2</text>
<line x1="354" y1="801.1" x2="359" y2="801.1" stroke="#c8c8c8"/>
<text x="354" y="806.1" font-size="14" fill="#e8e8e0" text-anchor="end">-4</text>
<line x1="358.5" y1="801" x2="358.5" y2="806" stroke="#c8c8c8"/><line x1="612.5" y1="801" x2="612.5" y2="806" stroke="#c8c8c8"/>
<text x="485" y="817" font-size="14" fill="#e8e8e0" text-anchor="middle">100W</text>
<rect x="383.5" y="705.5" width="67" height="9" fill="url(#rb)" stroke="#000"/>
<rect x="450.5" y="711.5" width="67" height="3" fill="#108010" stroke="#000"/>
<rect x="518.5" y="714.5" width="66" height="56" fill="url(#bb)" stroke="#000"/>
<text x="805" y="614" font-size="14" fill="#e8e8e0" text-anchor="middle">CIE 1931 xy</text></svg>
<svg width="1657" height="897"><rect x="640.5" y="618.5" width="330" height="192" fill="#fff" stroke="#a8a8a8"/><defs><linearGradient id="x0"><stop offset="0" stop-color="#87ffcb"/><stop offset="0.593" stop-color="#e8ffc4"/><stop offset="0.729" stop-color="#fffcc0"/><stop offset="1" stop-color="#ffcf9b"/></linearGradient><linearGradient id="x1"><stop offset="0" stop-color="#88ffcc"/><stop offset="0.59" stop-color="#e9ffc6"/><stop offset="0.723" stop-color="#fffcc2"/><stop offset="1" stop-color="#ffcd9b"/></linearGradient><linearGradient id="x2"><stop offset="0" stop-color="#88ffce"/><stop offset="0.587" stop-color="#e9ffc8"/><stop offset="0.717" stop-color="#fffcc4"/><stop offset="1" stop-color="#ffcc9c"/></linearGradient><linearGradient id="x3"><stop offset="0" stop-color="#89ffcf"/><stop offset="0.584" stop-color="#eaffc9"/><stop offset="0.708" stop-color="#fffcc6"/><stop offset="1" stop-color="#ffcb9c"/></linearGradient><linearGradient id="x4"><stop offset="0" stop-color="#8affd1"/><stop offset="0.581" stop-color="#ebffcb"/><stop offset="0.702" stop-color="#fffcc7"/><stop offset="1" stop-color="#ffca9d"/></linearGradient><linearGradient id="x5"><stop offset="0" stop-color="#8affd2"/><stop offset="0.578" stop-color="#ebffcd"/><stop offset="0.696" stop-color="#fffcc9"/><stop offset="1" stop-color="#ffc99d"/></linearGradient><linearGradient id="x6"><stop offset="0" stop-color="#8bffd4"/><stop offset="0.574" stop-color="#ecffcf"/><stop offset="0.69" stop-color="#fffccb"/><stop offset="1" stop-color="#ffc89e"/></linearGradient><linearGradient id="x7"><stop offset="0" stop-color="#8cffd5"/><stop offset="0.574" stop-color="#edffd0"/><stop offset="0.681" stop-color="#fffccd"/><stop offset="1" stop-color="#ffc79e"/></linearGradient><linearGradient id="x8"><stop offset="0" stop-color="#8dffd7"/><stop offset="0.571" stop-color="#eeffd2"/><stop offset="0.675" stop-color="#fffcce"/><stop offset="1" stop-color="#ffc59f"/></linearGradient><linearGradient id="x9"><stop offset="0" stop-color="#8dffd9"/><stop offset="0.568" stop-color="#efffd4"/><stop offset="0.669" stop-color="#fffcd0"/><stop offset="1" stop-color="#ffc4a0"/></linearGradient><linearGradient id="x10"><stop offset="0" stop-color="#8effda"/><stop offset="0.565" stop-color="#efffd6"/><stop offset="0.663" stop-color="#fffbd2"/><stop offset="1" stop-color="#ffc3a0"/></linearGradient><linearGradient id="x11"><stop offset="0" stop-color="#8fffdc"/><stop offset="0.562" stop-color="#f0ffd7"/><stop offset="0.657" stop-color="#fffbd4"/><stop offset="1" stop-color="#ffc2a1"/></linearGradient><linearGradient id="x12"><stop offset="0" stop-color="#8fffdd"/><stop offset="0.559" stop-color="#f1ffd9"/><stop offset="0.65" stop-color="#fffbd5"/><stop offset="1" stop-color="#ffc1a1"/></linearGradient><linearGradient id="x13"><stop offset="0" stop-color="#90ffdf"/><stop offset="0.556" stop-color="#f1ffdb"/><stop offset="0.641" stop-color="#fffcd7"/><stop offset="1" stop-color="#ffc0a2"/></linearGradient><linearGradient id="x14"><stop offset="0" stop-color="#91ffe1"/><stop offset="0.553" stop-color="#f2ffdd"/><stop offset="0.635" stop-color="#fffbd9"/><stop offset="1" stop-color="#ffbfa2"/></linearGradient><linearGradient id="x15"><stop offset="0" stop-color="#92ffe2"/><stop offset="0.553" stop-color="#f3ffdf"/><stop offset="0.629" stop-color="#fffbdb"/><stop offset="1" stop-color="#ffbea3"/></linearGradient><linearGradient id="x16"><stop offset="0" stop-color="#93ffe4"/><stop offset="0.55" stop-color="#f4ffe1"/><stop offset="0.623" stop-color="#fffbdd"/><stop offset="1" stop-color="#ffbca4"/></linearGradient><linearGradient id="x17"><stop offset="0" stop-color="#93ffe6"/><stop offset="0.547" stop-color="#f5ffe3"/><stop offset="0.617" stop-color="#fffbde"/><stop offset="0.991" stop-color="#ffbda5"/><stop offset="1" stop-color="#ffbba4"/></linearGradient><linearGradient id="x18"><stop offset="0" stop-color="#94ffe7"/><stop offset="0.544" stop-color="#f6ffe5"/><stop offset="0.611" stop-color="#fffbe0"/><stop offset="0.985" stop-color="#ffbca7"/><stop offset="1" stop-color="#ffbaa5"/></linearGradient><linearGradient id="x19"><stop offset="0" stop-color="#95ffe9"/><stop offset="0.541" stop-color="#f6ffe6"/><stop offset="0.605" stop-color="#fffae2"/><stop offset="0.979" stop-color="#ffbca8"/><stop offset="1" stop-color="#ffb9a5"/></linearGradient><linearGradient id="x20"><stop offset="0" stop-color="#96ffeb"/><stop offset="0.538" stop-color="#f7ffe8"/><stop offset="0.599" stop-color="#fffae4"/><stop offset="0.97" stop-color="#ffbcaa"/><stop offset="1" stop-color="#ffb8a6"/></linearGradient><linearGradient id="x21"><stop offset="0" stop-color="#96ffed"/><stop offset="0.535" stop-color="#f8ffea"/><stop offset="0.593" stop-color="#fffae6"/><stop offset="0.964" stop-color="#ffbcab"/><stop offset="1" stop-color="#ffb7a6"/></linearGradient><linearGradient id="x22"><stop offset="0" stop-color="#97ffee"/><stop offset="0.535" stop-color="#f9ffec"/><stop offset="0.593" stop-color="#fff9e6"/><stop offset="0.964" stop-color="#ffbbac"/><stop offset="1" stop-color="#ffb6a7"/></linearGradient><linearGradient id="x23"><stop offset="0" stop-color="#98fff0"/><stop offset="0.532" stop-color="#faffee"/><stop offset="0.593" stop-color="#fff7e7"/><stop offset="0.967" stop-color="#ffb9ac"/><stop offset="1" stop-color="#ffb5a7"/></linearGradient><linearGradient id="x24"><stop offset="0" stop-color="#99fff2"/><stop offset="0.529" stop-color="#fbfff0"/><stop offset="0.605" stop-color="#fff3e5"/><stop offset="0.982" stop-color="#ffb6aa"/><stop offset="1" stop-color="#ffb3a8"/></linearGradient><linearGradient id="x25"><stop offset="0" stop-color="#9afff4"/><stop offset="0.526" stop-color="#fcfff2"/><stop offset="0.717" stop-color="#ffddd2"/><stop offset="1" stop-color="#ffb2a9"/></linearGradient><linearGradient id="x26"><stop offset="0" stop-color="#9bfff5"/><stop offset="0.523" stop-color="#fcfff4"/><stop offset="0.954" stop-color="#ffb7af"/><stop offset="1" stop-color="#ffb1a9"/></linearGradient><linearGradient id="x27"><stop offset="0" stop-color="#9bfff7"/><stop offset="0.52" stop-color="#fdfff7"/><stop offset="0.927" stop-color="#ffbab3"/><stop offset="1" stop-color="#ffb0aa"/></linearGradient><linearGradient id="x28"><stop offset="0" stop-color="#9cfff9"/><stop offset="0.517" stop-color="#fefff9"/><stop offset="0.9" stop-color="#ffbdb8"/><stop offset="1" stop-color="#ffafaa"/></linearGradient><linearGradient id="x29"><stop offset="0" stop-color="#9dfffb"/><stop offset="0.526" stop-color="#fffcf8"/><stop offset="0.881" stop-color="#ffbebb"/><stop offset="1" stop-color="#ffaeab"/></linearGradient><linearGradient id="x30"><stop offset="0" stop-color="#9efffd"/><stop offset="0.52" stop-color="#fffcfa"/><stop offset="0.875" stop-color="#ffbebc"/><stop offset="1" stop-color="#ffadab"/></linearGradient><linearGradient id="x31"><stop offset="0" stop-color="#9fffff"/><stop offset="0.514" stop-color="#fffcfc"/><stop offset="0.869" stop-color="#ffbdbe"/><stop offset="1" stop-color="#ffacac"/></linearGradient><linearGradient id="x32"><stop offset="0" stop-color="#9ffdff"/><stop offset="0.517" stop-color="#fffafc"/><stop offset="0.872" stop-color="#ffbcbe"/><stop offset="1" stop-color="#ffabac"/></linearGradient><linearGradient id="x33"><stop offset="0" stop-color="#9efbff"/><stop offset="0.52" stop-color="#fff8fc"/><stop offset="0.878" stop-color="#ffbabe"/><stop offset="1" stop-color="#ffa9ad"/></linearGradient><linearGradient id="x34"><stop offset="0" stop-color="#9efaff"/><stop offset="0.523" stop-color="#fff6fc"/><stop offset="0.881" stop-color="#ffb8be"/><stop offset="1" stop-color="#ffa8ae"/></linearGradient><linearGradient id="x35"><stop offset="0" stop-color="#9ef8ff"/><stop offset="0.526" stop-color="#fff4fc"/><stop offset="0.884" stop-color="#ffb7be"/><stop offset="1" stop-color="#ffa7ae"/></linearGradient><linearGradient id="x36"><stop offset="0" stop-color="#9df6ff"/><stop offset="0.529" stop-color="#fff2fc"/><stop offset="0.888" stop-color="#ffb5be"/><stop offset="1" stop-color="#ffa6af"/></linearGradient><linearGradient id="x37"><stop offset="0" stop-color="#9df4ff"/><stop offset="0.532" stop-color="#fff0fc"/><stop offset="0.894" stop-color="#ffb3be"/><stop offset="1" stop-color="#ffa5af"/></linearGradient><linearGradient id="x38"><stop offset="0" stop-color="#9df2ff"/><stop offset="0.535" stop-color="#ffedfc"/><stop offset="0.897" stop-color="#ffb1be"/><stop offset="1" stop-color="#ffa4b0"/></linearGradient><linearGradient id="x39"><stop offset="0" stop-color="#9df0ff"/><stop offset="0.538" stop-color="#ffebfc"/><stop offset="0.9" stop-color="#ffb0be"/><stop offset="1" stop-color="#ffa3b0"/></linearGradient><linearGradient id="x40"><stop offset="0" stop-color="#9ceeff"/><stop offset="0.541" stop-color="#ffe9fc"/><stop offset="0.903" stop-color="#ffaebe"/><stop offset="1" stop-color="#ffa2b1"/></linearGradient><linearGradient id="x41"><stop offset="0" stop-color="#9cedff"/><stop offset="0.544" stop-color="#ffe7fc"/><stop offset="0.909" stop-color="#ffacbe"/><stop offset="1" stop-color="#ffa1b1"/></linearGradient><linearGradient id="x42"><stop offset="0" stop-color="#9cebff"/><stop offset="0.529" stop-color="#fee8ff"/><stop offset="0.927" stop-color="#ffa9bc"/><stop offset="1" stop-color="#ff9fb2"/></linearGradient><linearGradient id="x43"><stop offset="0" stop-color="#9be9ff"/><stop offset="0.532" stop-color="#fee6ff"/><stop offset="0.93" stop-color="#ffa7bc"/><stop offset="1" stop-color="#ff9eb2"/></linearGradient><linearGradient id="x44"><stop offset="0" stop-color="#9be7ff"/><stop offset="0.532" stop-color="#fde4ff"/><stop offset="0.951" stop-color="#ffa3b9"/><stop offset="1" stop-color="#ff9db3"/></linearGradient><linearGradient id="x45"><stop offset="0" stop-color="#9be5ff"/><stop offset="0.535" stop-color="#fde2ff"/><stop offset="0.954" stop-color="#ffa2ba"/><stop offset="1" stop-color="#ff9cb4"/></linearGradient><linearGradient id="x46"><stop offset="0" stop-color="#9ae4ff"/><stop offset="0.535" stop-color="#fde0ff"/><stop offset="0.973" stop-color="#ff9eb8"/><stop offset="1" stop-color="#ff9bb4"/></linearGradient><linearGradient id="x47"><stop offset="0" stop-color="#9ae2ff"/><stop offset="0.538" stop-color="#fddeff"/><stop offset="0.979" stop-color="#ff9db7"/><stop offset="1" stop-color="#ff9ab5"/></linearGradient><linearGradient id="x48"><stop offset="0" stop-color="#9ae0ff"/><stop offset="0.538" stop-color="#fcdcff"/><stop offset="0.994" stop-color="#ff9ab6"/><stop offset="1" stop-color="#ff99b5"/></linearGradient><linearGradient id="x49"><stop offset="0" stop-color="#9adeff"/><stop offset="0.541" stop-color="#fcdaff"/><stop offset="1" stop-color="#ff98b6"/></linearGradient><linearGradient id="x50"><stop offset="0" stop-color="#99ddff"/><stop offset="0.541" stop-color="#fbd8ff"/><stop offset="0.641" stop-color="#ffc9ef"/><stop offset="1" stop-color="#ff97b6"/></linearGradient><linearGradient id="x51"><stop offset="0" stop-color="#99dbff"/><stop offset="0.544" stop-color="#fbd6ff"/><stop offset="0.644" stop-color="#ffc7ef"/><stop offset="1" stop-color="#ff96b7"/></linearGradient><linearGradient id="x52"><stop offset="0" stop-color="#99d9ff"/><stop offset="0.544" stop-color="#fbd4ff"/><stop offset="0.614" stop-color="#ffcbf5"/><stop offset="1" stop-color="#ff95b7"/></linearGradient><linearGradient id="x53"><stop offset="0" stop-color="#98d8ff"/><stop offset="0.547" stop-color="#fbd2ff"/><stop offset="0.617" stop-color="#ffc9f5"/><stop offset="1" stop-color="#ff93b8"/></linearGradient><linearGradient id="x54"><stop offset="0" stop-color="#98d6ff"/><stop offset="0.547" stop-color="#fad0ff"/><stop offset="0.608" stop-color="#ffcaf8"/><stop offset="0.991" stop-color="#ff93ba"/><stop offset="1" stop-color="#ff92b8"/></linearGradient><linearGradient id="x55"><stop offset="0" stop-color="#98d4ff"/><stop offset="0.55" stop-color="#faceff"/><stop offset="0.611" stop-color="#ffc8f8"/><stop offset="0.994" stop-color="#ff92ba"/><stop offset="1" stop-color="#ff91b9"/></linearGradient><linearGradient id="x56"><stop offset="0" stop-color="#98d2ff"/><stop offset="0.55" stop-color="#faccff"/><stop offset="0.608" stop-color="#ffc7f9"/><stop offset="0.991" stop-color="#ff91bb"/><stop offset="1" stop-color="#ff90ba"/></linearGradient><linearGradient id="x57"><stop offset="0" stop-color="#97d1ff"/><stop offset="0.553" stop-color="#facbff"/><stop offset="0.611" stop-color="#ffc5f9"/><stop offset="0.994" stop-color="#ff90bb"/><stop offset="1" stop-color="#ff8fba"/></linearGradient><linearGradient id="x58"><stop offset="0" stop-color="#97cfff"/><stop offset="0.553" stop-color="#f9c9ff"/><stop offset="0.611" stop-color="#ffc4fa"/><stop offset="0.994" stop-color="#ff8fbb"/><stop offset="1" stop-color="#ff8ebb"/></linearGradient><linearGradient id="x59"><stop offset="0" stop-color="#97ceff"/><stop offset="0.556" stop-color="#f9c7ff"/><stop offset="0.614" stop-color="#ffc2fa"/><stop offset="1" stop-color="#ff8dbb"/></linearGradient><linearGradient id="x60"><stop offset="0" stop-color="#97ccff"/><stop offset="0.556" stop-color="#f8c5ff"/><stop offset="0.617" stop-color="#ffc0fa"/><stop offset="1" stop-color="#ff8cbc"/></linearGradient><linearGradient id="x61"><stop offset="0" stop-color="#96caff"/><stop offset="0.559" stop-color="#f8c3ff"/><stop offset="0.62" stop-color="#ffbefa"/><stop offset="1" stop-color="#ff8bbc"/></linearGradient><linearGradient id="x62"><stop offset="0" stop-color="#96c9ff"/><stop offset="0.559" stop-color="#f8c1ff"/><stop offset="0.62" stop-color="#ffbdfa"/><stop offset="1" stop-color="#ff8abd"/></linearGradient><linearGradient id="x63"><stop offset="0" stop-color="#96c7ff"/><stop offset="0.562" stop-color="#f8c0ff"/><stop offset="0.623" stop-color="#ffbbfa"/><stop offset="1" stop-color="#ff89bd"/></linearGradient></defs><rect x="641" y="619" width="329" height="3" fill="url(#x0)"/><rect x="641" y="622" width="329" height="3" fill="url(#x1)"/><rect x="641" y="625" width="329" height="3" fill="url(#x2)"/><rect x="641" y="628" width="329" height="3" fill="url(#x3)"/><rect x="641" y="631" width="329" height="3" fill="url(#x4)"/><rect x="641" y="634" width="329" height="3" fill="url(#x5)"/><rect x="641" y="637" width="329" height="3" fill="url(#x6)"/><rect x="641" y="640" width="329" height="3" fill="url(#x7)"/><rect x="641" y="643" width="329" height="3" fill="url(#x8)"/><rect x="641" y="646" width="329" height="3" fill="url(#x9)"/><rect x="641" y="649" width="329" height="3" fill="url(#x10)"/><rect x="641" y="652" width="329" height="3" fill="url(#x11)"/><rect x="641" y="655" width="329" height="3" fill="url(#x12)"/><rect x="641" y="658" width="329" height="3" fill="url(#x13)"/><rect x="641" y="661" width="329" height="3" fill="url(#x14)"/><rect x="641" y="664" width="329" height="3" fill="url(#x15)"/><rect x="641" y="667" width="329" height="3" fill="url(#x16)"/><rect x="641" y="670" width="329" height="3" fill="url(#x17)"/><rect x="641" y="673" width="329" height="3" fill="url(#x18)"/><rect x="641" y="676" width="329" height="3" fill="url(#x19)"/><rect x="641" y="679" width="329" height="3" fill="url(#x20)"/><rect x="641" y="682" width="329" height="3" fill="url(#x21)"/><rect x="641" y="685" width="329" height="3" fill="url(#x22)"/><rect x="641" y="688" width="329" height="3" fill="url(#x23)"/><rect x="641" y="691" width="329" height="3" fill="url(#x24)"/><rect x="641" y="694" width="329" height="3" fill="url(#x25)"/><rect x="641" y="697" width="329" height="3" fill="url(#x26)"/><rect x="641" y="700" width="329" height="3" fill="url(#x27)"/><rect x="641" y="703" width="329" height="3" fill="url(#x28)"/><rect x="641" y="706" width="329" height="3" fill="url(#x29)"/><rect x="641" y="709" width="329" height="3" fill="url(#x30)"/><rect x="641" y="712" width="329" height="3" fill="url(#x31)"/><rect x="641" y="715" width="329" height="3" fill="url(#x32)"/><rect x="641" y="718" width="329" height="3" fill="url(#x33)"/><rect x="641" y="721" width="329" height="3" fill="url(#x34)"/><rect x="641" y="724" width="329" height="3" fill="url(#x35)"/><rect x="641" y="727" width="329" height="3" fill="url(#x36)"/><rect x="641" y="730" width="329" height="3" fill="url(#x37)"/><rect x="641" y="733" width="329" height="3" fill="url(#x38)"/><rect x="641" y="736" width="329" height="3" fill="url(#x39)"/><rect x="641" y="739" width="329" height="3" fill="url(#x40)"/><rect x="641" y="742" width="329" height="3" fill="url(#x41)"/><rect x="641" y="745" width="329" height="3" fill="url(#x42)"/><rect x="641" y="748" width="329" height="3" fill="url(#x43)"/><rect x="641" y="751" width="329" height="3" fill="url(#x44)"/><rect x="641" y="754" width="329" height="3" fill="url(#x45)"/><rect x="641" y="757" width="329" height="3" fill="url(#x46)"/><rect x="641" y="760" width="329" height="3" fill="url(#x47)"/><rect x="641" y="763" width="329" height="3" fill="url(#x48)"/><rect x="641" y="766" width="329" height="3" fill="url(#x49)"/><rect x="641" y="769" width="329" height="3" fill="url(#x50)"/><rect x="641" y="772" width="329" height="3" fill="url(#x51)"/><rect x="641" y="775" width="329" height="3" fill="url(#x52)"/><rect x="641" y="778" width="329" height="3" fill="url(#x53)"/><rect x="641" y="781" width="329" height="3" fill="url(#x54)"/><rect x="641" y="784" width="329" height="3" fill="url(#x55)"/><rect x="641" y="787" width="329" height="3" fill="url(#x56)"/><rect x="641" y="790" width="329" height="3" fill="url(#x57)"/><rect x="641" y="793" width="329" height="3" fill="url(#x58)"/><rect x="641" y="796" width="329" height="3" fill="url(#x59)"/><rect x="641" y="799" width="329" height="3" fill="url(#x60)"/><rect x="641" y="802" width="329" height="3" fill="url(#x61)"/><rect x="641" y="805" width="329" height="3" fill="url(#x62)"/><rect x="641" y="808" width="329" height="2" fill="url(#x63)"/></svg>
<svg width="1657" height="897"><rect x="799" y="707" width="13" height="13" fill="none" stroke="#000" stroke-width="1.7"/><circle cx="817.8" cy="700.5" r="4.3" fill="#ddd" stroke="#444" stroke-width="1"/><circle cx="817.4" cy="704" r="4.3" fill="#fff" stroke="#000" stroke-width="1"/></svg>
<div class="a" style="left:38px;top:626px;font-size:29px;line-height:34px;color:#f2f2f0;white-space:nowrap">Current Reading</div>
<div class="a" style="left:38px;top:698px;font-size:23px;line-height:28px;letter-spacing:.7px;color:#f2f2f0;white-space:nowrap">x: 0,3145</div>
<div class="a" style="left:189px;top:698px;font-size:23px;line-height:28px;letter-spacing:.7px;color:#f2f2f0;white-space:nowrap">y: 0,3315</div>
<div class="a" style="left:38px;top:738px;font-size:23px;line-height:28px;letter-spacing:.7px;color:#f2f2f0;white-space:nowrap">fL: 162,31</div>
<div class="a" style="left:38px;top:778px;font-size:23px;line-height:28px;letter-spacing:.7px;color:#f2f2f0;white-space:nowrap">cd/m²: 556,12</div>
<div class="a" style="left:988px;top:605px;width:14px;height:177px;background:#1a1a1a"></div>
<div class="a" style="left:988px;top:782px;width:14px;height:13px;background:#2c2c2c"></div>
<div class="a" style="left:988px;top:677px;width:14px;height:35px;background:#242424"></div>
<div class="a" style="left:988px;top:747px;width:14px;height:35px;background:#242424"></div>
<div class="a" style="left:988px;top:605px;width:14px;height:37px;background:#000"></div>
<div class="a" style="left:1002px;top:605px;width:599px;height:37px;background:linear-gradient(#292929 0,#292929 49%,#151515 49%,#151515 100%)"></div>
<div class="a" style="left:1002px;top:642.0px;width:599px;height:35.5px;background:#414141"></div>
<div class="a" style="left:1002px;top:677.5px;width:599px;height:34.5px;background:#7c7c7c"></div>
<div class="a" style="left:1002px;top:712.0px;width:599px;height:35.0px;background:#414141"></div>
<div class="a" style="left:1002px;top:747.0px;width:599px;height:34.5px;background:#7c7c7c"></div>
<div class="a" style="left:1002px;top:781.5px;width:599px;height:14.0px;background:#3c3c3c"></div>
<div class="a" style="left:1002px;top:605px;width:599px;height:190px;overflow:hidden">
<div class="a" style="left:74px;top:7px;font-size:20px;line-height:24px;color:#f4f4f0;white-space:nowrap;transform:scaleX(.80);transform-origin:0 0">White</div>
<div class="a" style="left:150px;top:7px;font-size:20px;line-height:24px;color:#f4f4f0;white-space:nowrap;transform:scaleX(.80);transform-origin:0 0">Red</div>
<div class="a" style="left:218px;top:7px;font-size:20px;line-height:24px;color:#f4f4f0;white-space:nowrap;transform:scaleX(.80);transform-origin:0 0">Green</div>
<div class="a" style="left:295px;top:7px;font-size:20px;line-height:24px;color:#f4f4f0;white-space:nowrap;transform:scaleX(.80);transform-origin:0 0">Blue</div>
<div class="a" style="left:362px;top:7px;font-size:20px;line-height:24px;color:#f4f4f0;white-space:nowrap;transform:scaleX(.80);transform-origin:0 0">Cyan</div>
<div class="a" style="left:439px;top:7px;font-size:20px;line-height:24px;color:#f4f4f0;white-space:nowrap;transform:scaleX(.80);transform-origin:0 0">Magenta</div>
<div class="a" style="left:515px;top:7px;font-size:20px;line-height:24px;color:#f4f4f0;white-space:nowrap;transform:scaleX(.80);transform-origin:0 0">Yellow</div>
<div class="a" style="left:592px;top:7px;font-size:20px;line-height:24px;color:#f4f4f0;white-space:nowrap;transform:scaleX(.80);transform-origin:0 0">100W</div>
<div class="a" style="left:4px;top:43px;font-size:20px;line-height:24px;color:#f4f4f0;white-space:nowrap;transform:scaleX(.80);transform-origin:0 0">x: CIE31</div>
<div class="a" style="left:74px;top:43px;font-size:20px;line-height:24px;color:#f4f4f0;white-space:nowrap;transform:scaleX(.80);transform-origin:0 0">0,3148</div>
<div class="a" style="left:150px;top:43px;font-size:20px;line-height:24px;color:#f4f4f0;white-space:nowrap;transform:scaleX(.80);transform-origin:0 0">0,6494</div>
<div class="a" style="left:218px;top:43px;font-size:20px;line-height:24px;color:#f4f4f0;white-space:nowrap;transform:scaleX(.80);transform-origin:0 0">0,3023</div>
<div class="a" style="left:295px;top:43px;font-size:20px;line-height:24px;color:#f4f4f0;white-space:nowrap;transform:scaleX(.80);transform-origin:0 0">0,1449</div>
<div class="a" style="left:362px;top:43px;font-size:20px;line-height:24px;color:#f4f4f0;white-space:nowrap;transform:scaleX(.80);transform-origin:0 0">0,2232</div>
<div class="a" style="left:439px;top:43px;font-size:20px;line-height:24px;color:#f4f4f0;white-space:nowrap;transform:scaleX(.80);transform-origin:0 0">0,3223</div>
<div class="a" style="left:515px;top:43px;font-size:20px;line-height:24px;color:#f4f4f0;white-space:nowrap;transform:scaleX(.80);transform-origin:0 0">0,4241</div>
<div class="a" style="left:592px;top:43px;font-size:20px;line-height:24px;color:#f4f4f0;white-space:nowrap;transform:scaleX(.80);transform-origin:0 0">0,3148</div>
<div class="a" style="left:4px;top:78px;font-size:20px;line-height:24px;color:#f4f4f0;white-space:nowrap;transform:scaleX(.80);transform-origin:0 0">y: CIE31</div>
<div class="a" style="left:74px;top:78px;font-size:20px;line-height:24px;color:#f4f4f0;white-space:nowrap;transform:scaleX(.80);transform-origin:0 0">0,3321</div>
<div class="a" style="left:150px;top:78px;font-size:20px;line-height:24px;color:#f4f4f0;white-space:nowrap;transform:scaleX(.80);transform-origin:0 0">0,3312</div>
<div class="a" style="left:218px;top:78px;font-size:20px;line-height:24px;color:#f4f4f0;white-space:nowrap;transform:scaleX(.80);transform-origin:0 0">0,6065</div>
<div class="a" style="left:295px;top:78px;font-size:20px;line-height:24px;color:#f4f4f0;white-space:nowrap;transform:scaleX(.80);transform-origin:0 0">0,0637</div>
<div class="a" style="left:362px;top:78px;font-size:20px;line-height:24px;color:#f4f4f0;white-space:nowrap;transform:scaleX(.80);transform-origin:0 0">0,3325</div>
<div class="a" style="left:439px;top:78px;font-size:20px;line-height:24px;color:#f4f4f0;white-space:nowrap;transform:scaleX(.80);transform-origin:0 0">0,1563</div>
<div class="a" style="left:515px;top:78px;font-size:20px;line-height:24px;color:#f4f4f0;white-space:nowrap;transform:scaleX(.80);transform-origin:0 0">0,5068</div>
<div class="a" style="left:592px;top:78px;font-size:20px;line-height:24px;color:#f4f4f0;white-space:nowrap;transform:scaleX(.80);transform-origin:0 0">0,3321</div>
<div class="a" style="left:4px;top:114px;font-size:20px;line-height:24px;color:#f4f4f0;white-space:nowrap;transform:scaleX(.80);transform-origin:0 0">Y</div>
<div class="a" style="left:74px;top:114px;font-size:20px;line-height:24px;color:#f4f4f0;white-space:nowrap;transform:scaleX(.80);transform-origin:0 0">294,6542</div>
<div class="a" style="left:150px;top:114px;font-size:20px;line-height:24px;color:#f4f4f0;white-space:nowrap;transform:scaleX(.80);transform-origin:0 0">62,5658</div>
<div class="a" style="left:218px;top:114px;font-size:20px;line-height:24px;color:#f4f4f0;white-space:nowrap;transform:scaleX(.80);transform-origin:0 0">209,1805</div>
<div class="a" style="left:295px;top:114px;font-size:20px;line-height:24px;color:#f4f4f0;white-space:nowrap;transform:scaleX(.80);transform-origin:0 0">22,1870</div>
<div class="a" style="left:362px;top:114px;font-size:20px;line-height:24px;color:#f4f4f0;white-space:nowrap;transform:scaleX(.80);transform-origin:0 0">230,3707</div>
<div class="a" style="left:439px;top:114px;font-size:20px;line-height:24px;color:#f4f4f0;white-space:nowrap;transform:scaleX(.80);transform-origin:0 0">83,8914</div>
<div class="a" style="left:515px;top:114px;font-size:20px;line-height:24px;color:#f4f4f0;white-space:nowrap;transform:scaleX(.80);transform-origin:0 0">273,6989</div>
<div class="a" style="left:592px;top:114px;font-size:20px;line-height:24px;color:#f4f4f0;white-space:nowrap;transform:scaleX(.80);transform-origin:0 0">5</div>
<div class="a" style="left:4px;top:149px;font-size:20px;line-height:24px;color:#f4f4f0;white-space:nowrap;transform:scaleX(.80);transform-origin:0 0">Target Y</div>
<div class="a" style="left:74px;top:149px;font-size:20px;line-height:24px;color:#f4f4f0;white-space:nowrap;transform:scaleX(.80);transform-origin:0 0">294,6542</div>
<div class="a" style="left:150px;top:149px;font-size:20px;line-height:24px;color:#f4f4f0;white-space:nowrap;transform:scaleX(.80);transform-origin:0 0">87,6186</div>
<div class="a" style="left:218px;top:149px;font-size:20px;line-height:24px;color:#f4f4f0;white-space:nowrap;transform:scaleX(.80);transform-origin:0 0">184,8527</div>
<div class="a" style="left:295px;top:149px;font-size:20px;line-height:24px;color:#f4f4f0;white-space:nowrap;transform:scaleX(.80);transform-origin:0 0">22,1830</div>
<div class="a" style="left:362px;top:149px;font-size:20px;line-height:24px;color:#f4f4f0;white-space:nowrap;transform:scaleX(.80);transform-origin:0 0">207,0356</div>
<div class="a" style="left:439px;top:149px;font-size:20px;line-height:24px;color:#f4f4f0;white-space:nowrap;transform:scaleX(.80);transform-origin:0 0">109,8015</div>
<div class="a" style="left:515px;top:149px;font-size:20px;line-height:24px;color:#f4f4f0;white-space:nowrap;transform:scaleX(.80);transform-origin:0 0">272,4713</div>
<div class="a" style="left:592px;top:149px;font-size:20px;line-height:24px;color:#f4f4f0;white-space:nowrap;transform:scaleX(.80);transform-origin:0 0">5</div>
<div class="a" style="left:4px;top:182px;font-size:20px;line-height:24px;color:#f4f4f0;white-space:nowrap;transform:scaleX(.80);transform-origin:0 0">ΔE 2000</div>
<div class="a" style="left:74px;top:182px;font-size:20px;line-height:24px;color:#f4f4f0;white-space:nowrap;transform:scaleX(.80);transform-origin:0 0">1,3613</div>
<div class="a" style="left:150px;top:182px;font-size:20px;line-height:24px;color:#f4f4f0;white-space:nowrap;transform:scaleX(.80);transform-origin:0 0">6,4791</div>
<div class="a" style="left:218px;top:182px;font-size:20px;line-height:24px;color:#f4f4f0;white-space:nowrap;transform:scaleX(.80);transform-origin:0 0">9,2452</div>
<div class="a" style="left:295px;top:182px;font-size:20px;line-height:24px;color:#f4f4f0;white-space:nowrap;transform:scaleX(.80);transform-origin:0 0">2,2532</div>
<div class="a" style="left:362px;top:182px;font-size:20px;line-height:24px;color:#f4f4f0;white-space:nowrap;transform:scaleX(.80);transform-origin:0 0">7,2111</div>
<div class="a" style="left:439px;top:182px;font-size:20px;line-height:24px;color:#f4f4f0;white-space:nowrap;transform:scaleX(.80);transform-origin:0 0">6,5856</div>
<div class="a" style="left:515px;top:182px;font-size:20px;line-height:24px;color:#f4f4f0;white-space:nowrap;transform:scaleX(.80);transform-origin:0 0">1,4076</div>
<div class="a" style="left:592px;top:182px;font-size:20px;line-height:24px;color:#f4f4f0;white-space:nowrap;transform:scaleX(.80);transform-origin:0 0">1</div>
</div>
<div class="a" style="left:1002px;top:796px;width:599px;height:22px;background:#5a5a5a;border-radius:0 0 3px 3px"></div>
<div class="a" style="left:1004px;top:798px;width:13px;height:18px;box-sizing:border-box;border:1px solid #8c8c8c;background:linear-gradient(#7e7e7e,#6a6a6a);border-radius:3px"></div>
<div class="a" style="left:1021px;top:798px;width:507px;height:18px;background:#474747;border-radius:9px"></div>
<div class="a" style="left:1585px;top:798px;width:14px;height:18px;box-sizing:border-box;border:1px solid #8c8c8c;background:linear-gradient(#7e7e7e,#6a6a6a);border-radius:3px"></div>
<div class="a" style="left:1601px;top:643px;width:16px;height:153px;background:#5a5a5a;border-radius:3px"></div>
<div class="a" style="left:1602px;top:644px;width:14px;height:19px;box-sizing:border-box;border:1px solid #8c8c8c;background:linear-gradient(#8a8a8a,#6a6a6a);border-radius:3px"></div>
<div class="a" style="left:1603px;top:667px;width:12px;height:84px;background:#474747;border-radius:6px"></div>
<div class="a" style="left:1602px;top:776px;width:14px;height:18px;box-sizing:border-box;border:1px solid #8c8c8c;background:linear-gradient(#8a8a8a,#6a6a6a);border-radius:3px"></div>
<svg width="1657" height="897"><g fill="#3c3c3c"><path d="M1604.5 657 L1609 651 L1613.5 657 Z"/><path d="M1604.5 781 L1609 787 L1613.5 781 Z"/><path d="M1008 807 L1012.5 801 L1012.5 813 Z"/><path d="M1590 801 L1590 813 L1594.5 807 Z"/></g></svg>
<div class="a" style="left:0;top:826px;width:1657px;height:71px;background:#2a2a2a"></div>
<div class="a" style="left:-2px;top:827px;width:155px;height:70px;background:linear-gradient(#a8a8a8,#8a8a8a 40%,#5e5e5e);border-radius:4px 4px 0 0"></div>
<div class="a" style="left:4px;top:833px;width:143px;height:45px;background:#c0c0c0;border-radius:5px;box-shadow:inset 0 2px 2px rgba(0,0,0,.35)"></div>
<div class="a" style="left:-2px;top:885px;width:155px;text-align:center;font-size:14px;font-weight:bold;line-height:16px;color:#2a2a2a">White</div>
<div class="a" style="left:156px;top:827px;width:155px;height:70px;background:linear-gradient(#a8a8a8,#8a8a8a 40%,#5e5e5e);border-radius:4px 4px 0 0"></div>
<div class="a" style="left:162px;top:833px;width:143px;height:45px;background:#c00000;border-radius:5px;box-shadow:inset 0 2px 2px rgba(0,0,0,.35)"></div>
<div class="a" style="left:156px;top:885px;width:155px;text-align:center;font-size:14px;font-weight:bold;line-height:16px;color:#2a2a2a">Red</div>
<div class="a" style="left:314px;top:827px;width:155px;height:70px;background:linear-gradient(#a8a8a8,#8a8a8a 40%,#5e5e5e);border-radius:4px 4px 0 0"></div>
<div class="a" style="left:320px;top:833px;width:143px;height:45px;background:#00c000;border-radius:5px;box-shadow:inset 0 2px 2px rgba(0,0,0,.35)"></div>
<div class="a" style="left:314px;top:885px;width:155px;text-align:center;font-size:14px;font-weight:bold;line-height:16px;color:#2a2a2a">Green</div>
<div class="a" style="left:472px;top:827px;width:155px;height:70px;background:linear-gradient(#a8a8a8,#8a8a8a 40%,#5e5e5e);border-radius:4px 4px 0 0"></div>
<div class="a" style="left:478px;top:833px;width:143px;height:45px;background:#0000c8;border-radius:5px;box-shadow:inset 0 2px 2px rgba(0,0,0,.35)"></div>
<div class="a" style="left:472px;top:885px;width:155px;text-align:center;font-size:14px;font-weight:bold;line-height:16px;color:#2a2a2a">Blue</div>
<div class="a" style="left:630px;top:827px;width:155px;height:70px;background:linear-gradient(#a8a8a8,#8a8a8a 40%,#5e5e5e);border-radius:4px 4px 0 0"></div>
<div class="a" style="left:636px;top:833px;width:143px;height:45px;background:#00c0c0;border-radius:5px;box-shadow:inset 0 2px 2px rgba(0,0,0,.35)"></div>
<div class="a" style="left:630px;top:885px;width:155px;text-align:center;font-size:14px;font-weight:bold;line-height:16px;color:#2a2a2a">Cyan</div>
<div class="a" style="left:788px;top:827px;width:155px;height:70px;background:linear-gradient(#a8a8a8,#8a8a8a 40%,#5e5e5e);border-radius:4px 4px 0 0"></div>
<div class="a" style="left:794px;top:833px;width:143px;height:45px;background:#c000c0;border-radius:5px;box-shadow:inset 0 2px 2px rgba(0,0,0,.35)"></div>
<div class="a" style="left:788px;top:885px;width:155px;text-align:center;font-size:14px;font-weight:bold;line-height:16px;color:#2a2a2a">Magenta</div>
<div class="a" style="left:945px;top:827px;width:155px;height:70px;background:linear-gradient(#a8a8a8,#8a8a8a 40%,#5e5e5e);border-radius:4px 4px 0 0"></div>
<div class="a" style="left:951px;top:833px;width:143px;height:45px;background:#c8c800;border-radius:5px;box-shadow:inset 0 2px 2px rgba(0,0,0,.35)"></div>
<div class="a" style="left:945px;top:885px;width:155px;text-align:center;font-size:14px;font-weight:bold;line-height:16px;color:#2a2a2a">Yellow</div>
<div class="a" style="left:1103px;top:827px;width:155px;height:70px;background:#2c2c2c;border-radius:4px 4px 0 0"></div>
<div class="a" style="left:1109px;top:833px;width:143px;height:45px;background:#ffffff;border-radius:5px;box-shadow:inset 0 2px 2px rgba(0,0,0,.35)"></div>
<div class="a" style="left:1103px;top:885px;width:155px;text-align:center;font-size:14px;font-weight:bold;line-height:16px;color:#fff">100W</div>
<div class="a" style="left:1263px;top:826px;width:60px;height:71px;background:linear-gradient(#a8a8a8,#6a6a6a 35%,#8a8a8a 35%,#9a9a9a 60%,#666);border-radius:4px 4px 0 0"></div>
<div class="a" style="left:1263px;top:849px;width:60px;height:2px;background:#333"></div>
<div class="a" style="left:1283px;top:829px;width:20px;height:18px;border-radius:50%;background:linear-gradient(#6a6a6a,#9a9a9a)"></div>
<div class="a" style="left:1287px;top:833px;width:0;height:0;border-left:6px solid transparent;border-right:6px solid transparent;border-bottom:6px solid #333"></div>
<div class="a" style="left:1273px;top:857px;width:39px;height:42px;box-sizing:border-box;border:3px solid #1e1e1e;border-radius:6px;background:linear-gradient(#b0b0b0,#8e8e8e)"></div>
<div class="a" style="left:1285px;top:868px;width:17px;height:17px;background:linear-gradient(#1a1a1a 50%,#000 50%)"></div>
<div class="a" style="left:1323px;top:826px;width:59px;height:38px;background:linear-gradient(#aaaaaa,#7e7e7e)"></div>
<div class="a" style="left:1341px;top:833px;width:23px;height:24px;border-radius:50%;background:linear-gradient(#808080,#a8a8a8)"></div>
<div class="a" style="left:1384px;top:826px;width:54px;height:38px;background:linear-gradient(#aaaaaa,#7e7e7e)"></div>
<div class="a" style="left:1400px;top:833px;width:23px;height:24px;border-radius:50%;background:linear-gradient(#808080,#a8a8a8)"></div>
<div class="a" style="left:1440px;top:826px;width:54px;height:38px;background:linear-gradient(#aaaaaa,#7e7e7e)"></div>
<div class="a" style="left:1456px;top:833px;width:23px;height:24px;border-radius:50%;background:linear-gradient(#808080,#a8a8a8)"></div>
<div class="a" style="left:1496px;top:826px;width:55px;height:38px;background:linear-gradient(#aaaaaa,#7e7e7e)"></div>
<div class="a" style="left:1512px;top:833px;width:23px;height:24px;border-radius:50%;background:linear-gradient(#808080,#a8a8a8)"></div>
<div class="a" style="left:1553px;top:826px;width:54px;height:38px;background:linear-gradient(#aaaaaa,#7e7e7e)"></div>
<div class="a" style="left:1569px;top:833px;width:23px;height:24px;border-radius:50%;background:linear-gradient(#808080,#a8a8a8)"></div>
<svg width="1657" height="897"><g fill="#2e2e2e"><rect x="1348" y="840" width="10" height="10"/><path d="M1405 838 L1417 845 L1405 852 Z"/><path d="M1460 839 h4 v2 h-2 v8 h2 v2 h-4 Z M1474 839 h-4 v2 h2 v8 h-2 v2 h4 Z"/><rect x="1465" y="844" width="1.6" height="1.6"/><rect x="1468" y="844" width="1.6" height="1.6"/></g><g fill="none" stroke="#2e2e2e" stroke-width="2.6"><path d="M1523 845 C1526 841 1531 841 1531 845 C1531 849 1526 849 1523 845 C1520 841 1515 841 1515 845 C1515 849 1520 849 1523 845 Z"/><path d="M1573.5 847 A6 6 0 0 1 1582 839.5"/><path d="M1585.5 843 A6 6 0 0 1 1577 850.5"/></g><g fill="#2e2e2e"><path d="M1580 836 L1586 838.5 L1581 843 Z"/><path d="M1579 854 L1573 851.5 L1578 847 Z"/></g></svg>
<div class="a" style="left:1323px;top:865px;width:171px;height:32px;background:linear-gradient(#acacac,#8a8a8a)"></div>
<div class="a" style="left:1496px;top:865px;width:161px;height:32px;background:linear-gradient(#acacac,#8a8a8a)"></div>
<div class="a" style="left:1350px;top:870px;width:27px;height:27px;border-radius:50%;background:linear-gradient(#7a7a7a,#a8a8a8)"></div>
<div class="a" style="left:1354px;top:868px;font-size:24px;line-height:28px;color:#333">«</div>
<div class="a" style="left:1396px;top:866px;font-size:28px;line-height:34px;color:#333;white-space:nowrap">Back</div>
<div class="a" style="left:1529px;top:866px;font-size:28px;line-height:34px;color:#333;white-space:nowrap;letter-spacing:2px">Next</div>
<div class="a" style="left:1616px;top:870px;width:27px;height:27px;border-radius:50%;background:linear-gradient(#7a7a7a,#a8a8a8)"></div>
<div class="a" style="left:1621px;top:868px;font-size:24px;line-height:28px;color:#333">»</div>
<svg width="1657" height="897"><g transform="translate(1634,844)" stroke="#e00808" stroke-width="6.5" stroke-linecap="butt"><line x1="0" y1="-16" x2="0" y2="16"/><line x1="0" y1="-16" x2="0" y2="16" transform="rotate(60)"/><line x1="0" y1="-16" x2="0" y2="16" transform="rotate(120)"/></g></svg>
</body></html>
